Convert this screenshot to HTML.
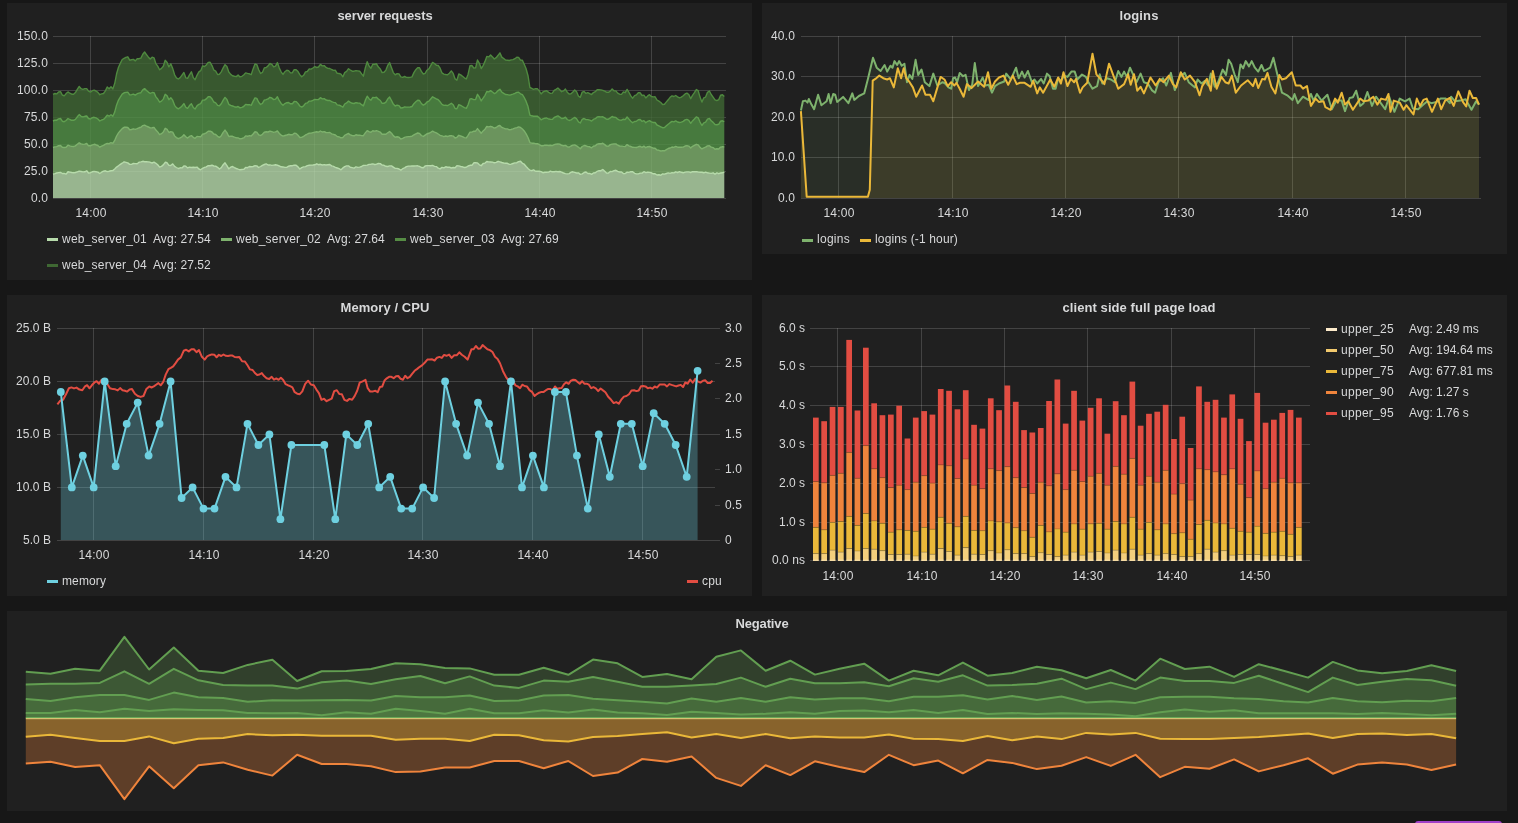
<!DOCTYPE html>
<html><head><meta charset="utf-8"><style>
html,body{margin:0;padding:0;background:#171717;width:1518px;height:823px;overflow:hidden}
body{position:relative;font-family:"Liberation Sans",sans-serif;font-size:12px;color:#d8d9da}
.p{position:absolute;background:#202020}
.t{position:absolute;line-height:16px;white-space:nowrap;will-change:transform}
.sw{position:absolute;height:3px}
svg{position:absolute;left:0;top:0}
.btn{position:absolute;left:1415px;top:821px;width:87px;height:20px;border-radius:3px;background:#a040c8}
</style></head><body>
<div class="p" style="left:7px;top:3px;width:745px;height:277px"></div><div class="p" style="left:762px;top:3px;width:745px;height:251px"></div><div class="p" style="left:7px;top:295px;width:745px;height:301px"></div><div class="p" style="left:762px;top:295px;width:745px;height:301px"></div><div class="p" style="left:7px;top:611px;width:1500px;height:200px"></div>
<svg width="1518" height="823" viewBox="0 0 1518 823">
<line x1="53" y1="198.5" x2="726" y2="198.5" stroke="rgba(255,255,255,0.16)" stroke-width="1"/><line x1="53" y1="171.5" x2="726" y2="171.5" stroke="rgba(255,255,255,0.16)" stroke-width="1"/><line x1="53" y1="144.5" x2="726" y2="144.5" stroke="rgba(255,255,255,0.16)" stroke-width="1"/><line x1="53" y1="117.5" x2="726" y2="117.5" stroke="rgba(255,255,255,0.16)" stroke-width="1"/><line x1="53" y1="90.5" x2="726" y2="90.5" stroke="rgba(255,255,255,0.16)" stroke-width="1"/><line x1="53" y1="63.5" x2="726" y2="63.5" stroke="rgba(255,255,255,0.16)" stroke-width="1"/><line x1="53" y1="36.5" x2="726" y2="36.5" stroke="rgba(255,255,255,0.16)" stroke-width="1"/><line x1="90.5" y1="36" x2="90.5" y2="198" stroke="rgba(255,255,255,0.16)" stroke-width="1"/><line x1="202.5" y1="36" x2="202.5" y2="198" stroke="rgba(255,255,255,0.16)" stroke-width="1"/><line x1="314.5" y1="36" x2="314.5" y2="198" stroke="rgba(255,255,255,0.16)" stroke-width="1"/><line x1="427.5" y1="36" x2="427.5" y2="198" stroke="rgba(255,255,255,0.16)" stroke-width="1"/><line x1="539.5" y1="36" x2="539.5" y2="198" stroke="rgba(255,255,255,0.16)" stroke-width="1"/><line x1="651.5" y1="36" x2="651.5" y2="198" stroke="rgba(255,255,255,0.16)" stroke-width="1"/><line x1="801" y1="198.5" x2="1481" y2="198.5" stroke="rgba(255,255,255,0.16)" stroke-width="1"/><line x1="801" y1="157.5" x2="1481" y2="157.5" stroke="rgba(255,255,255,0.16)" stroke-width="1"/><line x1="801" y1="117.5" x2="1481" y2="117.5" stroke="rgba(255,255,255,0.16)" stroke-width="1"/><line x1="801" y1="76.5" x2="1481" y2="76.5" stroke="rgba(255,255,255,0.16)" stroke-width="1"/><line x1="801" y1="36.5" x2="1481" y2="36.5" stroke="rgba(255,255,255,0.16)" stroke-width="1"/><line x1="838.5" y1="36" x2="838.5" y2="198" stroke="rgba(255,255,255,0.16)" stroke-width="1"/><line x1="952.5" y1="36" x2="952.5" y2="198" stroke="rgba(255,255,255,0.16)" stroke-width="1"/><line x1="1065.5" y1="36" x2="1065.5" y2="198" stroke="rgba(255,255,255,0.16)" stroke-width="1"/><line x1="1178.5" y1="36" x2="1178.5" y2="198" stroke="rgba(255,255,255,0.16)" stroke-width="1"/><line x1="1292.5" y1="36" x2="1292.5" y2="198" stroke="rgba(255,255,255,0.16)" stroke-width="1"/><line x1="1405.5" y1="36" x2="1405.5" y2="198" stroke="rgba(255,255,255,0.16)" stroke-width="1"/><line x1="57" y1="540.5" x2="715" y2="540.5" stroke="rgba(255,255,255,0.16)" stroke-width="1"/><line x1="57" y1="487.5" x2="715" y2="487.5" stroke="rgba(255,255,255,0.16)" stroke-width="1"/><line x1="57" y1="434.5" x2="715" y2="434.5" stroke="rgba(255,255,255,0.16)" stroke-width="1"/><line x1="57" y1="381.5" x2="715" y2="381.5" stroke="rgba(255,255,255,0.16)" stroke-width="1"/><line x1="57" y1="328.5" x2="715" y2="328.5" stroke="rgba(255,255,255,0.16)" stroke-width="1"/><line x1="715" y1="540.5" x2="720" y2="540.5" stroke="rgba(255,255,255,0.16)"/><line x1="715" y1="505.5" x2="720" y2="505.5" stroke="rgba(255,255,255,0.16)"/><line x1="715" y1="469.5" x2="720" y2="469.5" stroke="rgba(255,255,255,0.16)"/><line x1="715" y1="434.5" x2="720" y2="434.5" stroke="rgba(255,255,255,0.16)"/><line x1="715" y1="398.5" x2="720" y2="398.5" stroke="rgba(255,255,255,0.16)"/><line x1="715" y1="363.5" x2="720" y2="363.5" stroke="rgba(255,255,255,0.16)"/><line x1="715" y1="328.5" x2="720" y2="328.5" stroke="rgba(255,255,255,0.16)"/><line x1="93.5" y1="328" x2="93.5" y2="540" stroke="rgba(255,255,255,0.16)" stroke-width="1"/><line x1="203.5" y1="328" x2="203.5" y2="540" stroke="rgba(255,255,255,0.16)" stroke-width="1"/><line x1="313.5" y1="328" x2="313.5" y2="540" stroke="rgba(255,255,255,0.16)" stroke-width="1"/><line x1="422.5" y1="328" x2="422.5" y2="540" stroke="rgba(255,255,255,0.16)" stroke-width="1"/><line x1="532.5" y1="328" x2="532.5" y2="540" stroke="rgba(255,255,255,0.16)" stroke-width="1"/><line x1="642.5" y1="328" x2="642.5" y2="540" stroke="rgba(255,255,255,0.16)" stroke-width="1"/><line x1="810" y1="560.5" x2="1310" y2="560.5" stroke="rgba(255,255,255,0.16)" stroke-width="1"/><line x1="810" y1="522.5" x2="1310" y2="522.5" stroke="rgba(255,255,255,0.16)" stroke-width="1"/><line x1="810" y1="483.5" x2="1310" y2="483.5" stroke="rgba(255,255,255,0.16)" stroke-width="1"/><line x1="810" y1="444.5" x2="1310" y2="444.5" stroke="rgba(255,255,255,0.16)" stroke-width="1"/><line x1="810" y1="405.5" x2="1310" y2="405.5" stroke="rgba(255,255,255,0.16)" stroke-width="1"/><line x1="810" y1="366.5" x2="1310" y2="366.5" stroke="rgba(255,255,255,0.16)" stroke-width="1"/><line x1="810" y1="328.5" x2="1310" y2="328.5" stroke="rgba(255,255,255,0.16)" stroke-width="1"/><line x1="837.5" y1="328" x2="837.5" y2="560" stroke="rgba(255,255,255,0.16)" stroke-width="1"/><line x1="921.5" y1="328" x2="921.5" y2="560" stroke="rgba(255,255,255,0.16)" stroke-width="1"/><line x1="1004.5" y1="328" x2="1004.5" y2="560" stroke="rgba(255,255,255,0.16)" stroke-width="1"/><line x1="1087.5" y1="328" x2="1087.5" y2="560" stroke="rgba(255,255,255,0.16)" stroke-width="1"/><line x1="1171.5" y1="328" x2="1171.5" y2="560" stroke="rgba(255,255,255,0.16)" stroke-width="1"/><line x1="1254.5" y1="328" x2="1254.5" y2="560" stroke="rgba(255,255,255,0.16)" stroke-width="1"/>
<path d="M53.0,174.1 L54.9,173.6 L56.7,173.0 L58.6,172.6 L60.5,172.4 L62.3,173.5 L64.2,173.4 L66.1,174.1 L68.0,171.7 L69.8,172.1 L71.7,172.5 L73.6,172.7 L75.4,172.5 L77.3,171.8 L79.2,171.1 L81.1,171.5 L82.9,171.9 L84.8,171.8 L86.7,170.8 L88.5,173.0 L90.4,172.7 L92.3,171.8 L94.1,171.4 L96.0,171.7 L97.9,172.1 L99.8,173.5 L101.6,172.2 L103.5,171.2 L105.4,170.8 L107.2,171.6 L109.1,171.2 L111.0,170.7 L112.8,170.6 L114.7,169.0 L116.6,167.1 L118.5,165.7 L120.3,164.4 L122.2,163.2 L124.1,161.8 L125.9,162.3 L127.8,162.9 L129.7,164.4 L131.5,164.4 L133.4,163.5 L135.3,163.6 L137.2,163.7 L139.0,162.3 L140.9,161.9 L142.8,161.3 L144.6,161.7 L146.5,161.8 L148.4,161.9 L150.2,162.3 L152.1,163.0 L154.0,162.2 L155.9,163.3 L157.7,164.8 L159.6,167.1 L161.5,166.4 L163.3,164.9 L165.2,162.3 L167.1,162.8 L168.9,165.3 L170.8,165.5 L172.7,163.9 L174.6,166.4 L176.4,167.5 L178.3,168.5 L180.2,167.8 L182.0,167.9 L183.9,165.9 L185.8,166.3 L187.6,167.9 L189.5,167.2 L191.4,167.5 L193.3,167.2 L195.1,167.5 L197.0,167.1 L198.9,169.0 L200.7,169.8 L202.6,168.3 L204.5,167.3 L206.3,166.8 L208.2,165.7 L210.1,165.7 L212.0,165.2 L213.8,166.0 L215.7,166.2 L217.6,167.3 L219.4,169.0 L221.3,167.6 L223.2,164.7 L225.0,162.8 L226.9,165.6 L228.8,168.8 L230.7,167.2 L232.5,166.5 L234.4,167.7 L236.3,168.5 L238.1,169.2 L240.0,169.8 L241.9,169.5 L243.7,169.4 L245.6,167.4 L247.5,167.7 L249.4,166.5 L251.2,166.7 L253.1,166.5 L255.0,165.7 L256.8,165.9 L258.7,167.5 L260.6,166.5 L262.4,165.3 L264.3,164.5 L266.2,163.9 L268.1,165.0 L269.9,164.9 L271.8,165.4 L273.7,165.1 L275.5,164.8 L277.4,165.2 L279.3,166.0 L281.1,166.8 L283.0,167.0 L284.9,167.4 L286.8,167.4 L288.6,166.2 L290.5,165.7 L292.4,165.7 L294.2,165.1 L296.1,165.3 L298.0,166.9 L299.8,169.0 L301.7,167.7 L303.6,166.9 L305.5,166.6 L307.3,165.6 L309.2,165.3 L311.1,165.1 L312.9,165.0 L314.8,164.8 L316.7,163.8 L318.5,164.7 L320.4,164.3 L322.3,165.0 L324.2,164.6 L326.0,165.0 L327.9,164.7 L329.8,164.5 L331.6,165.9 L333.5,166.4 L335.4,167.3 L337.2,168.0 L339.1,168.7 L341.0,169.8 L342.9,167.9 L344.7,166.7 L346.6,165.9 L348.5,165.9 L350.3,167.3 L352.2,167.6 L354.1,168.1 L355.9,166.9 L357.8,167.4 L359.7,167.1 L361.6,166.5 L363.4,165.4 L365.3,165.4 L367.2,165.1 L369.0,164.4 L370.9,164.3 L372.8,163.9 L374.6,164.5 L376.5,164.2 L378.4,163.5 L380.3,163.6 L382.1,165.0 L384.0,165.3 L385.9,166.3 L387.7,166.5 L389.6,165.9 L391.5,165.9 L393.3,167.1 L395.2,168.4 L397.1,168.4 L399.0,169.0 L400.8,170.2 L402.7,168.7 L404.6,167.9 L406.4,166.6 L408.3,166.1 L410.2,166.1 L412.0,165.9 L413.9,166.0 L415.8,165.9 L417.7,165.8 L419.5,166.3 L421.4,167.5 L423.3,167.7 L425.1,166.0 L427.0,165.6 L428.9,165.6 L430.7,165.8 L432.6,165.4 L434.5,166.4 L436.4,166.6 L438.2,168.2 L440.1,168.9 L442.0,167.4 L443.8,167.9 L445.7,166.8 L447.6,167.3 L449.4,167.1 L451.3,168.0 L453.2,167.5 L455.1,167.7 L456.9,165.8 L458.8,165.9 L460.7,166.5 L462.5,166.8 L464.4,167.5 L466.3,167.3 L468.1,166.0 L470.0,165.3 L471.9,165.3 L473.8,162.8 L475.6,162.8 L477.5,162.9 L479.4,164.8 L481.2,165.7 L483.1,163.5 L485.0,163.1 L486.8,161.5 L488.7,161.9 L490.6,162.0 L492.5,162.1 L494.3,162.8 L496.2,162.4 L498.1,161.3 L499.9,161.8 L501.8,162.5 L503.7,163.0 L505.5,163.3 L507.4,163.3 L509.3,164.4 L511.2,164.2 L513.0,163.5 L514.9,162.9 L516.8,162.7 L518.6,161.6 L520.5,161.2 L522.4,163.3 L524.2,164.2 L526.1,166.5 L528.0,168.4 L529.9,170.2 L531.7,170.7 L533.6,169.9 L535.5,171.3 L537.3,171.2 L539.2,171.3 L541.1,171.6 L542.9,172.7 L544.8,172.2 L546.7,172.3 L548.6,172.1 L550.4,171.1 L552.3,171.8 L554.2,171.8 L556.0,171.4 L557.9,171.8 L559.8,171.5 L561.6,172.1 L563.5,173.0 L565.4,173.6 L567.3,173.9 L569.1,173.6 L571.0,172.2 L572.9,171.8 L574.7,172.3 L576.6,173.0 L578.5,172.9 L580.3,174.4 L582.2,173.8 L584.1,172.5 L586.0,172.0 L587.8,173.5 L589.7,173.4 L591.6,174.4 L593.4,173.0 L595.3,172.7 L597.2,171.3 L599.0,170.6 L600.9,170.7 L602.8,169.5 L604.7,171.3 L606.5,173.1 L608.4,173.1 L610.3,171.4 L612.1,171.6 L614.0,170.6 L615.9,170.3 L617.7,171.3 L619.6,172.0 L621.5,171.9 L623.4,173.6 L625.2,173.5 L627.1,172.2 L629.0,172.4 L630.8,171.7 L632.7,171.8 L634.6,173.3 L636.4,173.9 L638.3,173.9 L640.2,173.1 L642.1,173.1 L643.9,171.7 L645.8,172.6 L647.7,172.2 L649.5,172.4 L651.4,172.8 L653.3,173.8 L655.1,173.8 L657.0,175.0 L658.9,174.8 L660.8,175.3 L662.6,173.9 L664.5,174.1 L666.4,173.5 L668.2,172.9 L670.1,173.4 L672.0,172.6 L673.8,172.9 L675.7,171.8 L677.6,172.5 L679.5,171.6 L681.3,172.3 L683.2,172.8 L685.1,172.1 L686.9,171.9 L688.8,171.9 L690.7,172.5 L692.5,171.7 L694.4,171.7 L696.3,171.6 L698.2,172.0 L700.0,172.2 L701.9,172.3 L703.8,172.8 L705.6,172.2 L707.5,172.8 L709.4,173.1 L711.2,173.4 L713.1,172.8 L715.0,174.1 L716.9,172.9 L718.7,173.7 L720.6,173.0 L722.5,172.8 L724.3,172.2 L724.3,198.0 L722.5,198.0 L720.6,198.0 L718.7,198.0 L716.9,198.0 L715.0,198.0 L713.1,198.0 L711.2,198.0 L709.4,198.0 L707.5,198.0 L705.6,198.0 L703.8,198.0 L701.9,198.0 L700.0,198.0 L698.2,198.0 L696.3,198.0 L694.4,198.0 L692.5,198.0 L690.7,198.0 L688.8,198.0 L686.9,198.0 L685.1,198.0 L683.2,198.0 L681.3,198.0 L679.5,198.0 L677.6,198.0 L675.7,198.0 L673.8,198.0 L672.0,198.0 L670.1,198.0 L668.2,198.0 L666.4,198.0 L664.5,198.0 L662.6,198.0 L660.8,198.0 L658.9,198.0 L657.0,198.0 L655.1,198.0 L653.3,198.0 L651.4,198.0 L649.5,198.0 L647.7,198.0 L645.8,198.0 L643.9,198.0 L642.1,198.0 L640.2,198.0 L638.3,198.0 L636.4,198.0 L634.6,198.0 L632.7,198.0 L630.8,198.0 L629.0,198.0 L627.1,198.0 L625.2,198.0 L623.4,198.0 L621.5,198.0 L619.6,198.0 L617.7,198.0 L615.9,198.0 L614.0,198.0 L612.1,198.0 L610.3,198.0 L608.4,198.0 L606.5,198.0 L604.7,198.0 L602.8,198.0 L600.9,198.0 L599.0,198.0 L597.2,198.0 L595.3,198.0 L593.4,198.0 L591.6,198.0 L589.7,198.0 L587.8,198.0 L586.0,198.0 L584.1,198.0 L582.2,198.0 L580.3,198.0 L578.5,198.0 L576.6,198.0 L574.7,198.0 L572.9,198.0 L571.0,198.0 L569.1,198.0 L567.3,198.0 L565.4,198.0 L563.5,198.0 L561.6,198.0 L559.8,198.0 L557.9,198.0 L556.0,198.0 L554.2,198.0 L552.3,198.0 L550.4,198.0 L548.6,198.0 L546.7,198.0 L544.8,198.0 L542.9,198.0 L541.1,198.0 L539.2,198.0 L537.3,198.0 L535.5,198.0 L533.6,198.0 L531.7,198.0 L529.9,198.0 L528.0,198.0 L526.1,198.0 L524.2,198.0 L522.4,198.0 L520.5,198.0 L518.6,198.0 L516.8,198.0 L514.9,198.0 L513.0,198.0 L511.2,198.0 L509.3,198.0 L507.4,198.0 L505.5,198.0 L503.7,198.0 L501.8,198.0 L499.9,198.0 L498.1,198.0 L496.2,198.0 L494.3,198.0 L492.5,198.0 L490.6,198.0 L488.7,198.0 L486.8,198.0 L485.0,198.0 L483.1,198.0 L481.2,198.0 L479.4,198.0 L477.5,198.0 L475.6,198.0 L473.8,198.0 L471.9,198.0 L470.0,198.0 L468.1,198.0 L466.3,198.0 L464.4,198.0 L462.5,198.0 L460.7,198.0 L458.8,198.0 L456.9,198.0 L455.1,198.0 L453.2,198.0 L451.3,198.0 L449.4,198.0 L447.6,198.0 L445.7,198.0 L443.8,198.0 L442.0,198.0 L440.1,198.0 L438.2,198.0 L436.4,198.0 L434.5,198.0 L432.6,198.0 L430.7,198.0 L428.9,198.0 L427.0,198.0 L425.1,198.0 L423.3,198.0 L421.4,198.0 L419.5,198.0 L417.7,198.0 L415.8,198.0 L413.9,198.0 L412.0,198.0 L410.2,198.0 L408.3,198.0 L406.4,198.0 L404.6,198.0 L402.7,198.0 L400.8,198.0 L399.0,198.0 L397.1,198.0 L395.2,198.0 L393.3,198.0 L391.5,198.0 L389.6,198.0 L387.7,198.0 L385.9,198.0 L384.0,198.0 L382.1,198.0 L380.3,198.0 L378.4,198.0 L376.5,198.0 L374.6,198.0 L372.8,198.0 L370.9,198.0 L369.0,198.0 L367.2,198.0 L365.3,198.0 L363.4,198.0 L361.6,198.0 L359.7,198.0 L357.8,198.0 L355.9,198.0 L354.1,198.0 L352.2,198.0 L350.3,198.0 L348.5,198.0 L346.6,198.0 L344.7,198.0 L342.9,198.0 L341.0,198.0 L339.1,198.0 L337.2,198.0 L335.4,198.0 L333.5,198.0 L331.6,198.0 L329.8,198.0 L327.9,198.0 L326.0,198.0 L324.2,198.0 L322.3,198.0 L320.4,198.0 L318.5,198.0 L316.7,198.0 L314.8,198.0 L312.9,198.0 L311.1,198.0 L309.2,198.0 L307.3,198.0 L305.5,198.0 L303.6,198.0 L301.7,198.0 L299.8,198.0 L298.0,198.0 L296.1,198.0 L294.2,198.0 L292.4,198.0 L290.5,198.0 L288.6,198.0 L286.8,198.0 L284.9,198.0 L283.0,198.0 L281.1,198.0 L279.3,198.0 L277.4,198.0 L275.5,198.0 L273.7,198.0 L271.8,198.0 L269.9,198.0 L268.1,198.0 L266.2,198.0 L264.3,198.0 L262.4,198.0 L260.6,198.0 L258.7,198.0 L256.8,198.0 L255.0,198.0 L253.1,198.0 L251.2,198.0 L249.4,198.0 L247.5,198.0 L245.6,198.0 L243.7,198.0 L241.9,198.0 L240.0,198.0 L238.1,198.0 L236.3,198.0 L234.4,198.0 L232.5,198.0 L230.7,198.0 L228.8,198.0 L226.9,198.0 L225.0,198.0 L223.2,198.0 L221.3,198.0 L219.4,198.0 L217.6,198.0 L215.7,198.0 L213.8,198.0 L212.0,198.0 L210.1,198.0 L208.2,198.0 L206.3,198.0 L204.5,198.0 L202.6,198.0 L200.7,198.0 L198.9,198.0 L197.0,198.0 L195.1,198.0 L193.3,198.0 L191.4,198.0 L189.5,198.0 L187.6,198.0 L185.8,198.0 L183.9,198.0 L182.0,198.0 L180.2,198.0 L178.3,198.0 L176.4,198.0 L174.6,198.0 L172.7,198.0 L170.8,198.0 L168.9,198.0 L167.1,198.0 L165.2,198.0 L163.3,198.0 L161.5,198.0 L159.6,198.0 L157.7,198.0 L155.9,198.0 L154.0,198.0 L152.1,198.0 L150.2,198.0 L148.4,198.0 L146.5,198.0 L144.6,198.0 L142.8,198.0 L140.9,198.0 L139.0,198.0 L137.2,198.0 L135.3,198.0 L133.4,198.0 L131.5,198.0 L129.7,198.0 L127.8,198.0 L125.9,198.0 L124.1,198.0 L122.2,198.0 L120.3,198.0 L118.5,198.0 L116.6,198.0 L114.7,198.0 L112.8,198.0 L111.0,198.0 L109.1,198.0 L107.2,198.0 L105.4,198.0 L103.5,198.0 L101.6,198.0 L99.8,198.0 L97.9,198.0 L96.0,198.0 L94.1,198.0 L92.3,198.0 L90.4,198.0 L88.5,198.0 L86.7,198.0 L84.8,198.0 L82.9,198.0 L81.1,198.0 L79.2,198.0 L77.3,198.0 L75.4,198.0 L73.6,198.0 L71.7,198.0 L69.8,198.0 L68.0,198.0 L66.1,198.0 L64.2,198.0 L62.3,198.0 L60.5,198.0 L58.6,198.0 L56.7,198.0 L54.9,198.0 L53.0,198.0 Z" fill="#B7DBAB" fill-opacity="0.8"/>
<path d="M53.0,147.5 L54.9,146.9 L56.7,146.6 L58.6,145.7 L60.5,145.5 L62.3,147.3 L64.2,147.5 L66.1,147.3 L68.0,145.1 L69.8,145.8 L71.7,146.4 L73.6,146.5 L75.4,145.9 L77.3,144.3 L79.2,142.8 L81.1,143.9 L82.9,144.4 L84.8,144.1 L86.7,143.4 L88.5,145.8 L90.4,145.8 L92.3,144.8 L94.1,144.3 L96.0,144.8 L97.9,145.5 L99.8,147.2 L101.6,146.1 L103.5,145.3 L105.4,144.1 L107.2,143.4 L109.1,143.7 L111.0,142.7 L112.8,143.4 L114.7,140.5 L116.6,136.0 L118.5,132.9 L120.3,130.7 L122.2,128.6 L124.1,127.3 L125.9,127.3 L127.8,127.5 L129.7,129.7 L131.5,129.5 L133.4,128.8 L135.3,129.4 L137.2,128.7 L139.0,127.8 L140.9,127.3 L142.8,125.6 L144.6,125.1 L146.5,126.1 L148.4,127.0 L150.2,127.9 L152.1,127.8 L154.0,127.4 L155.9,130.1 L157.7,131.9 L159.6,134.6 L161.5,133.7 L163.3,132.0 L165.2,128.3 L167.1,129.4 L168.9,132.5 L170.8,131.6 L172.7,132.1 L174.6,135.9 L176.4,137.6 L178.3,138.7 L180.2,137.8 L182.0,136.9 L183.9,134.8 L185.8,136.8 L187.6,138.1 L189.5,136.4 L191.4,135.6 L193.3,137.3 L195.1,138.3 L197.0,136.5 L198.9,136.6 L200.7,136.8 L202.6,134.2 L204.5,133.7 L206.3,132.8 L208.2,131.3 L210.1,131.2 L212.0,132.0 L213.8,134.0 L215.7,134.5 L217.6,136.3 L219.4,137.4 L221.3,135.7 L223.2,132.4 L225.0,130.1 L226.9,132.6 L228.8,136.5 L230.7,136.3 L232.5,136.3 L234.4,137.2 L236.3,137.8 L238.1,137.9 L240.0,138.9 L241.9,138.5 L243.7,137.9 L245.6,135.9 L247.5,136.3 L249.4,135.6 L251.2,136.0 L253.1,134.0 L255.0,131.8 L256.8,132.1 L258.7,134.9 L260.6,135.5 L262.4,134.3 L264.3,132.3 L266.2,131.8 L268.1,132.0 L269.9,131.1 L271.8,131.7 L273.7,132.4 L275.5,131.9 L277.4,131.0 L279.3,133.4 L281.1,135.1 L283.0,136.2 L284.9,135.5 L286.8,135.0 L288.6,134.3 L290.5,134.8 L292.4,134.7 L294.2,133.3 L296.1,133.4 L298.0,135.2 L299.8,137.5 L301.7,137.4 L303.6,136.3 L305.5,135.0 L307.3,134.2 L309.2,133.2 L311.1,133.1 L312.9,132.6 L314.8,132.1 L316.7,131.7 L318.5,132.1 L320.4,131.0 L322.3,132.0 L324.2,131.6 L326.0,132.5 L327.9,132.6 L329.8,132.5 L331.6,133.8 L333.5,134.4 L335.4,135.0 L337.2,136.5 L339.1,136.9 L341.0,137.9 L342.9,137.5 L344.7,135.4 L346.6,134.4 L348.5,133.5 L350.3,134.9 L352.2,135.5 L354.1,135.8 L355.9,134.8 L357.8,135.2 L359.7,135.1 L361.6,135.6 L363.4,135.7 L365.3,132.9 L367.2,130.6 L369.0,131.6 L370.9,132.3 L372.8,130.7 L374.6,131.1 L376.5,130.7 L378.4,131.4 L380.3,132.1 L382.1,134.2 L384.0,134.3 L385.9,134.2 L387.7,132.8 L389.6,131.5 L391.5,133.2 L393.3,135.6 L395.2,137.2 L397.1,136.8 L399.0,137.3 L400.8,139.1 L402.7,138.3 L404.6,137.4 L406.4,136.9 L408.3,136.6 L410.2,136.5 L412.0,136.2 L413.9,134.9 L415.8,133.8 L417.7,133.0 L419.5,133.4 L421.4,135.5 L423.3,136.5 L425.1,135.1 L427.0,133.8 L428.9,133.3 L430.7,132.4 L432.6,131.1 L434.5,132.1 L436.4,132.8 L438.2,134.0 L440.1,135.3 L442.0,135.9 L443.8,136.6 L445.7,136.0 L447.6,136.5 L449.4,135.8 L451.3,135.6 L453.2,136.1 L455.1,138.1 L456.9,137.3 L458.8,135.3 L460.7,136.0 L462.5,136.6 L464.4,137.6 L466.3,137.9 L468.1,135.4 L470.0,132.1 L471.9,132.1 L473.8,131.2 L475.6,131.2 L477.5,128.6 L479.4,131.0 L481.2,133.3 L483.1,130.9 L485.0,129.2 L486.8,126.5 L488.7,126.9 L490.6,126.3 L492.5,127.0 L494.3,128.2 L496.2,127.5 L498.1,126.0 L499.9,125.5 L501.8,127.4 L503.7,128.2 L505.5,128.9 L507.4,128.9 L509.3,129.8 L511.2,129.5 L513.0,128.9 L514.9,128.2 L516.8,127.6 L518.6,126.9 L520.5,127.5 L522.4,129.0 L524.2,130.9 L526.1,133.9 L528.0,137.5 L529.9,142.6 L531.7,143.2 L533.6,143.1 L535.5,143.7 L537.3,143.6 L539.2,144.5 L541.1,145.7 L542.9,145.8 L544.8,145.2 L546.7,145.1 L548.6,145.5 L550.4,145.2 L552.3,145.6 L554.2,144.7 L556.0,144.1 L557.9,143.9 L559.8,144.2 L561.6,145.3 L563.5,145.7 L565.4,145.4 L567.3,146.7 L569.1,147.1 L571.0,146.0 L572.9,145.2 L574.7,144.9 L576.6,145.9 L578.5,147.3 L580.3,148.7 L582.2,146.5 L584.1,145.5 L586.0,145.8 L587.8,146.6 L589.7,146.8 L591.6,147.8 L593.4,146.2 L595.3,145.7 L597.2,144.1 L599.0,143.6 L600.9,143.8 L602.8,143.2 L604.7,144.6 L606.5,146.1 L608.4,146.2 L610.3,144.6 L612.1,144.1 L614.0,143.9 L615.9,143.9 L617.7,145.2 L619.6,146.0 L621.5,146.1 L623.4,146.4 L625.2,146.6 L627.1,144.6 L629.0,145.8 L630.8,146.5 L632.7,147.3 L634.6,147.4 L636.4,147.5 L638.3,146.8 L640.2,146.3 L642.1,147.3 L643.9,146.1 L645.8,147.7 L647.7,146.7 L649.5,146.5 L651.4,147.3 L653.3,148.2 L655.1,148.2 L657.0,150.0 L658.9,150.3 L660.8,151.0 L662.6,150.8 L664.5,150.8 L666.4,149.6 L668.2,148.5 L670.1,148.0 L672.0,147.0 L673.8,147.4 L675.7,146.4 L677.6,147.2 L679.5,147.1 L681.3,147.2 L683.2,147.1 L685.1,146.0 L686.9,145.6 L688.8,146.1 L690.7,147.9 L692.5,146.3 L694.4,145.3 L696.3,144.3 L698.2,144.9 L700.0,147.2 L701.9,148.9 L703.8,147.8 L705.6,147.2 L707.5,145.9 L709.4,145.7 L711.2,147.1 L713.1,147.6 L715.0,149.3 L716.9,148.8 L718.7,149.0 L720.6,147.1 L722.5,146.8 L724.3,146.9 L724.3,172.2 L722.5,172.8 L720.6,173.0 L718.7,173.7 L716.9,172.9 L715.0,174.1 L713.1,172.8 L711.2,173.4 L709.4,173.1 L707.5,172.8 L705.6,172.2 L703.8,172.8 L701.9,172.3 L700.0,172.2 L698.2,172.0 L696.3,171.6 L694.4,171.7 L692.5,171.7 L690.7,172.5 L688.8,171.9 L686.9,171.9 L685.1,172.1 L683.2,172.8 L681.3,172.3 L679.5,171.6 L677.6,172.5 L675.7,171.8 L673.8,172.9 L672.0,172.6 L670.1,173.4 L668.2,172.9 L666.4,173.5 L664.5,174.1 L662.6,173.9 L660.8,175.3 L658.9,174.8 L657.0,175.0 L655.1,173.8 L653.3,173.8 L651.4,172.8 L649.5,172.4 L647.7,172.2 L645.8,172.6 L643.9,171.7 L642.1,173.1 L640.2,173.1 L638.3,173.9 L636.4,173.9 L634.6,173.3 L632.7,171.8 L630.8,171.7 L629.0,172.4 L627.1,172.2 L625.2,173.5 L623.4,173.6 L621.5,171.9 L619.6,172.0 L617.7,171.3 L615.9,170.3 L614.0,170.6 L612.1,171.6 L610.3,171.4 L608.4,173.1 L606.5,173.1 L604.7,171.3 L602.8,169.5 L600.9,170.7 L599.0,170.6 L597.2,171.3 L595.3,172.7 L593.4,173.0 L591.6,174.4 L589.7,173.4 L587.8,173.5 L586.0,172.0 L584.1,172.5 L582.2,173.8 L580.3,174.4 L578.5,172.9 L576.6,173.0 L574.7,172.3 L572.9,171.8 L571.0,172.2 L569.1,173.6 L567.3,173.9 L565.4,173.6 L563.5,173.0 L561.6,172.1 L559.8,171.5 L557.9,171.8 L556.0,171.4 L554.2,171.8 L552.3,171.8 L550.4,171.1 L548.6,172.1 L546.7,172.3 L544.8,172.2 L542.9,172.7 L541.1,171.6 L539.2,171.3 L537.3,171.2 L535.5,171.3 L533.6,169.9 L531.7,170.7 L529.9,170.2 L528.0,168.4 L526.1,166.5 L524.2,164.2 L522.4,163.3 L520.5,161.2 L518.6,161.6 L516.8,162.7 L514.9,162.9 L513.0,163.5 L511.2,164.2 L509.3,164.4 L507.4,163.3 L505.5,163.3 L503.7,163.0 L501.8,162.5 L499.9,161.8 L498.1,161.3 L496.2,162.4 L494.3,162.8 L492.5,162.1 L490.6,162.0 L488.7,161.9 L486.8,161.5 L485.0,163.1 L483.1,163.5 L481.2,165.7 L479.4,164.8 L477.5,162.9 L475.6,162.8 L473.8,162.8 L471.9,165.3 L470.0,165.3 L468.1,166.0 L466.3,167.3 L464.4,167.5 L462.5,166.8 L460.7,166.5 L458.8,165.9 L456.9,165.8 L455.1,167.7 L453.2,167.5 L451.3,168.0 L449.4,167.1 L447.6,167.3 L445.7,166.8 L443.8,167.9 L442.0,167.4 L440.1,168.9 L438.2,168.2 L436.4,166.6 L434.5,166.4 L432.6,165.4 L430.7,165.8 L428.9,165.6 L427.0,165.6 L425.1,166.0 L423.3,167.7 L421.4,167.5 L419.5,166.3 L417.7,165.8 L415.8,165.9 L413.9,166.0 L412.0,165.9 L410.2,166.1 L408.3,166.1 L406.4,166.6 L404.6,167.9 L402.7,168.7 L400.8,170.2 L399.0,169.0 L397.1,168.4 L395.2,168.4 L393.3,167.1 L391.5,165.9 L389.6,165.9 L387.7,166.5 L385.9,166.3 L384.0,165.3 L382.1,165.0 L380.3,163.6 L378.4,163.5 L376.5,164.2 L374.6,164.5 L372.8,163.9 L370.9,164.3 L369.0,164.4 L367.2,165.1 L365.3,165.4 L363.4,165.4 L361.6,166.5 L359.7,167.1 L357.8,167.4 L355.9,166.9 L354.1,168.1 L352.2,167.6 L350.3,167.3 L348.5,165.9 L346.6,165.9 L344.7,166.7 L342.9,167.9 L341.0,169.8 L339.1,168.7 L337.2,168.0 L335.4,167.3 L333.5,166.4 L331.6,165.9 L329.8,164.5 L327.9,164.7 L326.0,165.0 L324.2,164.6 L322.3,165.0 L320.4,164.3 L318.5,164.7 L316.7,163.8 L314.8,164.8 L312.9,165.0 L311.1,165.1 L309.2,165.3 L307.3,165.6 L305.5,166.6 L303.6,166.9 L301.7,167.7 L299.8,169.0 L298.0,166.9 L296.1,165.3 L294.2,165.1 L292.4,165.7 L290.5,165.7 L288.6,166.2 L286.8,167.4 L284.9,167.4 L283.0,167.0 L281.1,166.8 L279.3,166.0 L277.4,165.2 L275.5,164.8 L273.7,165.1 L271.8,165.4 L269.9,164.9 L268.1,165.0 L266.2,163.9 L264.3,164.5 L262.4,165.3 L260.6,166.5 L258.7,167.5 L256.8,165.9 L255.0,165.7 L253.1,166.5 L251.2,166.7 L249.4,166.5 L247.5,167.7 L245.6,167.4 L243.7,169.4 L241.9,169.5 L240.0,169.8 L238.1,169.2 L236.3,168.5 L234.4,167.7 L232.5,166.5 L230.7,167.2 L228.8,168.8 L226.9,165.6 L225.0,162.8 L223.2,164.7 L221.3,167.6 L219.4,169.0 L217.6,167.3 L215.7,166.2 L213.8,166.0 L212.0,165.2 L210.1,165.7 L208.2,165.7 L206.3,166.8 L204.5,167.3 L202.6,168.3 L200.7,169.8 L198.9,169.0 L197.0,167.1 L195.1,167.5 L193.3,167.2 L191.4,167.5 L189.5,167.2 L187.6,167.9 L185.8,166.3 L183.9,165.9 L182.0,167.9 L180.2,167.8 L178.3,168.5 L176.4,167.5 L174.6,166.4 L172.7,163.9 L170.8,165.5 L168.9,165.3 L167.1,162.8 L165.2,162.3 L163.3,164.9 L161.5,166.4 L159.6,167.1 L157.7,164.8 L155.9,163.3 L154.0,162.2 L152.1,163.0 L150.2,162.3 L148.4,161.9 L146.5,161.8 L144.6,161.7 L142.8,161.3 L140.9,161.9 L139.0,162.3 L137.2,163.7 L135.3,163.6 L133.4,163.5 L131.5,164.4 L129.7,164.4 L127.8,162.9 L125.9,162.3 L124.1,161.8 L122.2,163.2 L120.3,164.4 L118.5,165.7 L116.6,167.1 L114.7,169.0 L112.8,170.6 L111.0,170.7 L109.1,171.2 L107.2,171.6 L105.4,170.8 L103.5,171.2 L101.6,172.2 L99.8,173.5 L97.9,172.1 L96.0,171.7 L94.1,171.4 L92.3,171.8 L90.4,172.7 L88.5,173.0 L86.7,170.8 L84.8,171.8 L82.9,171.9 L81.1,171.5 L79.2,171.1 L77.3,171.8 L75.4,172.5 L73.6,172.7 L71.7,172.5 L69.8,172.1 L68.0,171.7 L66.1,174.1 L64.2,173.4 L62.3,173.5 L60.5,172.4 L58.6,172.6 L56.7,173.0 L54.9,173.6 L53.0,174.1 Z" fill="#7EB26D" fill-opacity="0.8"/>
<path d="M53.0,121.0 L54.9,120.2 L56.7,120.2 L58.6,118.9 L60.5,118.5 L62.3,121.2 L64.2,121.7 L66.1,120.5 L68.0,118.5 L69.8,119.5 L71.7,120.3 L73.6,120.3 L75.4,119.3 L77.3,116.8 L79.2,114.6 L81.1,116.3 L82.9,116.9 L84.8,116.3 L86.7,116.0 L88.5,118.5 L90.4,119.0 L92.3,117.7 L94.1,117.3 L96.0,117.9 L97.9,119.0 L99.8,121.0 L101.6,120.0 L103.5,119.4 L105.4,117.5 L107.2,115.2 L109.1,116.2 L111.0,114.7 L112.8,116.2 L114.7,112.1 L116.6,104.9 L118.5,100.1 L120.3,97.1 L122.2,94.1 L124.1,92.8 L125.9,92.4 L127.8,92.1 L129.7,94.9 L131.5,94.7 L133.4,94.1 L135.3,95.1 L137.2,93.7 L139.0,93.2 L140.9,92.7 L142.8,89.9 L144.6,88.6 L146.5,90.4 L148.4,92.1 L150.2,93.5 L152.1,92.5 L154.0,92.6 L155.9,96.9 L157.7,99.0 L159.6,102.2 L161.5,101.1 L163.3,99.1 L165.2,94.3 L167.1,95.9 L168.9,99.7 L170.8,97.7 L172.7,100.2 L174.6,105.3 L176.4,107.7 L178.3,108.9 L180.2,107.7 L182.0,106.0 L183.9,103.6 L185.8,107.3 L187.6,108.3 L189.5,105.6 L191.4,103.7 L193.3,107.5 L195.1,109.0 L197.0,105.9 L198.9,104.3 L200.7,103.7 L202.6,100.1 L204.5,100.1 L206.3,98.9 L208.2,96.8 L210.1,96.7 L212.0,98.8 L213.8,102.0 L215.7,102.9 L217.6,105.4 L219.4,105.8 L221.3,103.8 L223.2,100.1 L225.0,97.4 L226.9,99.5 L228.8,104.3 L230.7,105.4 L232.5,106.0 L234.4,106.7 L236.3,107.2 L238.1,106.5 L240.0,107.9 L241.9,107.4 L243.7,106.5 L245.6,104.4 L247.5,104.8 L249.4,104.7 L251.2,105.4 L253.1,101.4 L255.0,97.9 L256.8,98.4 L258.7,102.3 L260.6,104.5 L262.4,103.4 L264.3,100.1 L266.2,99.6 L268.1,98.9 L269.9,97.3 L271.8,98.0 L273.7,99.6 L275.5,99.1 L277.4,96.8 L279.3,100.7 L281.1,103.4 L283.0,105.3 L284.9,103.6 L286.8,102.7 L288.6,102.5 L290.5,103.8 L292.4,103.7 L294.2,101.5 L296.1,101.6 L298.0,103.4 L299.8,106.0 L301.7,107.1 L303.6,105.8 L305.5,103.4 L307.3,102.9 L309.2,101.1 L311.1,101.1 L312.9,100.3 L314.8,99.4 L316.7,99.6 L318.5,99.6 L320.4,97.7 L322.3,98.9 L324.2,98.6 L326.0,100.0 L327.9,100.5 L329.8,100.5 L331.6,101.7 L333.5,102.4 L335.4,102.6 L337.2,104.9 L339.1,105.2 L341.0,106.0 L342.9,107.1 L344.7,104.0 L346.6,102.9 L348.5,101.1 L350.3,102.4 L352.2,103.3 L354.1,103.5 L355.9,102.7 L357.8,103.0 L359.7,103.1 L361.6,104.7 L363.4,105.9 L365.3,100.4 L367.2,96.2 L369.0,98.7 L370.9,100.2 L372.8,97.5 L374.6,97.6 L376.5,97.3 L378.4,99.2 L380.3,100.5 L382.1,103.4 L384.0,103.3 L385.9,102.1 L387.7,99.1 L389.6,97.1 L391.5,100.5 L393.3,104.1 L395.2,106.0 L397.1,105.2 L399.0,105.6 L400.8,108.0 L402.7,107.8 L404.6,106.9 L406.4,107.1 L408.3,107.1 L410.2,107.0 L412.0,106.5 L413.9,103.7 L415.8,101.8 L417.7,100.3 L419.5,100.5 L421.4,103.5 L423.3,105.2 L425.1,104.2 L427.0,102.0 L428.9,101.1 L430.7,99.0 L432.6,96.8 L434.5,97.8 L436.4,99.0 L438.2,99.7 L440.1,101.8 L442.0,104.4 L443.8,105.4 L445.7,105.3 L447.6,105.6 L449.4,104.5 L451.3,103.3 L453.2,104.8 L455.1,108.5 L456.9,108.7 L458.8,104.6 L460.7,105.4 L462.5,106.5 L464.4,107.7 L466.3,108.4 L468.1,104.8 L470.0,98.9 L471.9,98.8 L473.8,99.6 L475.6,99.6 L477.5,94.3 L479.4,97.2 L481.2,100.9 L483.1,98.2 L485.0,95.3 L486.8,91.5 L488.7,91.9 L490.6,90.6 L492.5,92.0 L494.3,93.6 L496.2,92.6 L498.1,90.6 L499.9,89.2 L501.8,92.2 L503.7,93.3 L505.5,94.5 L507.4,94.6 L509.3,95.1 L511.2,94.7 L513.0,94.2 L514.9,93.4 L516.8,92.4 L518.6,92.2 L520.5,93.8 L522.4,94.6 L524.2,97.5 L526.1,101.4 L528.0,106.6 L529.9,115.1 L531.7,115.8 L533.6,116.2 L535.5,116.2 L537.3,116.1 L539.2,117.7 L541.1,119.8 L542.9,118.9 L544.8,118.2 L546.7,118.0 L548.6,119.0 L550.4,119.3 L552.3,119.4 L554.2,117.5 L556.0,116.7 L557.9,115.9 L559.8,117.0 L561.6,118.5 L563.5,118.3 L565.4,117.2 L567.3,119.5 L569.1,120.5 L571.0,119.9 L572.9,118.5 L574.7,117.4 L576.6,118.9 L578.5,121.8 L580.3,123.0 L582.2,119.3 L584.1,118.5 L586.0,119.6 L587.8,119.6 L589.7,120.2 L591.6,121.1 L593.4,119.4 L595.3,118.7 L597.2,116.9 L599.0,116.7 L600.9,116.9 L602.8,116.8 L604.7,117.9 L606.5,119.2 L608.4,119.2 L610.3,117.9 L612.1,116.5 L614.0,117.3 L615.9,117.4 L617.7,119.2 L619.6,120.1 L621.5,120.2 L623.4,119.2 L625.2,119.6 L627.1,117.0 L629.0,119.1 L630.8,121.2 L632.7,122.7 L634.6,121.5 L636.4,121.2 L638.3,119.7 L640.2,119.5 L642.1,121.4 L643.9,120.6 L645.8,122.8 L647.7,121.3 L649.5,120.6 L651.4,121.9 L653.3,122.5 L655.1,122.5 L657.0,125.0 L658.9,125.8 L660.8,126.8 L662.6,127.7 L664.5,127.5 L666.4,125.8 L668.2,124.2 L670.1,122.7 L672.0,121.4 L673.8,121.9 L675.7,120.9 L677.6,122.0 L679.5,122.5 L681.3,122.1 L683.2,121.4 L685.1,119.9 L686.9,119.4 L688.8,120.3 L690.7,123.3 L692.5,120.9 L694.4,119.0 L696.3,116.9 L698.2,117.8 L700.0,122.1 L701.9,125.5 L703.8,122.8 L705.6,122.1 L707.5,119.1 L709.4,118.4 L711.2,120.8 L713.1,122.4 L715.0,124.5 L716.9,124.7 L718.7,124.3 L720.6,121.2 L722.5,120.8 L724.3,121.6 L724.3,146.9 L722.5,146.8 L720.6,147.1 L718.7,149.0 L716.9,148.8 L715.0,149.3 L713.1,147.6 L711.2,147.1 L709.4,145.7 L707.5,145.9 L705.6,147.2 L703.8,147.8 L701.9,148.9 L700.0,147.2 L698.2,144.9 L696.3,144.3 L694.4,145.3 L692.5,146.3 L690.7,147.9 L688.8,146.1 L686.9,145.6 L685.1,146.0 L683.2,147.1 L681.3,147.2 L679.5,147.1 L677.6,147.2 L675.7,146.4 L673.8,147.4 L672.0,147.0 L670.1,148.0 L668.2,148.5 L666.4,149.6 L664.5,150.8 L662.6,150.8 L660.8,151.0 L658.9,150.3 L657.0,150.0 L655.1,148.2 L653.3,148.2 L651.4,147.3 L649.5,146.5 L647.7,146.7 L645.8,147.7 L643.9,146.1 L642.1,147.3 L640.2,146.3 L638.3,146.8 L636.4,147.5 L634.6,147.4 L632.7,147.3 L630.8,146.5 L629.0,145.8 L627.1,144.6 L625.2,146.6 L623.4,146.4 L621.5,146.1 L619.6,146.0 L617.7,145.2 L615.9,143.9 L614.0,143.9 L612.1,144.1 L610.3,144.6 L608.4,146.2 L606.5,146.1 L604.7,144.6 L602.8,143.2 L600.9,143.8 L599.0,143.6 L597.2,144.1 L595.3,145.7 L593.4,146.2 L591.6,147.8 L589.7,146.8 L587.8,146.6 L586.0,145.8 L584.1,145.5 L582.2,146.5 L580.3,148.7 L578.5,147.3 L576.6,145.9 L574.7,144.9 L572.9,145.2 L571.0,146.0 L569.1,147.1 L567.3,146.7 L565.4,145.4 L563.5,145.7 L561.6,145.3 L559.8,144.2 L557.9,143.9 L556.0,144.1 L554.2,144.7 L552.3,145.6 L550.4,145.2 L548.6,145.5 L546.7,145.1 L544.8,145.2 L542.9,145.8 L541.1,145.7 L539.2,144.5 L537.3,143.6 L535.5,143.7 L533.6,143.1 L531.7,143.2 L529.9,142.6 L528.0,137.5 L526.1,133.9 L524.2,130.9 L522.4,129.0 L520.5,127.5 L518.6,126.9 L516.8,127.6 L514.9,128.2 L513.0,128.9 L511.2,129.5 L509.3,129.8 L507.4,128.9 L505.5,128.9 L503.7,128.2 L501.8,127.4 L499.9,125.5 L498.1,126.0 L496.2,127.5 L494.3,128.2 L492.5,127.0 L490.6,126.3 L488.7,126.9 L486.8,126.5 L485.0,129.2 L483.1,130.9 L481.2,133.3 L479.4,131.0 L477.5,128.6 L475.6,131.2 L473.8,131.2 L471.9,132.1 L470.0,132.1 L468.1,135.4 L466.3,137.9 L464.4,137.6 L462.5,136.6 L460.7,136.0 L458.8,135.3 L456.9,137.3 L455.1,138.1 L453.2,136.1 L451.3,135.6 L449.4,135.8 L447.6,136.5 L445.7,136.0 L443.8,136.6 L442.0,135.9 L440.1,135.3 L438.2,134.0 L436.4,132.8 L434.5,132.1 L432.6,131.1 L430.7,132.4 L428.9,133.3 L427.0,133.8 L425.1,135.1 L423.3,136.5 L421.4,135.5 L419.5,133.4 L417.7,133.0 L415.8,133.8 L413.9,134.9 L412.0,136.2 L410.2,136.5 L408.3,136.6 L406.4,136.9 L404.6,137.4 L402.7,138.3 L400.8,139.1 L399.0,137.3 L397.1,136.8 L395.2,137.2 L393.3,135.6 L391.5,133.2 L389.6,131.5 L387.7,132.8 L385.9,134.2 L384.0,134.3 L382.1,134.2 L380.3,132.1 L378.4,131.4 L376.5,130.7 L374.6,131.1 L372.8,130.7 L370.9,132.3 L369.0,131.6 L367.2,130.6 L365.3,132.9 L363.4,135.7 L361.6,135.6 L359.7,135.1 L357.8,135.2 L355.9,134.8 L354.1,135.8 L352.2,135.5 L350.3,134.9 L348.5,133.5 L346.6,134.4 L344.7,135.4 L342.9,137.5 L341.0,137.9 L339.1,136.9 L337.2,136.5 L335.4,135.0 L333.5,134.4 L331.6,133.8 L329.8,132.5 L327.9,132.6 L326.0,132.5 L324.2,131.6 L322.3,132.0 L320.4,131.0 L318.5,132.1 L316.7,131.7 L314.8,132.1 L312.9,132.6 L311.1,133.1 L309.2,133.2 L307.3,134.2 L305.5,135.0 L303.6,136.3 L301.7,137.4 L299.8,137.5 L298.0,135.2 L296.1,133.4 L294.2,133.3 L292.4,134.7 L290.5,134.8 L288.6,134.3 L286.8,135.0 L284.9,135.5 L283.0,136.2 L281.1,135.1 L279.3,133.4 L277.4,131.0 L275.5,131.9 L273.7,132.4 L271.8,131.7 L269.9,131.1 L268.1,132.0 L266.2,131.8 L264.3,132.3 L262.4,134.3 L260.6,135.5 L258.7,134.9 L256.8,132.1 L255.0,131.8 L253.1,134.0 L251.2,136.0 L249.4,135.6 L247.5,136.3 L245.6,135.9 L243.7,137.9 L241.9,138.5 L240.0,138.9 L238.1,137.9 L236.3,137.8 L234.4,137.2 L232.5,136.3 L230.7,136.3 L228.8,136.5 L226.9,132.6 L225.0,130.1 L223.2,132.4 L221.3,135.7 L219.4,137.4 L217.6,136.3 L215.7,134.5 L213.8,134.0 L212.0,132.0 L210.1,131.2 L208.2,131.3 L206.3,132.8 L204.5,133.7 L202.6,134.2 L200.7,136.8 L198.9,136.6 L197.0,136.5 L195.1,138.3 L193.3,137.3 L191.4,135.6 L189.5,136.4 L187.6,138.1 L185.8,136.8 L183.9,134.8 L182.0,136.9 L180.2,137.8 L178.3,138.7 L176.4,137.6 L174.6,135.9 L172.7,132.1 L170.8,131.6 L168.9,132.5 L167.1,129.4 L165.2,128.3 L163.3,132.0 L161.5,133.7 L159.6,134.6 L157.7,131.9 L155.9,130.1 L154.0,127.4 L152.1,127.8 L150.2,127.9 L148.4,127.0 L146.5,126.1 L144.6,125.1 L142.8,125.6 L140.9,127.3 L139.0,127.8 L137.2,128.7 L135.3,129.4 L133.4,128.8 L131.5,129.5 L129.7,129.7 L127.8,127.5 L125.9,127.3 L124.1,127.3 L122.2,128.6 L120.3,130.7 L118.5,132.9 L116.6,136.0 L114.7,140.5 L112.8,143.4 L111.0,142.7 L109.1,143.7 L107.2,143.4 L105.4,144.1 L103.5,145.3 L101.6,146.1 L99.8,147.2 L97.9,145.5 L96.0,144.8 L94.1,144.3 L92.3,144.8 L90.4,145.8 L88.5,145.8 L86.7,143.4 L84.8,144.1 L82.9,144.4 L81.1,143.9 L79.2,142.8 L77.3,144.3 L75.4,145.9 L73.6,146.5 L71.7,146.4 L69.8,145.8 L68.0,145.1 L66.1,147.3 L64.2,147.5 L62.3,147.3 L60.5,145.5 L58.6,145.7 L56.7,146.6 L54.9,146.9 L53.0,147.5 Z" fill="#519146" fill-opacity="0.8"/>
<path d="M53.0,94.4 L54.9,93.5 L56.7,93.9 L58.6,92.0 L60.5,91.6 L62.3,95.0 L64.2,95.9 L66.1,93.6 L68.0,91.9 L69.8,93.2 L71.7,94.2 L73.6,94.2 L75.4,92.6 L77.3,89.3 L79.2,86.4 L81.1,88.7 L82.9,89.3 L84.8,88.6 L86.7,88.6 L88.5,91.2 L90.4,92.1 L92.3,90.7 L94.1,90.2 L96.0,91.0 L97.9,92.4 L99.8,94.7 L101.6,93.9 L103.5,93.5 L105.4,90.9 L107.2,87.0 L109.1,88.7 L111.0,86.8 L112.8,88.9 L114.7,83.6 L116.6,73.8 L118.5,67.2 L120.3,63.4 L122.2,59.5 L124.1,58.4 L125.9,57.4 L127.8,56.8 L129.7,60.2 L131.5,59.8 L133.4,59.4 L135.3,60.9 L137.2,58.7 L139.0,58.7 L140.9,58.1 L142.8,54.2 L144.6,52.0 L146.5,54.6 L148.4,57.2 L150.2,59.1 L152.1,57.2 L154.0,57.8 L155.9,63.7 L157.7,66.1 L159.6,69.8 L161.5,68.4 L163.3,66.2 L165.2,60.3 L167.1,62.5 L168.9,66.9 L170.8,63.8 L172.7,68.4 L174.6,74.8 L176.4,77.8 L178.3,79.0 L180.2,77.6 L182.0,75.1 L183.9,72.5 L185.8,77.8 L187.6,78.4 L189.5,74.8 L191.4,71.8 L193.3,77.6 L195.1,79.8 L197.0,75.3 L198.9,71.9 L200.7,70.7 L202.6,66.0 L204.5,66.5 L206.3,64.9 L208.2,62.4 L210.1,62.3 L212.0,65.6 L213.8,70.0 L215.7,71.2 L217.6,74.5 L219.4,74.2 L221.3,71.9 L223.2,67.8 L225.0,64.7 L226.9,66.5 L228.8,72.0 L230.7,74.4 L232.5,75.8 L234.4,76.3 L236.3,76.6 L238.1,75.1 L240.0,76.9 L241.9,76.3 L243.7,75.0 L245.6,72.9 L247.5,73.4 L249.4,73.8 L251.2,74.7 L253.1,68.9 L255.0,63.9 L256.8,64.6 L258.7,69.7 L260.6,73.5 L262.4,72.4 L264.3,67.9 L266.2,67.5 L268.1,65.9 L269.9,63.5 L271.8,64.3 L273.7,66.8 L275.5,66.2 L277.4,62.6 L279.3,68.1 L281.1,71.8 L283.0,74.4 L284.9,71.7 L286.8,70.3 L288.6,70.6 L290.5,72.9 L292.4,72.7 L294.2,69.6 L296.1,69.7 L298.0,71.6 L299.8,74.6 L301.7,76.8 L303.6,75.3 L305.5,71.9 L307.3,71.5 L309.2,69.0 L311.1,69.1 L312.9,68.0 L314.8,66.7 L316.7,67.5 L318.5,67.0 L320.4,64.4 L322.3,65.9 L324.2,65.6 L326.0,67.4 L327.9,68.4 L329.8,68.5 L331.6,69.5 L333.5,70.4 L335.4,70.3 L337.2,73.4 L339.1,73.5 L341.0,74.1 L342.9,76.8 L344.7,72.6 L346.6,71.3 L348.5,68.7 L350.3,70.0 L352.2,71.2 L354.1,71.2 L355.9,70.6 L357.8,70.9 L359.7,71.2 L361.6,73.8 L363.4,76.2 L365.3,67.9 L367.2,61.7 L369.0,65.9 L370.9,68.2 L372.8,64.3 L374.6,64.2 L376.5,63.8 L378.4,67.1 L380.3,69.0 L382.1,72.6 L384.0,72.3 L385.9,70.1 L387.7,65.4 L389.6,62.6 L391.5,67.8 L393.3,72.6 L395.2,74.8 L397.1,73.6 L399.0,73.9 L400.8,76.9 L402.7,77.4 L404.6,76.5 L406.4,77.4 L408.3,77.5 L410.2,77.4 L412.0,76.9 L413.9,72.6 L415.8,69.7 L417.7,67.6 L419.5,67.7 L421.4,71.4 L423.3,74.0 L425.1,73.3 L427.0,70.2 L428.9,68.8 L430.7,65.7 L432.6,62.4 L434.5,63.5 L436.4,65.3 L438.2,65.5 L440.1,68.2 L442.0,72.9 L443.8,74.1 L445.7,74.5 L447.6,74.7 L449.4,73.2 L451.3,70.9 L453.2,73.4 L455.1,78.9 L456.9,80.2 L458.8,74.0 L460.7,74.9 L462.5,76.3 L464.4,77.8 L466.3,79.0 L468.1,74.2 L470.0,65.7 L471.9,65.5 L473.8,68.0 L475.6,67.9 L477.5,60.0 L479.4,63.3 L481.2,68.5 L483.1,65.6 L485.0,61.4 L486.8,56.4 L488.7,56.9 L490.6,55.0 L492.5,56.9 L494.3,59.0 L496.2,57.7 L498.1,55.3 L499.9,52.9 L501.8,57.1 L503.7,58.5 L505.5,60.1 L507.4,60.3 L509.3,60.5 L511.2,59.9 L513.0,59.6 L514.9,58.7 L516.8,57.2 L518.6,57.4 L520.5,60.1 L522.4,60.2 L524.2,64.2 L526.1,68.8 L528.0,75.7 L529.9,87.5 L531.7,88.4 L533.6,89.4 L535.5,88.7 L537.3,88.6 L539.2,90.9 L541.1,93.9 L542.9,92.0 L544.8,91.2 L546.7,90.8 L548.6,92.4 L550.4,93.4 L552.3,93.1 L554.2,90.4 L556.0,89.3 L557.9,88.0 L559.8,89.7 L561.6,91.7 L563.5,90.9 L565.4,89.0 L567.3,92.3 L569.1,94.0 L571.0,93.7 L572.9,91.9 L574.7,90.0 L576.6,91.8 L578.5,96.2 L580.3,97.3 L582.2,92.1 L584.1,91.5 L586.0,93.4 L587.8,92.7 L589.7,93.7 L591.6,94.5 L593.4,92.6 L595.3,91.7 L597.2,89.6 L599.0,89.7 L600.9,89.9 L602.8,90.4 L604.7,91.2 L606.5,92.2 L608.4,92.3 L610.3,91.1 L612.1,88.9 L614.0,90.7 L615.9,90.9 L617.7,93.1 L619.6,94.2 L621.5,94.4 L623.4,92.0 L625.2,92.7 L627.1,89.4 L629.0,92.5 L630.8,95.9 L632.7,98.2 L634.6,95.6 L636.4,94.9 L638.3,92.6 L640.2,92.8 L642.1,95.5 L643.9,95.1 L645.8,97.9 L647.7,95.9 L649.5,94.7 L651.4,96.5 L653.3,96.9 L655.1,96.8 L657.0,100.0 L658.9,101.2 L660.8,102.5 L662.6,104.5 L664.5,104.2 L666.4,101.9 L668.2,99.8 L670.1,97.3 L672.0,95.9 L673.8,96.5 L675.7,95.5 L677.6,96.8 L679.5,97.9 L681.3,97.1 L683.2,95.7 L685.1,93.9 L686.9,93.1 L688.8,94.5 L690.7,98.7 L692.5,95.4 L694.4,92.6 L696.3,89.6 L698.2,90.7 L700.0,97.1 L701.9,102.1 L703.8,97.8 L705.6,97.1 L707.5,92.3 L709.4,91.0 L711.2,94.5 L713.1,97.2 L715.0,99.8 L716.9,100.6 L718.7,99.7 L720.6,95.3 L722.5,94.8 L724.3,96.4 L724.3,121.6 L722.5,120.8 L720.6,121.2 L718.7,124.3 L716.9,124.7 L715.0,124.5 L713.1,122.4 L711.2,120.8 L709.4,118.4 L707.5,119.1 L705.6,122.1 L703.8,122.8 L701.9,125.5 L700.0,122.1 L698.2,117.8 L696.3,116.9 L694.4,119.0 L692.5,120.9 L690.7,123.3 L688.8,120.3 L686.9,119.4 L685.1,119.9 L683.2,121.4 L681.3,122.1 L679.5,122.5 L677.6,122.0 L675.7,120.9 L673.8,121.9 L672.0,121.4 L670.1,122.7 L668.2,124.2 L666.4,125.8 L664.5,127.5 L662.6,127.7 L660.8,126.8 L658.9,125.8 L657.0,125.0 L655.1,122.5 L653.3,122.5 L651.4,121.9 L649.5,120.6 L647.7,121.3 L645.8,122.8 L643.9,120.6 L642.1,121.4 L640.2,119.5 L638.3,119.7 L636.4,121.2 L634.6,121.5 L632.7,122.7 L630.8,121.2 L629.0,119.1 L627.1,117.0 L625.2,119.6 L623.4,119.2 L621.5,120.2 L619.6,120.1 L617.7,119.2 L615.9,117.4 L614.0,117.3 L612.1,116.5 L610.3,117.9 L608.4,119.2 L606.5,119.2 L604.7,117.9 L602.8,116.8 L600.9,116.9 L599.0,116.7 L597.2,116.9 L595.3,118.7 L593.4,119.4 L591.6,121.1 L589.7,120.2 L587.8,119.6 L586.0,119.6 L584.1,118.5 L582.2,119.3 L580.3,123.0 L578.5,121.8 L576.6,118.9 L574.7,117.4 L572.9,118.5 L571.0,119.9 L569.1,120.5 L567.3,119.5 L565.4,117.2 L563.5,118.3 L561.6,118.5 L559.8,117.0 L557.9,115.9 L556.0,116.7 L554.2,117.5 L552.3,119.4 L550.4,119.3 L548.6,119.0 L546.7,118.0 L544.8,118.2 L542.9,118.9 L541.1,119.8 L539.2,117.7 L537.3,116.1 L535.5,116.2 L533.6,116.2 L531.7,115.8 L529.9,115.1 L528.0,106.6 L526.1,101.4 L524.2,97.5 L522.4,94.6 L520.5,93.8 L518.6,92.2 L516.8,92.4 L514.9,93.4 L513.0,94.2 L511.2,94.7 L509.3,95.1 L507.4,94.6 L505.5,94.5 L503.7,93.3 L501.8,92.2 L499.9,89.2 L498.1,90.6 L496.2,92.6 L494.3,93.6 L492.5,92.0 L490.6,90.6 L488.7,91.9 L486.8,91.5 L485.0,95.3 L483.1,98.2 L481.2,100.9 L479.4,97.2 L477.5,94.3 L475.6,99.6 L473.8,99.6 L471.9,98.8 L470.0,98.9 L468.1,104.8 L466.3,108.4 L464.4,107.7 L462.5,106.5 L460.7,105.4 L458.8,104.6 L456.9,108.7 L455.1,108.5 L453.2,104.8 L451.3,103.3 L449.4,104.5 L447.6,105.6 L445.7,105.3 L443.8,105.4 L442.0,104.4 L440.1,101.8 L438.2,99.7 L436.4,99.0 L434.5,97.8 L432.6,96.8 L430.7,99.0 L428.9,101.1 L427.0,102.0 L425.1,104.2 L423.3,105.2 L421.4,103.5 L419.5,100.5 L417.7,100.3 L415.8,101.8 L413.9,103.7 L412.0,106.5 L410.2,107.0 L408.3,107.1 L406.4,107.1 L404.6,106.9 L402.7,107.8 L400.8,108.0 L399.0,105.6 L397.1,105.2 L395.2,106.0 L393.3,104.1 L391.5,100.5 L389.6,97.1 L387.7,99.1 L385.9,102.1 L384.0,103.3 L382.1,103.4 L380.3,100.5 L378.4,99.2 L376.5,97.3 L374.6,97.6 L372.8,97.5 L370.9,100.2 L369.0,98.7 L367.2,96.2 L365.3,100.4 L363.4,105.9 L361.6,104.7 L359.7,103.1 L357.8,103.0 L355.9,102.7 L354.1,103.5 L352.2,103.3 L350.3,102.4 L348.5,101.1 L346.6,102.9 L344.7,104.0 L342.9,107.1 L341.0,106.0 L339.1,105.2 L337.2,104.9 L335.4,102.6 L333.5,102.4 L331.6,101.7 L329.8,100.5 L327.9,100.5 L326.0,100.0 L324.2,98.6 L322.3,98.9 L320.4,97.7 L318.5,99.6 L316.7,99.6 L314.8,99.4 L312.9,100.3 L311.1,101.1 L309.2,101.1 L307.3,102.9 L305.5,103.4 L303.6,105.8 L301.7,107.1 L299.8,106.0 L298.0,103.4 L296.1,101.6 L294.2,101.5 L292.4,103.7 L290.5,103.8 L288.6,102.5 L286.8,102.7 L284.9,103.6 L283.0,105.3 L281.1,103.4 L279.3,100.7 L277.4,96.8 L275.5,99.1 L273.7,99.6 L271.8,98.0 L269.9,97.3 L268.1,98.9 L266.2,99.6 L264.3,100.1 L262.4,103.4 L260.6,104.5 L258.7,102.3 L256.8,98.4 L255.0,97.9 L253.1,101.4 L251.2,105.4 L249.4,104.7 L247.5,104.8 L245.6,104.4 L243.7,106.5 L241.9,107.4 L240.0,107.9 L238.1,106.5 L236.3,107.2 L234.4,106.7 L232.5,106.0 L230.7,105.4 L228.8,104.3 L226.9,99.5 L225.0,97.4 L223.2,100.1 L221.3,103.8 L219.4,105.8 L217.6,105.4 L215.7,102.9 L213.8,102.0 L212.0,98.8 L210.1,96.7 L208.2,96.8 L206.3,98.9 L204.5,100.1 L202.6,100.1 L200.7,103.7 L198.9,104.3 L197.0,105.9 L195.1,109.0 L193.3,107.5 L191.4,103.7 L189.5,105.6 L187.6,108.3 L185.8,107.3 L183.9,103.6 L182.0,106.0 L180.2,107.7 L178.3,108.9 L176.4,107.7 L174.6,105.3 L172.7,100.2 L170.8,97.7 L168.9,99.7 L167.1,95.9 L165.2,94.3 L163.3,99.1 L161.5,101.1 L159.6,102.2 L157.7,99.0 L155.9,96.9 L154.0,92.6 L152.1,92.5 L150.2,93.5 L148.4,92.1 L146.5,90.4 L144.6,88.6 L142.8,89.9 L140.9,92.7 L139.0,93.2 L137.2,93.7 L135.3,95.1 L133.4,94.1 L131.5,94.7 L129.7,94.9 L127.8,92.1 L125.9,92.4 L124.1,92.8 L122.2,94.1 L120.3,97.1 L118.5,100.1 L116.6,104.9 L114.7,112.1 L112.8,116.2 L111.0,114.7 L109.1,116.2 L107.2,115.2 L105.4,117.5 L103.5,119.4 L101.6,120.0 L99.8,121.0 L97.9,119.0 L96.0,117.9 L94.1,117.3 L92.3,117.7 L90.4,119.0 L88.5,118.5 L86.7,116.0 L84.8,116.3 L82.9,116.9 L81.1,116.3 L79.2,114.6 L77.3,116.8 L75.4,119.3 L73.6,120.3 L71.7,120.3 L69.8,119.5 L68.0,118.5 L66.1,120.5 L64.2,121.7 L62.3,121.2 L60.5,118.5 L58.6,118.9 L56.7,120.2 L54.9,120.2 L53.0,121.0 Z" fill="#3e6633" fill-opacity="0.8"/>
<path d="M53.0,174.1 L54.9,173.6 L56.7,173.0 L58.6,172.6 L60.5,172.4 L62.3,173.5 L64.2,173.4 L66.1,174.1 L68.0,171.7 L69.8,172.1 L71.7,172.5 L73.6,172.7 L75.4,172.5 L77.3,171.8 L79.2,171.1 L81.1,171.5 L82.9,171.9 L84.8,171.8 L86.7,170.8 L88.5,173.0 L90.4,172.7 L92.3,171.8 L94.1,171.4 L96.0,171.7 L97.9,172.1 L99.8,173.5 L101.6,172.2 L103.5,171.2 L105.4,170.8 L107.2,171.6 L109.1,171.2 L111.0,170.7 L112.8,170.6 L114.7,169.0 L116.6,167.1 L118.5,165.7 L120.3,164.4 L122.2,163.2 L124.1,161.8 L125.9,162.3 L127.8,162.9 L129.7,164.4 L131.5,164.4 L133.4,163.5 L135.3,163.6 L137.2,163.7 L139.0,162.3 L140.9,161.9 L142.8,161.3 L144.6,161.7 L146.5,161.8 L148.4,161.9 L150.2,162.3 L152.1,163.0 L154.0,162.2 L155.9,163.3 L157.7,164.8 L159.6,167.1 L161.5,166.4 L163.3,164.9 L165.2,162.3 L167.1,162.8 L168.9,165.3 L170.8,165.5 L172.7,163.9 L174.6,166.4 L176.4,167.5 L178.3,168.5 L180.2,167.8 L182.0,167.9 L183.9,165.9 L185.8,166.3 L187.6,167.9 L189.5,167.2 L191.4,167.5 L193.3,167.2 L195.1,167.5 L197.0,167.1 L198.9,169.0 L200.7,169.8 L202.6,168.3 L204.5,167.3 L206.3,166.8 L208.2,165.7 L210.1,165.7 L212.0,165.2 L213.8,166.0 L215.7,166.2 L217.6,167.3 L219.4,169.0 L221.3,167.6 L223.2,164.7 L225.0,162.8 L226.9,165.6 L228.8,168.8 L230.7,167.2 L232.5,166.5 L234.4,167.7 L236.3,168.5 L238.1,169.2 L240.0,169.8 L241.9,169.5 L243.7,169.4 L245.6,167.4 L247.5,167.7 L249.4,166.5 L251.2,166.7 L253.1,166.5 L255.0,165.7 L256.8,165.9 L258.7,167.5 L260.6,166.5 L262.4,165.3 L264.3,164.5 L266.2,163.9 L268.1,165.0 L269.9,164.9 L271.8,165.4 L273.7,165.1 L275.5,164.8 L277.4,165.2 L279.3,166.0 L281.1,166.8 L283.0,167.0 L284.9,167.4 L286.8,167.4 L288.6,166.2 L290.5,165.7 L292.4,165.7 L294.2,165.1 L296.1,165.3 L298.0,166.9 L299.8,169.0 L301.7,167.7 L303.6,166.9 L305.5,166.6 L307.3,165.6 L309.2,165.3 L311.1,165.1 L312.9,165.0 L314.8,164.8 L316.7,163.8 L318.5,164.7 L320.4,164.3 L322.3,165.0 L324.2,164.6 L326.0,165.0 L327.9,164.7 L329.8,164.5 L331.6,165.9 L333.5,166.4 L335.4,167.3 L337.2,168.0 L339.1,168.7 L341.0,169.8 L342.9,167.9 L344.7,166.7 L346.6,165.9 L348.5,165.9 L350.3,167.3 L352.2,167.6 L354.1,168.1 L355.9,166.9 L357.8,167.4 L359.7,167.1 L361.6,166.5 L363.4,165.4 L365.3,165.4 L367.2,165.1 L369.0,164.4 L370.9,164.3 L372.8,163.9 L374.6,164.5 L376.5,164.2 L378.4,163.5 L380.3,163.6 L382.1,165.0 L384.0,165.3 L385.9,166.3 L387.7,166.5 L389.6,165.9 L391.5,165.9 L393.3,167.1 L395.2,168.4 L397.1,168.4 L399.0,169.0 L400.8,170.2 L402.7,168.7 L404.6,167.9 L406.4,166.6 L408.3,166.1 L410.2,166.1 L412.0,165.9 L413.9,166.0 L415.8,165.9 L417.7,165.8 L419.5,166.3 L421.4,167.5 L423.3,167.7 L425.1,166.0 L427.0,165.6 L428.9,165.6 L430.7,165.8 L432.6,165.4 L434.5,166.4 L436.4,166.6 L438.2,168.2 L440.1,168.9 L442.0,167.4 L443.8,167.9 L445.7,166.8 L447.6,167.3 L449.4,167.1 L451.3,168.0 L453.2,167.5 L455.1,167.7 L456.9,165.8 L458.8,165.9 L460.7,166.5 L462.5,166.8 L464.4,167.5 L466.3,167.3 L468.1,166.0 L470.0,165.3 L471.9,165.3 L473.8,162.8 L475.6,162.8 L477.5,162.9 L479.4,164.8 L481.2,165.7 L483.1,163.5 L485.0,163.1 L486.8,161.5 L488.7,161.9 L490.6,162.0 L492.5,162.1 L494.3,162.8 L496.2,162.4 L498.1,161.3 L499.9,161.8 L501.8,162.5 L503.7,163.0 L505.5,163.3 L507.4,163.3 L509.3,164.4 L511.2,164.2 L513.0,163.5 L514.9,162.9 L516.8,162.7 L518.6,161.6 L520.5,161.2 L522.4,163.3 L524.2,164.2 L526.1,166.5 L528.0,168.4 L529.9,170.2 L531.7,170.7 L533.6,169.9 L535.5,171.3 L537.3,171.2 L539.2,171.3 L541.1,171.6 L542.9,172.7 L544.8,172.2 L546.7,172.3 L548.6,172.1 L550.4,171.1 L552.3,171.8 L554.2,171.8 L556.0,171.4 L557.9,171.8 L559.8,171.5 L561.6,172.1 L563.5,173.0 L565.4,173.6 L567.3,173.9 L569.1,173.6 L571.0,172.2 L572.9,171.8 L574.7,172.3 L576.6,173.0 L578.5,172.9 L580.3,174.4 L582.2,173.8 L584.1,172.5 L586.0,172.0 L587.8,173.5 L589.7,173.4 L591.6,174.4 L593.4,173.0 L595.3,172.7 L597.2,171.3 L599.0,170.6 L600.9,170.7 L602.8,169.5 L604.7,171.3 L606.5,173.1 L608.4,173.1 L610.3,171.4 L612.1,171.6 L614.0,170.6 L615.9,170.3 L617.7,171.3 L619.6,172.0 L621.5,171.9 L623.4,173.6 L625.2,173.5 L627.1,172.2 L629.0,172.4 L630.8,171.7 L632.7,171.8 L634.6,173.3 L636.4,173.9 L638.3,173.9 L640.2,173.1 L642.1,173.1 L643.9,171.7 L645.8,172.6 L647.7,172.2 L649.5,172.4 L651.4,172.8 L653.3,173.8 L655.1,173.8 L657.0,175.0 L658.9,174.8 L660.8,175.3 L662.6,173.9 L664.5,174.1 L666.4,173.5 L668.2,172.9 L670.1,173.4 L672.0,172.6 L673.8,172.9 L675.7,171.8 L677.6,172.5 L679.5,171.6 L681.3,172.3 L683.2,172.8 L685.1,172.1 L686.9,171.9 L688.8,171.9 L690.7,172.5 L692.5,171.7 L694.4,171.7 L696.3,171.6 L698.2,172.0 L700.0,172.2 L701.9,172.3 L703.8,172.8 L705.6,172.2 L707.5,172.8 L709.4,173.1 L711.2,173.4 L713.1,172.8 L715.0,174.1 L716.9,172.9 L718.7,173.7 L720.6,173.0 L722.5,172.8 L724.3,172.2" fill="none" stroke="#B7DBAB" stroke-width="1.4" stroke-linejoin="round"/>
<path d="M53.0,147.5 L54.9,146.9 L56.7,146.6 L58.6,145.7 L60.5,145.5 L62.3,147.3 L64.2,147.5 L66.1,147.3 L68.0,145.1 L69.8,145.8 L71.7,146.4 L73.6,146.5 L75.4,145.9 L77.3,144.3 L79.2,142.8 L81.1,143.9 L82.9,144.4 L84.8,144.1 L86.7,143.4 L88.5,145.8 L90.4,145.8 L92.3,144.8 L94.1,144.3 L96.0,144.8 L97.9,145.5 L99.8,147.2 L101.6,146.1 L103.5,145.3 L105.4,144.1 L107.2,143.4 L109.1,143.7 L111.0,142.7 L112.8,143.4 L114.7,140.5 L116.6,136.0 L118.5,132.9 L120.3,130.7 L122.2,128.6 L124.1,127.3 L125.9,127.3 L127.8,127.5 L129.7,129.7 L131.5,129.5 L133.4,128.8 L135.3,129.4 L137.2,128.7 L139.0,127.8 L140.9,127.3 L142.8,125.6 L144.6,125.1 L146.5,126.1 L148.4,127.0 L150.2,127.9 L152.1,127.8 L154.0,127.4 L155.9,130.1 L157.7,131.9 L159.6,134.6 L161.5,133.7 L163.3,132.0 L165.2,128.3 L167.1,129.4 L168.9,132.5 L170.8,131.6 L172.7,132.1 L174.6,135.9 L176.4,137.6 L178.3,138.7 L180.2,137.8 L182.0,136.9 L183.9,134.8 L185.8,136.8 L187.6,138.1 L189.5,136.4 L191.4,135.6 L193.3,137.3 L195.1,138.3 L197.0,136.5 L198.9,136.6 L200.7,136.8 L202.6,134.2 L204.5,133.7 L206.3,132.8 L208.2,131.3 L210.1,131.2 L212.0,132.0 L213.8,134.0 L215.7,134.5 L217.6,136.3 L219.4,137.4 L221.3,135.7 L223.2,132.4 L225.0,130.1 L226.9,132.6 L228.8,136.5 L230.7,136.3 L232.5,136.3 L234.4,137.2 L236.3,137.8 L238.1,137.9 L240.0,138.9 L241.9,138.5 L243.7,137.9 L245.6,135.9 L247.5,136.3 L249.4,135.6 L251.2,136.0 L253.1,134.0 L255.0,131.8 L256.8,132.1 L258.7,134.9 L260.6,135.5 L262.4,134.3 L264.3,132.3 L266.2,131.8 L268.1,132.0 L269.9,131.1 L271.8,131.7 L273.7,132.4 L275.5,131.9 L277.4,131.0 L279.3,133.4 L281.1,135.1 L283.0,136.2 L284.9,135.5 L286.8,135.0 L288.6,134.3 L290.5,134.8 L292.4,134.7 L294.2,133.3 L296.1,133.4 L298.0,135.2 L299.8,137.5 L301.7,137.4 L303.6,136.3 L305.5,135.0 L307.3,134.2 L309.2,133.2 L311.1,133.1 L312.9,132.6 L314.8,132.1 L316.7,131.7 L318.5,132.1 L320.4,131.0 L322.3,132.0 L324.2,131.6 L326.0,132.5 L327.9,132.6 L329.8,132.5 L331.6,133.8 L333.5,134.4 L335.4,135.0 L337.2,136.5 L339.1,136.9 L341.0,137.9 L342.9,137.5 L344.7,135.4 L346.6,134.4 L348.5,133.5 L350.3,134.9 L352.2,135.5 L354.1,135.8 L355.9,134.8 L357.8,135.2 L359.7,135.1 L361.6,135.6 L363.4,135.7 L365.3,132.9 L367.2,130.6 L369.0,131.6 L370.9,132.3 L372.8,130.7 L374.6,131.1 L376.5,130.7 L378.4,131.4 L380.3,132.1 L382.1,134.2 L384.0,134.3 L385.9,134.2 L387.7,132.8 L389.6,131.5 L391.5,133.2 L393.3,135.6 L395.2,137.2 L397.1,136.8 L399.0,137.3 L400.8,139.1 L402.7,138.3 L404.6,137.4 L406.4,136.9 L408.3,136.6 L410.2,136.5 L412.0,136.2 L413.9,134.9 L415.8,133.8 L417.7,133.0 L419.5,133.4 L421.4,135.5 L423.3,136.5 L425.1,135.1 L427.0,133.8 L428.9,133.3 L430.7,132.4 L432.6,131.1 L434.5,132.1 L436.4,132.8 L438.2,134.0 L440.1,135.3 L442.0,135.9 L443.8,136.6 L445.7,136.0 L447.6,136.5 L449.4,135.8 L451.3,135.6 L453.2,136.1 L455.1,138.1 L456.9,137.3 L458.8,135.3 L460.7,136.0 L462.5,136.6 L464.4,137.6 L466.3,137.9 L468.1,135.4 L470.0,132.1 L471.9,132.1 L473.8,131.2 L475.6,131.2 L477.5,128.6 L479.4,131.0 L481.2,133.3 L483.1,130.9 L485.0,129.2 L486.8,126.5 L488.7,126.9 L490.6,126.3 L492.5,127.0 L494.3,128.2 L496.2,127.5 L498.1,126.0 L499.9,125.5 L501.8,127.4 L503.7,128.2 L505.5,128.9 L507.4,128.9 L509.3,129.8 L511.2,129.5 L513.0,128.9 L514.9,128.2 L516.8,127.6 L518.6,126.9 L520.5,127.5 L522.4,129.0 L524.2,130.9 L526.1,133.9 L528.0,137.5 L529.9,142.6 L531.7,143.2 L533.6,143.1 L535.5,143.7 L537.3,143.6 L539.2,144.5 L541.1,145.7 L542.9,145.8 L544.8,145.2 L546.7,145.1 L548.6,145.5 L550.4,145.2 L552.3,145.6 L554.2,144.7 L556.0,144.1 L557.9,143.9 L559.8,144.2 L561.6,145.3 L563.5,145.7 L565.4,145.4 L567.3,146.7 L569.1,147.1 L571.0,146.0 L572.9,145.2 L574.7,144.9 L576.6,145.9 L578.5,147.3 L580.3,148.7 L582.2,146.5 L584.1,145.5 L586.0,145.8 L587.8,146.6 L589.7,146.8 L591.6,147.8 L593.4,146.2 L595.3,145.7 L597.2,144.1 L599.0,143.6 L600.9,143.8 L602.8,143.2 L604.7,144.6 L606.5,146.1 L608.4,146.2 L610.3,144.6 L612.1,144.1 L614.0,143.9 L615.9,143.9 L617.7,145.2 L619.6,146.0 L621.5,146.1 L623.4,146.4 L625.2,146.6 L627.1,144.6 L629.0,145.8 L630.8,146.5 L632.7,147.3 L634.6,147.4 L636.4,147.5 L638.3,146.8 L640.2,146.3 L642.1,147.3 L643.9,146.1 L645.8,147.7 L647.7,146.7 L649.5,146.5 L651.4,147.3 L653.3,148.2 L655.1,148.2 L657.0,150.0 L658.9,150.3 L660.8,151.0 L662.6,150.8 L664.5,150.8 L666.4,149.6 L668.2,148.5 L670.1,148.0 L672.0,147.0 L673.8,147.4 L675.7,146.4 L677.6,147.2 L679.5,147.1 L681.3,147.2 L683.2,147.1 L685.1,146.0 L686.9,145.6 L688.8,146.1 L690.7,147.9 L692.5,146.3 L694.4,145.3 L696.3,144.3 L698.2,144.9 L700.0,147.2 L701.9,148.9 L703.8,147.8 L705.6,147.2 L707.5,145.9 L709.4,145.7 L711.2,147.1 L713.1,147.6 L715.0,149.3 L716.9,148.8 L718.7,149.0 L720.6,147.1 L722.5,146.8 L724.3,146.9" fill="none" stroke="#7EB26D" stroke-width="1.4" stroke-linejoin="round"/>
<path d="M53.0,121.0 L54.9,120.2 L56.7,120.2 L58.6,118.9 L60.5,118.5 L62.3,121.2 L64.2,121.7 L66.1,120.5 L68.0,118.5 L69.8,119.5 L71.7,120.3 L73.6,120.3 L75.4,119.3 L77.3,116.8 L79.2,114.6 L81.1,116.3 L82.9,116.9 L84.8,116.3 L86.7,116.0 L88.5,118.5 L90.4,119.0 L92.3,117.7 L94.1,117.3 L96.0,117.9 L97.9,119.0 L99.8,121.0 L101.6,120.0 L103.5,119.4 L105.4,117.5 L107.2,115.2 L109.1,116.2 L111.0,114.7 L112.8,116.2 L114.7,112.1 L116.6,104.9 L118.5,100.1 L120.3,97.1 L122.2,94.1 L124.1,92.8 L125.9,92.4 L127.8,92.1 L129.7,94.9 L131.5,94.7 L133.4,94.1 L135.3,95.1 L137.2,93.7 L139.0,93.2 L140.9,92.7 L142.8,89.9 L144.6,88.6 L146.5,90.4 L148.4,92.1 L150.2,93.5 L152.1,92.5 L154.0,92.6 L155.9,96.9 L157.7,99.0 L159.6,102.2 L161.5,101.1 L163.3,99.1 L165.2,94.3 L167.1,95.9 L168.9,99.7 L170.8,97.7 L172.7,100.2 L174.6,105.3 L176.4,107.7 L178.3,108.9 L180.2,107.7 L182.0,106.0 L183.9,103.6 L185.8,107.3 L187.6,108.3 L189.5,105.6 L191.4,103.7 L193.3,107.5 L195.1,109.0 L197.0,105.9 L198.9,104.3 L200.7,103.7 L202.6,100.1 L204.5,100.1 L206.3,98.9 L208.2,96.8 L210.1,96.7 L212.0,98.8 L213.8,102.0 L215.7,102.9 L217.6,105.4 L219.4,105.8 L221.3,103.8 L223.2,100.1 L225.0,97.4 L226.9,99.5 L228.8,104.3 L230.7,105.4 L232.5,106.0 L234.4,106.7 L236.3,107.2 L238.1,106.5 L240.0,107.9 L241.9,107.4 L243.7,106.5 L245.6,104.4 L247.5,104.8 L249.4,104.7 L251.2,105.4 L253.1,101.4 L255.0,97.9 L256.8,98.4 L258.7,102.3 L260.6,104.5 L262.4,103.4 L264.3,100.1 L266.2,99.6 L268.1,98.9 L269.9,97.3 L271.8,98.0 L273.7,99.6 L275.5,99.1 L277.4,96.8 L279.3,100.7 L281.1,103.4 L283.0,105.3 L284.9,103.6 L286.8,102.7 L288.6,102.5 L290.5,103.8 L292.4,103.7 L294.2,101.5 L296.1,101.6 L298.0,103.4 L299.8,106.0 L301.7,107.1 L303.6,105.8 L305.5,103.4 L307.3,102.9 L309.2,101.1 L311.1,101.1 L312.9,100.3 L314.8,99.4 L316.7,99.6 L318.5,99.6 L320.4,97.7 L322.3,98.9 L324.2,98.6 L326.0,100.0 L327.9,100.5 L329.8,100.5 L331.6,101.7 L333.5,102.4 L335.4,102.6 L337.2,104.9 L339.1,105.2 L341.0,106.0 L342.9,107.1 L344.7,104.0 L346.6,102.9 L348.5,101.1 L350.3,102.4 L352.2,103.3 L354.1,103.5 L355.9,102.7 L357.8,103.0 L359.7,103.1 L361.6,104.7 L363.4,105.9 L365.3,100.4 L367.2,96.2 L369.0,98.7 L370.9,100.2 L372.8,97.5 L374.6,97.6 L376.5,97.3 L378.4,99.2 L380.3,100.5 L382.1,103.4 L384.0,103.3 L385.9,102.1 L387.7,99.1 L389.6,97.1 L391.5,100.5 L393.3,104.1 L395.2,106.0 L397.1,105.2 L399.0,105.6 L400.8,108.0 L402.7,107.8 L404.6,106.9 L406.4,107.1 L408.3,107.1 L410.2,107.0 L412.0,106.5 L413.9,103.7 L415.8,101.8 L417.7,100.3 L419.5,100.5 L421.4,103.5 L423.3,105.2 L425.1,104.2 L427.0,102.0 L428.9,101.1 L430.7,99.0 L432.6,96.8 L434.5,97.8 L436.4,99.0 L438.2,99.7 L440.1,101.8 L442.0,104.4 L443.8,105.4 L445.7,105.3 L447.6,105.6 L449.4,104.5 L451.3,103.3 L453.2,104.8 L455.1,108.5 L456.9,108.7 L458.8,104.6 L460.7,105.4 L462.5,106.5 L464.4,107.7 L466.3,108.4 L468.1,104.8 L470.0,98.9 L471.9,98.8 L473.8,99.6 L475.6,99.6 L477.5,94.3 L479.4,97.2 L481.2,100.9 L483.1,98.2 L485.0,95.3 L486.8,91.5 L488.7,91.9 L490.6,90.6 L492.5,92.0 L494.3,93.6 L496.2,92.6 L498.1,90.6 L499.9,89.2 L501.8,92.2 L503.7,93.3 L505.5,94.5 L507.4,94.6 L509.3,95.1 L511.2,94.7 L513.0,94.2 L514.9,93.4 L516.8,92.4 L518.6,92.2 L520.5,93.8 L522.4,94.6 L524.2,97.5 L526.1,101.4 L528.0,106.6 L529.9,115.1 L531.7,115.8 L533.6,116.2 L535.5,116.2 L537.3,116.1 L539.2,117.7 L541.1,119.8 L542.9,118.9 L544.8,118.2 L546.7,118.0 L548.6,119.0 L550.4,119.3 L552.3,119.4 L554.2,117.5 L556.0,116.7 L557.9,115.9 L559.8,117.0 L561.6,118.5 L563.5,118.3 L565.4,117.2 L567.3,119.5 L569.1,120.5 L571.0,119.9 L572.9,118.5 L574.7,117.4 L576.6,118.9 L578.5,121.8 L580.3,123.0 L582.2,119.3 L584.1,118.5 L586.0,119.6 L587.8,119.6 L589.7,120.2 L591.6,121.1 L593.4,119.4 L595.3,118.7 L597.2,116.9 L599.0,116.7 L600.9,116.9 L602.8,116.8 L604.7,117.9 L606.5,119.2 L608.4,119.2 L610.3,117.9 L612.1,116.5 L614.0,117.3 L615.9,117.4 L617.7,119.2 L619.6,120.1 L621.5,120.2 L623.4,119.2 L625.2,119.6 L627.1,117.0 L629.0,119.1 L630.8,121.2 L632.7,122.7 L634.6,121.5 L636.4,121.2 L638.3,119.7 L640.2,119.5 L642.1,121.4 L643.9,120.6 L645.8,122.8 L647.7,121.3 L649.5,120.6 L651.4,121.9 L653.3,122.5 L655.1,122.5 L657.0,125.0 L658.9,125.8 L660.8,126.8 L662.6,127.7 L664.5,127.5 L666.4,125.8 L668.2,124.2 L670.1,122.7 L672.0,121.4 L673.8,121.9 L675.7,120.9 L677.6,122.0 L679.5,122.5 L681.3,122.1 L683.2,121.4 L685.1,119.9 L686.9,119.4 L688.8,120.3 L690.7,123.3 L692.5,120.9 L694.4,119.0 L696.3,116.9 L698.2,117.8 L700.0,122.1 L701.9,125.5 L703.8,122.8 L705.6,122.1 L707.5,119.1 L709.4,118.4 L711.2,120.8 L713.1,122.4 L715.0,124.5 L716.9,124.7 L718.7,124.3 L720.6,121.2 L722.5,120.8 L724.3,121.6" fill="none" stroke="#60a050" stroke-width="1.4" stroke-linejoin="round"/>
<path d="M53.0,94.4 L54.9,93.5 L56.7,93.9 L58.6,92.0 L60.5,91.6 L62.3,95.0 L64.2,95.9 L66.1,93.6 L68.0,91.9 L69.8,93.2 L71.7,94.2 L73.6,94.2 L75.4,92.6 L77.3,89.3 L79.2,86.4 L81.1,88.7 L82.9,89.3 L84.8,88.6 L86.7,88.6 L88.5,91.2 L90.4,92.1 L92.3,90.7 L94.1,90.2 L96.0,91.0 L97.9,92.4 L99.8,94.7 L101.6,93.9 L103.5,93.5 L105.4,90.9 L107.2,87.0 L109.1,88.7 L111.0,86.8 L112.8,88.9 L114.7,83.6 L116.6,73.8 L118.5,67.2 L120.3,63.4 L122.2,59.5 L124.1,58.4 L125.9,57.4 L127.8,56.8 L129.7,60.2 L131.5,59.8 L133.4,59.4 L135.3,60.9 L137.2,58.7 L139.0,58.7 L140.9,58.1 L142.8,54.2 L144.6,52.0 L146.5,54.6 L148.4,57.2 L150.2,59.1 L152.1,57.2 L154.0,57.8 L155.9,63.7 L157.7,66.1 L159.6,69.8 L161.5,68.4 L163.3,66.2 L165.2,60.3 L167.1,62.5 L168.9,66.9 L170.8,63.8 L172.7,68.4 L174.6,74.8 L176.4,77.8 L178.3,79.0 L180.2,77.6 L182.0,75.1 L183.9,72.5 L185.8,77.8 L187.6,78.4 L189.5,74.8 L191.4,71.8 L193.3,77.6 L195.1,79.8 L197.0,75.3 L198.9,71.9 L200.7,70.7 L202.6,66.0 L204.5,66.5 L206.3,64.9 L208.2,62.4 L210.1,62.3 L212.0,65.6 L213.8,70.0 L215.7,71.2 L217.6,74.5 L219.4,74.2 L221.3,71.9 L223.2,67.8 L225.0,64.7 L226.9,66.5 L228.8,72.0 L230.7,74.4 L232.5,75.8 L234.4,76.3 L236.3,76.6 L238.1,75.1 L240.0,76.9 L241.9,76.3 L243.7,75.0 L245.6,72.9 L247.5,73.4 L249.4,73.8 L251.2,74.7 L253.1,68.9 L255.0,63.9 L256.8,64.6 L258.7,69.7 L260.6,73.5 L262.4,72.4 L264.3,67.9 L266.2,67.5 L268.1,65.9 L269.9,63.5 L271.8,64.3 L273.7,66.8 L275.5,66.2 L277.4,62.6 L279.3,68.1 L281.1,71.8 L283.0,74.4 L284.9,71.7 L286.8,70.3 L288.6,70.6 L290.5,72.9 L292.4,72.7 L294.2,69.6 L296.1,69.7 L298.0,71.6 L299.8,74.6 L301.7,76.8 L303.6,75.3 L305.5,71.9 L307.3,71.5 L309.2,69.0 L311.1,69.1 L312.9,68.0 L314.8,66.7 L316.7,67.5 L318.5,67.0 L320.4,64.4 L322.3,65.9 L324.2,65.6 L326.0,67.4 L327.9,68.4 L329.8,68.5 L331.6,69.5 L333.5,70.4 L335.4,70.3 L337.2,73.4 L339.1,73.5 L341.0,74.1 L342.9,76.8 L344.7,72.6 L346.6,71.3 L348.5,68.7 L350.3,70.0 L352.2,71.2 L354.1,71.2 L355.9,70.6 L357.8,70.9 L359.7,71.2 L361.6,73.8 L363.4,76.2 L365.3,67.9 L367.2,61.7 L369.0,65.9 L370.9,68.2 L372.8,64.3 L374.6,64.2 L376.5,63.8 L378.4,67.1 L380.3,69.0 L382.1,72.6 L384.0,72.3 L385.9,70.1 L387.7,65.4 L389.6,62.6 L391.5,67.8 L393.3,72.6 L395.2,74.8 L397.1,73.6 L399.0,73.9 L400.8,76.9 L402.7,77.4 L404.6,76.5 L406.4,77.4 L408.3,77.5 L410.2,77.4 L412.0,76.9 L413.9,72.6 L415.8,69.7 L417.7,67.6 L419.5,67.7 L421.4,71.4 L423.3,74.0 L425.1,73.3 L427.0,70.2 L428.9,68.8 L430.7,65.7 L432.6,62.4 L434.5,63.5 L436.4,65.3 L438.2,65.5 L440.1,68.2 L442.0,72.9 L443.8,74.1 L445.7,74.5 L447.6,74.7 L449.4,73.2 L451.3,70.9 L453.2,73.4 L455.1,78.9 L456.9,80.2 L458.8,74.0 L460.7,74.9 L462.5,76.3 L464.4,77.8 L466.3,79.0 L468.1,74.2 L470.0,65.7 L471.9,65.5 L473.8,68.0 L475.6,67.9 L477.5,60.0 L479.4,63.3 L481.2,68.5 L483.1,65.6 L485.0,61.4 L486.8,56.4 L488.7,56.9 L490.6,55.0 L492.5,56.9 L494.3,59.0 L496.2,57.7 L498.1,55.3 L499.9,52.9 L501.8,57.1 L503.7,58.5 L505.5,60.1 L507.4,60.3 L509.3,60.5 L511.2,59.9 L513.0,59.6 L514.9,58.7 L516.8,57.2 L518.6,57.4 L520.5,60.1 L522.4,60.2 L524.2,64.2 L526.1,68.8 L528.0,75.7 L529.9,87.5 L531.7,88.4 L533.6,89.4 L535.5,88.7 L537.3,88.6 L539.2,90.9 L541.1,93.9 L542.9,92.0 L544.8,91.2 L546.7,90.8 L548.6,92.4 L550.4,93.4 L552.3,93.1 L554.2,90.4 L556.0,89.3 L557.9,88.0 L559.8,89.7 L561.6,91.7 L563.5,90.9 L565.4,89.0 L567.3,92.3 L569.1,94.0 L571.0,93.7 L572.9,91.9 L574.7,90.0 L576.6,91.8 L578.5,96.2 L580.3,97.3 L582.2,92.1 L584.1,91.5 L586.0,93.4 L587.8,92.7 L589.7,93.7 L591.6,94.5 L593.4,92.6 L595.3,91.7 L597.2,89.6 L599.0,89.7 L600.9,89.9 L602.8,90.4 L604.7,91.2 L606.5,92.2 L608.4,92.3 L610.3,91.1 L612.1,88.9 L614.0,90.7 L615.9,90.9 L617.7,93.1 L619.6,94.2 L621.5,94.4 L623.4,92.0 L625.2,92.7 L627.1,89.4 L629.0,92.5 L630.8,95.9 L632.7,98.2 L634.6,95.6 L636.4,94.9 L638.3,92.6 L640.2,92.8 L642.1,95.5 L643.9,95.1 L645.8,97.9 L647.7,95.9 L649.5,94.7 L651.4,96.5 L653.3,96.9 L655.1,96.8 L657.0,100.0 L658.9,101.2 L660.8,102.5 L662.6,104.5 L664.5,104.2 L666.4,101.9 L668.2,99.8 L670.1,97.3 L672.0,95.9 L673.8,96.5 L675.7,95.5 L677.6,96.8 L679.5,97.9 L681.3,97.1 L683.2,95.7 L685.1,93.9 L686.9,93.1 L688.8,94.5 L690.7,98.7 L692.5,95.4 L694.4,92.6 L696.3,89.6 L698.2,90.7 L700.0,97.1 L701.9,102.1 L703.8,97.8 L705.6,97.1 L707.5,92.3 L709.4,91.0 L711.2,94.5 L713.1,97.2 L715.0,99.8 L716.9,100.6 L718.7,99.7 L720.6,95.3 L722.5,94.8 L724.3,96.4" fill="none" stroke="#4f893f" stroke-width="1.4" stroke-linejoin="round"/>
<path d="M800.9,110.5 L802.9,101.3 L805.5,100.6 L807.5,102.6 L808.8,99.0 L811.5,104.6 L814.1,109.2 L818.1,94.7 L821.4,105.2 L826.6,101.3 L828.6,94.0 L830.6,103.2 L833.2,94.0 L835.2,94.7 L837.2,101.9 L843.1,96.9 L848.4,103.2 L852.3,93.4 L854.3,99.9 L858.9,96.0 L864.2,93.4 L868.1,78.2 L873.0,57.8 L876.7,67.7 L880.6,71.0 L884.6,65.0 L887.2,71.6 L890.5,65.7 L892.5,67.7 L894.5,61.1 L897.1,65.0 L899.1,61.1 L901.7,65.7 L904.4,63.7 L907.0,82.2 L909.6,74.9 L912.3,78.9 L915.6,59.8 L918.2,74.9 L921.5,69.6 L924.8,82.2 L929.4,86.1 L933.3,73.6 L937.3,85.5 L942.6,82.2 L945.2,83.5 L948.5,87.4 L951.1,88.7 L953.1,78.2 L955.1,77.5 L957.1,82.2 L959.7,72.9 L963.0,76.2 L965.6,74.9 L968.9,90.1 L972.2,84.8 L974.8,63.1 L978.1,86.1 L982.7,77.5 L985.4,85.5 L988.7,84.8 L992.0,92.7 L995.0,86.1 L999.0,83.5 L1004.2,81.5 L1006.2,73.6 L1008.2,76.2 L1010.8,79.5 L1016.1,67.7 L1018.7,78.2 L1022.0,71.6 L1024.6,77.5 L1027.9,71.0 L1031.9,82.2 L1034.5,79.5 L1037.2,83.5 L1041.1,78.9 L1043.7,83.5 L1047.0,73.6 L1049.7,76.2 L1053.0,88.7 L1055.6,88.7 L1058.2,78.2 L1060.9,80.8 L1064.2,75.6 L1067.5,76.9 L1071.4,71.6 L1074.7,71.6 L1077.3,79.5 L1082.0,74.5 L1085.9,76.9 L1088.5,82.2 L1092.5,88.7 L1097.1,86.1 L1099.7,74.3 L1102.4,83.5 L1107.0,78.2 L1110.9,79.5 L1114.9,82.2 L1118.2,71.0 L1121.5,76.9 L1124.1,71.6 L1126.8,76.9 L1130.0,67.7 L1133.3,74.9 L1136.6,82.2 L1140.6,73.6 L1143.9,82.2 L1147.8,83.5 L1151.8,90.1 L1155.1,92.7 L1158.4,82.2 L1163.0,78.2 L1166.3,85.5 L1170.9,72.9 L1174.8,90.1 L1179.5,76.9 L1184.7,72.9 L1188.7,82.2 L1195.0,87.4 L1197.6,79.5 L1201.6,83.5 L1204.9,80.8 L1208.2,85.5 L1210.8,73.6 L1214.8,86.8 L1218.1,82.2 L1222.7,69.6 L1226.0,74.9 L1228.6,59.8 L1231.2,63.7 L1234.5,74.3 L1237.8,82.2 L1240.5,64.4 L1243.1,68.3 L1245.7,61.1 L1249.0,66.4 L1251.7,61.1 L1254.9,67.7 L1258.2,71.6 L1261.5,65.0 L1264.2,71.0 L1270.1,67.7 L1273.4,57.8 L1277.3,74.3 L1282.0,92.7 L1287.2,95.3 L1292.5,99.9 L1294.5,94.0 L1297.8,103.2 L1303.0,96.7 L1308.3,99.9 L1310.9,94.0 L1313.6,100.6 L1316.9,94.0 L1321.5,100.6 L1327.4,94.7 L1331.8,109.2 L1336.4,100.6 L1341.7,100.6 L1345.0,111.1 L1349.6,98.0 L1352.9,97.3 L1356.2,90.7 L1360.2,105.9 L1363.5,103.2 L1367.4,92.0 L1372.0,105.9 L1376.0,96.7 L1379.9,101.9 L1385.2,109.2 L1389.1,96.7 L1394.4,111.8 L1399.7,98.6 L1405.0,101.3 L1409.6,98.6 L1412.9,108.5 L1418.1,109.2 L1423.4,104.6 L1427.4,101.3 L1431.3,103.2 L1436.6,101.9 L1440.5,98.6 L1445.8,98.6 L1449.8,103.2 L1451.1,96.7 L1455.0,101.3 L1460.3,100.6 L1465.6,99.3 L1471.5,109.8 L1476.1,101.3 L1479.0,104.6 L1479.0,198.1 L800.9,198.1 Z" fill="#7EB26D" fill-opacity="0.1"/>
<path d="M800.9,111.1 L806.7,196.8 L867.9,196.8 L869.8,189.7 L872.7,80.7 L875.4,78.9 L879.3,75.6 L883.3,78.2 L887.2,79.5 L889.9,78.2 L893.8,87.4 L897.8,68.3 L901.1,78.2 L903.7,68.3 L906.3,78.2 L909.6,82.2 L912.9,87.4 L916.2,96.7 L922.1,85.5 L925.4,94.7 L930.0,94.7 L933.3,101.3 L936.6,90.1 L940.6,76.9 L944.5,79.5 L947.8,86.1 L951.1,82.2 L954.4,85.5 L956.4,82.8 L959.7,88.7 L963.6,96.7 L966.9,84.1 L971.5,88.1 L978.1,81.5 L984.1,86.8 L988.0,72.3 L991.3,88.7 L995.0,81.5 L999.0,77.5 L1003.6,75.6 L1008.2,84.8 L1012.8,75.6 L1016.7,84.1 L1020.0,82.8 L1024.6,82.8 L1030.6,86.8 L1033.2,80.8 L1037.2,93.4 L1039.8,87.4 L1043.1,92.7 L1050.3,79.5 L1054.3,86.8 L1058.2,77.5 L1060.9,83.5 L1063.5,72.3 L1067.5,86.1 L1070.8,78.9 L1074.1,82.2 L1076.0,78.9 L1080.0,92.7 L1082.6,87.4 L1087.2,82.8 L1092.5,53.8 L1096.4,74.3 L1100.4,78.9 L1104.4,84.1 L1109.0,63.7 L1113.6,76.2 L1118.2,88.7 L1124.1,84.1 L1128.1,74.3 L1130.7,84.8 L1134.0,74.3 L1137.3,90.7 L1140.6,86.8 L1143.9,93.4 L1150.5,77.5 L1155.7,85.5 L1159.7,78.9 L1163.6,82.2 L1168.9,75.6 L1172.9,84.1 L1176.2,87.4 L1180.8,72.3 L1184.7,79.5 L1190.0,75.6 L1195.0,82.2 L1199.6,95.3 L1202.2,86.1 L1206.9,78.9 L1210.8,90.7 L1212.8,71.0 L1216.7,88.7 L1221.4,76.9 L1225.3,82.2 L1228.6,83.5 L1231.9,75.6 L1235.8,92.7 L1241.1,85.5 L1247.7,80.2 L1253.0,86.1 L1255.6,78.9 L1258.2,88.1 L1262.2,78.9 L1264.8,79.5 L1267.5,72.9 L1271.4,86.8 L1275.4,93.4 L1279.3,74.9 L1282.0,79.5 L1285.9,78.2 L1291.8,72.3 L1295.8,85.5 L1300.4,85.5 L1303.0,88.7 L1307.0,86.1 L1310.9,105.9 L1315.6,98.6 L1318.8,101.9 L1323.5,101.3 L1325.4,107.2 L1330.5,109.8 L1335.1,98.6 L1337.8,102.6 L1341.7,92.7 L1345.0,104.6 L1348.3,101.3 L1352.9,109.8 L1360.2,98.6 L1363.5,101.3 L1368.1,100.6 L1373.3,96.7 L1377.3,104.6 L1381.2,98.6 L1385.9,99.9 L1388.5,94.0 L1390.5,111.8 L1393.8,100.6 L1399.7,102.6 L1403.6,109.8 L1406.3,105.2 L1413.5,114.4 L1416.8,98.6 L1420.1,105.9 L1423.4,99.9 L1426.7,98.6 L1432.0,111.8 L1437.9,98.6 L1441.2,109.2 L1445.1,100.6 L1449.8,98.0 L1453.7,105.9 L1458.3,91.4 L1462.9,101.9 L1466.2,106.5 L1469.5,90.7 L1472.8,98.0 L1476.1,98.0 L1479.0,104.6 L1479.0,198.1 L800.9,198.1 Z" fill="#EAB839" fill-opacity="0.1"/>
<path d="M800.9,110.5 L802.9,101.3 L805.5,100.6 L807.5,102.6 L808.8,99.0 L811.5,104.6 L814.1,109.2 L818.1,94.7 L821.4,105.2 L826.6,101.3 L828.6,94.0 L830.6,103.2 L833.2,94.0 L835.2,94.7 L837.2,101.9 L843.1,96.9 L848.4,103.2 L852.3,93.4 L854.3,99.9 L858.9,96.0 L864.2,93.4 L868.1,78.2 L873.0,57.8 L876.7,67.7 L880.6,71.0 L884.6,65.0 L887.2,71.6 L890.5,65.7 L892.5,67.7 L894.5,61.1 L897.1,65.0 L899.1,61.1 L901.7,65.7 L904.4,63.7 L907.0,82.2 L909.6,74.9 L912.3,78.9 L915.6,59.8 L918.2,74.9 L921.5,69.6 L924.8,82.2 L929.4,86.1 L933.3,73.6 L937.3,85.5 L942.6,82.2 L945.2,83.5 L948.5,87.4 L951.1,88.7 L953.1,78.2 L955.1,77.5 L957.1,82.2 L959.7,72.9 L963.0,76.2 L965.6,74.9 L968.9,90.1 L972.2,84.8 L974.8,63.1 L978.1,86.1 L982.7,77.5 L985.4,85.5 L988.7,84.8 L992.0,92.7 L995.0,86.1 L999.0,83.5 L1004.2,81.5 L1006.2,73.6 L1008.2,76.2 L1010.8,79.5 L1016.1,67.7 L1018.7,78.2 L1022.0,71.6 L1024.6,77.5 L1027.9,71.0 L1031.9,82.2 L1034.5,79.5 L1037.2,83.5 L1041.1,78.9 L1043.7,83.5 L1047.0,73.6 L1049.7,76.2 L1053.0,88.7 L1055.6,88.7 L1058.2,78.2 L1060.9,80.8 L1064.2,75.6 L1067.5,76.9 L1071.4,71.6 L1074.7,71.6 L1077.3,79.5 L1082.0,74.5 L1085.9,76.9 L1088.5,82.2 L1092.5,88.7 L1097.1,86.1 L1099.7,74.3 L1102.4,83.5 L1107.0,78.2 L1110.9,79.5 L1114.9,82.2 L1118.2,71.0 L1121.5,76.9 L1124.1,71.6 L1126.8,76.9 L1130.0,67.7 L1133.3,74.9 L1136.6,82.2 L1140.6,73.6 L1143.9,82.2 L1147.8,83.5 L1151.8,90.1 L1155.1,92.7 L1158.4,82.2 L1163.0,78.2 L1166.3,85.5 L1170.9,72.9 L1174.8,90.1 L1179.5,76.9 L1184.7,72.9 L1188.7,82.2 L1195.0,87.4 L1197.6,79.5 L1201.6,83.5 L1204.9,80.8 L1208.2,85.5 L1210.8,73.6 L1214.8,86.8 L1218.1,82.2 L1222.7,69.6 L1226.0,74.9 L1228.6,59.8 L1231.2,63.7 L1234.5,74.3 L1237.8,82.2 L1240.5,64.4 L1243.1,68.3 L1245.7,61.1 L1249.0,66.4 L1251.7,61.1 L1254.9,67.7 L1258.2,71.6 L1261.5,65.0 L1264.2,71.0 L1270.1,67.7 L1273.4,57.8 L1277.3,74.3 L1282.0,92.7 L1287.2,95.3 L1292.5,99.9 L1294.5,94.0 L1297.8,103.2 L1303.0,96.7 L1308.3,99.9 L1310.9,94.0 L1313.6,100.6 L1316.9,94.0 L1321.5,100.6 L1327.4,94.7 L1331.8,109.2 L1336.4,100.6 L1341.7,100.6 L1345.0,111.1 L1349.6,98.0 L1352.9,97.3 L1356.2,90.7 L1360.2,105.9 L1363.5,103.2 L1367.4,92.0 L1372.0,105.9 L1376.0,96.7 L1379.9,101.9 L1385.2,109.2 L1389.1,96.7 L1394.4,111.8 L1399.7,98.6 L1405.0,101.3 L1409.6,98.6 L1412.9,108.5 L1418.1,109.2 L1423.4,104.6 L1427.4,101.3 L1431.3,103.2 L1436.6,101.9 L1440.5,98.6 L1445.8,98.6 L1449.8,103.2 L1451.1,96.7 L1455.0,101.3 L1460.3,100.6 L1465.6,99.3 L1471.5,109.8 L1476.1,101.3 L1479.0,104.6" fill="none" stroke="#7EB26D" stroke-width="2" stroke-linejoin="round"/>
<path d="M800.9,111.1 L806.7,196.8 L867.9,196.8 L869.8,189.7 L872.7,80.7 L875.4,78.9 L879.3,75.6 L883.3,78.2 L887.2,79.5 L889.9,78.2 L893.8,87.4 L897.8,68.3 L901.1,78.2 L903.7,68.3 L906.3,78.2 L909.6,82.2 L912.9,87.4 L916.2,96.7 L922.1,85.5 L925.4,94.7 L930.0,94.7 L933.3,101.3 L936.6,90.1 L940.6,76.9 L944.5,79.5 L947.8,86.1 L951.1,82.2 L954.4,85.5 L956.4,82.8 L959.7,88.7 L963.6,96.7 L966.9,84.1 L971.5,88.1 L978.1,81.5 L984.1,86.8 L988.0,72.3 L991.3,88.7 L995.0,81.5 L999.0,77.5 L1003.6,75.6 L1008.2,84.8 L1012.8,75.6 L1016.7,84.1 L1020.0,82.8 L1024.6,82.8 L1030.6,86.8 L1033.2,80.8 L1037.2,93.4 L1039.8,87.4 L1043.1,92.7 L1050.3,79.5 L1054.3,86.8 L1058.2,77.5 L1060.9,83.5 L1063.5,72.3 L1067.5,86.1 L1070.8,78.9 L1074.1,82.2 L1076.0,78.9 L1080.0,92.7 L1082.6,87.4 L1087.2,82.8 L1092.5,53.8 L1096.4,74.3 L1100.4,78.9 L1104.4,84.1 L1109.0,63.7 L1113.6,76.2 L1118.2,88.7 L1124.1,84.1 L1128.1,74.3 L1130.7,84.8 L1134.0,74.3 L1137.3,90.7 L1140.6,86.8 L1143.9,93.4 L1150.5,77.5 L1155.7,85.5 L1159.7,78.9 L1163.6,82.2 L1168.9,75.6 L1172.9,84.1 L1176.2,87.4 L1180.8,72.3 L1184.7,79.5 L1190.0,75.6 L1195.0,82.2 L1199.6,95.3 L1202.2,86.1 L1206.9,78.9 L1210.8,90.7 L1212.8,71.0 L1216.7,88.7 L1221.4,76.9 L1225.3,82.2 L1228.6,83.5 L1231.9,75.6 L1235.8,92.7 L1241.1,85.5 L1247.7,80.2 L1253.0,86.1 L1255.6,78.9 L1258.2,88.1 L1262.2,78.9 L1264.8,79.5 L1267.5,72.9 L1271.4,86.8 L1275.4,93.4 L1279.3,74.9 L1282.0,79.5 L1285.9,78.2 L1291.8,72.3 L1295.8,85.5 L1300.4,85.5 L1303.0,88.7 L1307.0,86.1 L1310.9,105.9 L1315.6,98.6 L1318.8,101.9 L1323.5,101.3 L1325.4,107.2 L1330.5,109.8 L1335.1,98.6 L1337.8,102.6 L1341.7,92.7 L1345.0,104.6 L1348.3,101.3 L1352.9,109.8 L1360.2,98.6 L1363.5,101.3 L1368.1,100.6 L1373.3,96.7 L1377.3,104.6 L1381.2,98.6 L1385.9,99.9 L1388.5,94.0 L1390.5,111.8 L1393.8,100.6 L1399.7,102.6 L1403.6,109.8 L1406.3,105.2 L1413.5,114.4 L1416.8,98.6 L1420.1,105.9 L1423.4,99.9 L1426.7,98.6 L1432.0,111.8 L1437.9,98.6 L1441.2,109.2 L1445.1,100.6 L1449.8,98.0 L1453.7,105.9 L1458.3,91.4 L1462.9,101.9 L1466.2,106.5 L1469.5,90.7 L1472.8,98.0 L1476.1,98.0 L1479.0,104.6" fill="none" stroke="#EAB839" stroke-width="2" stroke-linejoin="round"/>
<path d="M60.8,392.0 L71.8,487.4 L82.8,455.6 L93.7,487.4 L104.7,381.4 L115.7,466.2 L126.7,423.8 L137.7,402.6 L148.6,455.6 L159.6,423.8 L170.6,381.4 L181.6,498.0 L192.6,487.4 L203.5,508.6 L214.5,508.6 L225.5,476.8 L236.5,487.4 L247.5,423.8 L258.4,445.0 L269.4,434.4 L280.4,519.2 L291.4,445.0 L324.3,445.0 L335.3,519.2 L346.3,434.4 L357.3,445.0 L368.2,423.8 L379.2,487.4 L390.2,476.8 L401.2,508.6 L412.2,508.6 L423.1,487.4 L434.1,498.0 L445.1,381.4 L456.1,423.8 L467.1,455.6 L478.0,402.6 L489.0,423.8 L500.0,466.2 L511.0,381.4 L522.0,487.4 L532.9,455.6 L543.9,487.4 L554.9,392.0 L565.9,392.0 L576.9,455.6 L587.8,508.6 L598.8,434.4 L609.8,476.8 L620.8,423.8 L631.8,423.8 L642.7,466.2 L653.7,413.2 L664.7,423.8 L675.7,445.0 L686.7,476.8 L697.6,370.8 L697.6,540.0 L60.8,540.0 Z" fill="#6ED0E0" fill-opacity="0.3"/>
<path d="M57.4,404.4 L60.3,400.7 L63.1,399.8 L66.0,394.3 L68.9,388.3 L71.4,387.4 L74.0,388.4 L76.5,387.6 L79.4,389.6 L82.3,390.2 L84.7,386.7 L87.1,385.2 L89.5,388.3 L91.8,385.3 L94.2,382.7 L96.6,381.2 L99.0,383.8 L101.4,379.9 L104.3,381.7 L107.2,383.7 L110.0,388.2 L112.9,389.1 L115.3,389.3 L117.7,390.4 L120.1,388.1 L122.5,390.2 L124.9,390.7 L127.2,391.6 L129.6,389.5 L132.0,389.1 L134.9,393.8 L137.8,396.0 L140.6,396.9 L143.5,396.0 L146.4,388.9 L149.3,386.4 L151.5,387.5 L153.8,386.4 L156.1,384.7 L158.4,383.1 L160.7,385.3 L163.3,381.8 L165.8,374.4 L168.4,369.2 L170.8,367.9 L173.2,366.4 L175.6,363.1 L178.0,359.6 L180.8,357.4 L183.7,350.8 L186.2,349.8 L188.8,351.4 L191.4,349.3 L193.9,349.3 L196.5,352.1 L199.0,350.1 L201.9,356.8 L204.7,359.6 L207.1,356.3 L209.5,355.2 L211.9,354.4 L214.3,354.7 L216.6,357.3 L218.9,354.8 L221.2,356.0 L223.5,354.5 L225.8,355.8 L228.0,356.0 L230.3,355.6 L232.5,355.6 L234.7,357.0 L237.0,357.2 L239.2,356.9 L242.1,361.3 L244.9,361.5 L247.5,365.3 L250.0,369.4 L252.6,370.0 L254.9,373.0 L257.2,375.0 L259.5,374.5 L261.8,373.1 L264.1,376.1 L266.6,378.2 L269.2,379.0 L271.7,376.8 L274.0,379.6 L276.3,378.4 L278.6,379.8 L280.9,377.8 L283.2,379.9 L285.5,384.1 L287.8,385.2 L290.1,386.1 L292.4,387.4 L294.7,392.2 L297.2,393.7 L299.8,394.2 L302.3,391.4 L305.2,383.9 L308.1,380.7 L310.9,384.5 L313.8,385.3 L316.4,389.6 L318.9,393.1 L321.5,399.8 L324.0,398.7 L326.6,401.2 L329.1,399.8 L331.7,398.6 L334.2,391.1 L336.8,390.2 L339.3,394.0 L341.9,394.3 L344.4,399.8 L347.0,400.9 L349.5,398.9 L352.1,399.8 L354.6,396.1 L357.2,390.8 L359.7,382.6 L362.6,381.3 L365.5,379.9 L367.7,388.2 L370.0,391.4 L373.1,391.4 L375.4,390.8 L377.7,392.2 L380.0,386.9 L382.2,386.6 L384.5,380.5 L386.8,378.3 L389.1,376.8 L391.4,376.8 L393.7,378.2 L396.0,376.2 L398.3,376.0 L400.6,378.8 L402.9,379.7 L405.2,375.8 L407.5,378.2 L409.8,376.8 L412.1,373.8 L414.6,370.8 L417.2,368.9 L419.8,366.8 L422.3,365.1 L424.9,362.5 L427.4,359.6 L429.8,359.5 L432.2,359.3 L434.6,360.5 L437.0,357.7 L439.4,356.9 L441.8,357.9 L444.1,354.9 L446.5,355.8 L449.1,354.6 L451.6,357.9 L454.2,355.3 L456.7,355.3 L459.3,352.3 L461.8,354.7 L464.7,356.7 L467.6,359.6 L471.4,349.3 L473.6,349.3 L475.9,346.0 L478.1,348.7 L480.3,348.5 L482.6,345.1 L484.8,347.0 L487.4,349.3 L489.9,350.1 L492.5,352.0 L495.0,356.7 L497.6,358.9 L500.1,363.5 L503.0,371.2 L505.9,376.8 L508.3,380.2 L510.6,378.6 L513.0,380.9 L515.4,385.3 L517.7,386.4 L520.0,388.1 L522.3,384.7 L524.6,386.0 L526.9,386.4 L529.5,390.1 L532.0,391.9 L534.6,396.0 L536.9,394.1 L539.2,392.7 L541.5,391.9 L543.7,391.9 L546.0,390.2 L548.3,388.9 L550.5,389.0 L552.7,390.7 L555.0,386.5 L557.2,389.0 L559.4,388.3 L561.7,388.0 L564.0,384.3 L566.3,382.3 L568.6,383.8 L570.9,380.7 L573.2,379.8 L575.4,380.1 L577.6,381.9 L579.8,383.7 L582.1,381.2 L584.3,383.7 L586.6,383.7 L588.9,384.7 L591.2,388.2 L593.5,387.1 L595.8,388.3 L598.2,391.1 L600.6,388.5 L603.0,390.4 L605.4,392.2 L608.2,396.8 L611.1,399.8 L613.7,403.1 L616.2,402.1 L618.8,403.6 L621.3,399.7 L623.9,396.6 L626.4,396.0 L629.0,394.2 L631.5,390.5 L634.1,390.2 L636.4,391.1 L638.7,390.5 L641.0,386.3 L643.2,386.0 L645.5,386.4 L647.8,388.2 L650.1,387.6 L652.4,388.7 L654.7,386.5 L657.0,387.6 L659.6,384.6 L662.1,384.4 L664.7,384.5 L667.0,386.4 L669.3,384.1 L671.6,384.9 L673.9,385.6 L676.2,386.4 L678.5,385.5 L680.8,384.9 L683.1,387.0 L685.3,382.5 L687.6,383.7 L690.2,379.5 L692.7,382.7 L695.3,378.8 L697.8,381.4 L700.4,382.6 L703.0,380.7 L705.3,380.3 L707.7,383.0 L710.1,382.9 L712.5,380.7" fill="none" stroke="#E24D42" stroke-width="2" stroke-linejoin="round"/>
<path d="M60.8,392.0 L71.8,487.4 L82.8,455.6 L93.7,487.4 L104.7,381.4 L115.7,466.2 L126.7,423.8 L137.7,402.6 L148.6,455.6 L159.6,423.8 L170.6,381.4 L181.6,498.0 L192.6,487.4 L203.5,508.6 L214.5,508.6 L225.5,476.8 L236.5,487.4 L247.5,423.8 L258.4,445.0 L269.4,434.4 L280.4,519.2 L291.4,445.0 L324.3,445.0 L335.3,519.2 L346.3,434.4 L357.3,445.0 L368.2,423.8 L379.2,487.4 L390.2,476.8 L401.2,508.6 L412.2,508.6 L423.1,487.4 L434.1,498.0 L445.1,381.4 L456.1,423.8 L467.1,455.6 L478.0,402.6 L489.0,423.8 L500.0,466.2 L511.0,381.4 L522.0,487.4 L532.9,455.6 L543.9,487.4 L554.9,392.0 L565.9,392.0 L576.9,455.6 L587.8,508.6 L598.8,434.4 L609.8,476.8 L620.8,423.8 L631.8,423.8 L642.7,466.2 L653.7,413.2 L664.7,423.8 L675.7,445.0 L686.7,476.8 L697.6,370.8" fill="none" stroke="#6ED0E0" stroke-width="2" stroke-linejoin="round"/>
<circle cx="60.8" cy="392.0" r="3.9" fill="#6ED0E0"/>
<circle cx="71.8" cy="487.4" r="3.9" fill="#6ED0E0"/>
<circle cx="82.8" cy="455.6" r="3.9" fill="#6ED0E0"/>
<circle cx="93.7" cy="487.4" r="3.9" fill="#6ED0E0"/>
<circle cx="104.7" cy="381.4" r="3.9" fill="#6ED0E0"/>
<circle cx="115.7" cy="466.2" r="3.9" fill="#6ED0E0"/>
<circle cx="126.7" cy="423.8" r="3.9" fill="#6ED0E0"/>
<circle cx="137.7" cy="402.6" r="3.9" fill="#6ED0E0"/>
<circle cx="148.6" cy="455.6" r="3.9" fill="#6ED0E0"/>
<circle cx="159.6" cy="423.8" r="3.9" fill="#6ED0E0"/>
<circle cx="170.6" cy="381.4" r="3.9" fill="#6ED0E0"/>
<circle cx="181.6" cy="498.0" r="3.9" fill="#6ED0E0"/>
<circle cx="192.6" cy="487.4" r="3.9" fill="#6ED0E0"/>
<circle cx="203.5" cy="508.6" r="3.9" fill="#6ED0E0"/>
<circle cx="214.5" cy="508.6" r="3.9" fill="#6ED0E0"/>
<circle cx="225.5" cy="476.8" r="3.9" fill="#6ED0E0"/>
<circle cx="236.5" cy="487.4" r="3.9" fill="#6ED0E0"/>
<circle cx="247.5" cy="423.8" r="3.9" fill="#6ED0E0"/>
<circle cx="258.4" cy="445.0" r="3.9" fill="#6ED0E0"/>
<circle cx="269.4" cy="434.4" r="3.9" fill="#6ED0E0"/>
<circle cx="280.4" cy="519.2" r="3.9" fill="#6ED0E0"/>
<circle cx="291.4" cy="445.0" r="3.9" fill="#6ED0E0"/>
<circle cx="324.3" cy="445.0" r="3.9" fill="#6ED0E0"/>
<circle cx="335.3" cy="519.2" r="3.9" fill="#6ED0E0"/>
<circle cx="346.3" cy="434.4" r="3.9" fill="#6ED0E0"/>
<circle cx="357.3" cy="445.0" r="3.9" fill="#6ED0E0"/>
<circle cx="368.2" cy="423.8" r="3.9" fill="#6ED0E0"/>
<circle cx="379.2" cy="487.4" r="3.9" fill="#6ED0E0"/>
<circle cx="390.2" cy="476.8" r="3.9" fill="#6ED0E0"/>
<circle cx="401.2" cy="508.6" r="3.9" fill="#6ED0E0"/>
<circle cx="412.2" cy="508.6" r="3.9" fill="#6ED0E0"/>
<circle cx="423.1" cy="487.4" r="3.9" fill="#6ED0E0"/>
<circle cx="434.1" cy="498.0" r="3.9" fill="#6ED0E0"/>
<circle cx="445.1" cy="381.4" r="3.9" fill="#6ED0E0"/>
<circle cx="456.1" cy="423.8" r="3.9" fill="#6ED0E0"/>
<circle cx="467.1" cy="455.6" r="3.9" fill="#6ED0E0"/>
<circle cx="478.0" cy="402.6" r="3.9" fill="#6ED0E0"/>
<circle cx="489.0" cy="423.8" r="3.9" fill="#6ED0E0"/>
<circle cx="500.0" cy="466.2" r="3.9" fill="#6ED0E0"/>
<circle cx="511.0" cy="381.4" r="3.9" fill="#6ED0E0"/>
<circle cx="522.0" cy="487.4" r="3.9" fill="#6ED0E0"/>
<circle cx="532.9" cy="455.6" r="3.9" fill="#6ED0E0"/>
<circle cx="543.9" cy="487.4" r="3.9" fill="#6ED0E0"/>
<circle cx="554.9" cy="392.0" r="3.9" fill="#6ED0E0"/>
<circle cx="565.9" cy="392.0" r="3.9" fill="#6ED0E0"/>
<circle cx="576.9" cy="455.6" r="3.9" fill="#6ED0E0"/>
<circle cx="587.8" cy="508.6" r="3.9" fill="#6ED0E0"/>
<circle cx="598.8" cy="434.4" r="3.9" fill="#6ED0E0"/>
<circle cx="609.8" cy="476.8" r="3.9" fill="#6ED0E0"/>
<circle cx="620.8" cy="423.8" r="3.9" fill="#6ED0E0"/>
<circle cx="631.8" cy="423.8" r="3.9" fill="#6ED0E0"/>
<circle cx="642.7" cy="466.2" r="3.9" fill="#6ED0E0"/>
<circle cx="653.7" cy="413.2" r="3.9" fill="#6ED0E0"/>
<circle cx="664.7" cy="423.8" r="3.9" fill="#6ED0E0"/>
<circle cx="675.7" cy="445.0" r="3.9" fill="#6ED0E0"/>
<circle cx="686.7" cy="476.8" r="3.9" fill="#6ED0E0"/>
<circle cx="697.6" cy="370.8" r="3.9" fill="#6ED0E0"/>
<rect x="813.0" y="417.6" width="5.7" height="64.0" fill="#E24D42"/>
<rect x="813.0" y="481.6" width="5.7" height="45.8" fill="#EF843C"/>
<rect x="813.0" y="527.4" width="5.7" height="26.2" fill="#EAB839"/>
<rect x="813.0" y="553.6" width="5.7" height="7.4" fill="#F3CF7C"/>
<rect x="813.0" y="481.1" width="5.7" height="1" fill="#000" fill-opacity="0.18"/>
<rect x="813.0" y="526.9" width="5.7" height="1" fill="#000" fill-opacity="0.18"/>
<rect x="813.0" y="553.1" width="5.7" height="1" fill="#000" fill-opacity="0.18"/>
<rect x="813.0" y="559.6" width="5.7" height="1.4" fill="#FCEACA" fill-opacity="0.5"/>
<rect x="821.3" y="421.2" width="5.7" height="61.6" fill="#E24D42"/>
<rect x="821.3" y="482.8" width="5.7" height="47.0" fill="#EF843C"/>
<rect x="821.3" y="529.8" width="5.7" height="23.8" fill="#EAB839"/>
<rect x="821.3" y="553.6" width="5.7" height="7.4" fill="#F3CF7C"/>
<rect x="821.3" y="482.3" width="5.7" height="1" fill="#000" fill-opacity="0.18"/>
<rect x="821.3" y="529.3" width="5.7" height="1" fill="#000" fill-opacity="0.18"/>
<rect x="821.3" y="553.1" width="5.7" height="1" fill="#000" fill-opacity="0.18"/>
<rect x="821.3" y="559.6" width="5.7" height="1.4" fill="#FCEACA" fill-opacity="0.5"/>
<rect x="829.7" y="406.9" width="5.7" height="68.5" fill="#E24D42"/>
<rect x="829.7" y="475.4" width="5.7" height="47.0" fill="#EF843C"/>
<rect x="829.7" y="522.4" width="5.7" height="27.7" fill="#EAB839"/>
<rect x="829.7" y="550.1" width="5.7" height="10.9" fill="#F3CF7C"/>
<rect x="829.7" y="474.9" width="5.7" height="1" fill="#000" fill-opacity="0.18"/>
<rect x="829.7" y="521.9" width="5.7" height="1" fill="#000" fill-opacity="0.18"/>
<rect x="829.7" y="549.6" width="5.7" height="1" fill="#000" fill-opacity="0.18"/>
<rect x="829.7" y="559.6" width="5.7" height="1.4" fill="#FCEACA" fill-opacity="0.5"/>
<rect x="838.0" y="406.9" width="5.7" height="66.4" fill="#E24D42"/>
<rect x="838.0" y="473.3" width="5.7" height="48.2" fill="#EF843C"/>
<rect x="838.0" y="521.5" width="5.7" height="30.7" fill="#EAB839"/>
<rect x="838.0" y="552.1" width="5.7" height="8.9" fill="#F3CF7C"/>
<rect x="838.0" y="472.8" width="5.7" height="1" fill="#000" fill-opacity="0.18"/>
<rect x="838.0" y="521.0" width="5.7" height="1" fill="#000" fill-opacity="0.18"/>
<rect x="838.0" y="551.6" width="5.7" height="1" fill="#000" fill-opacity="0.18"/>
<rect x="838.0" y="559.6" width="5.7" height="1.4" fill="#FCEACA" fill-opacity="0.5"/>
<rect x="846.3" y="339.9" width="5.7" height="112.5" fill="#E24D42"/>
<rect x="846.3" y="452.4" width="5.7" height="64.0" fill="#EF843C"/>
<rect x="846.3" y="516.4" width="5.7" height="32.1" fill="#EAB839"/>
<rect x="846.3" y="548.6" width="5.7" height="12.4" fill="#F3CF7C"/>
<rect x="846.3" y="451.9" width="5.7" height="1" fill="#000" fill-opacity="0.18"/>
<rect x="846.3" y="515.9" width="5.7" height="1" fill="#000" fill-opacity="0.18"/>
<rect x="846.3" y="548.1" width="5.7" height="1" fill="#000" fill-opacity="0.18"/>
<rect x="846.3" y="559.6" width="5.7" height="1.4" fill="#FCEACA" fill-opacity="0.5"/>
<rect x="854.6" y="410.5" width="5.7" height="67.9" fill="#E24D42"/>
<rect x="854.6" y="478.3" width="5.7" height="47.0" fill="#EF843C"/>
<rect x="854.6" y="525.4" width="5.7" height="25.6" fill="#EAB839"/>
<rect x="854.6" y="551.0" width="5.7" height="10.0" fill="#F3CF7C"/>
<rect x="854.6" y="477.8" width="5.7" height="1" fill="#000" fill-opacity="0.18"/>
<rect x="854.6" y="524.9" width="5.7" height="1" fill="#000" fill-opacity="0.18"/>
<rect x="854.6" y="550.5" width="5.7" height="1" fill="#000" fill-opacity="0.18"/>
<rect x="854.6" y="559.6" width="5.7" height="1.4" fill="#FCEACA" fill-opacity="0.5"/>
<rect x="863.0" y="347.7" width="5.7" height="97.9" fill="#E24D42"/>
<rect x="863.0" y="445.6" width="5.7" height="67.9" fill="#EF843C"/>
<rect x="863.0" y="513.5" width="5.7" height="35.1" fill="#EAB839"/>
<rect x="863.0" y="548.6" width="5.7" height="12.4" fill="#F3CF7C"/>
<rect x="863.0" y="445.1" width="5.7" height="1" fill="#000" fill-opacity="0.18"/>
<rect x="863.0" y="513.0" width="5.7" height="1" fill="#000" fill-opacity="0.18"/>
<rect x="863.0" y="548.1" width="5.7" height="1" fill="#000" fill-opacity="0.18"/>
<rect x="863.0" y="559.6" width="5.7" height="1.4" fill="#FCEACA" fill-opacity="0.5"/>
<rect x="871.3" y="403.3" width="5.7" height="65.5" fill="#E24D42"/>
<rect x="871.3" y="468.8" width="5.7" height="52.1" fill="#EF843C"/>
<rect x="871.3" y="520.9" width="5.7" height="28.3" fill="#EAB839"/>
<rect x="871.3" y="549.2" width="5.7" height="11.8" fill="#F3CF7C"/>
<rect x="871.3" y="468.3" width="5.7" height="1" fill="#000" fill-opacity="0.18"/>
<rect x="871.3" y="520.4" width="5.7" height="1" fill="#000" fill-opacity="0.18"/>
<rect x="871.3" y="548.7" width="5.7" height="1" fill="#000" fill-opacity="0.18"/>
<rect x="871.3" y="559.6" width="5.7" height="1.4" fill="#FCEACA" fill-opacity="0.5"/>
<rect x="879.6" y="415.2" width="5.7" height="62.5" fill="#E24D42"/>
<rect x="879.6" y="477.7" width="5.7" height="45.5" fill="#EF843C"/>
<rect x="879.6" y="523.3" width="5.7" height="27.4" fill="#EAB839"/>
<rect x="879.6" y="550.7" width="5.7" height="10.3" fill="#F3CF7C"/>
<rect x="879.6" y="477.2" width="5.7" height="1" fill="#000" fill-opacity="0.18"/>
<rect x="879.6" y="522.8" width="5.7" height="1" fill="#000" fill-opacity="0.18"/>
<rect x="879.6" y="550.2" width="5.7" height="1" fill="#000" fill-opacity="0.18"/>
<rect x="879.6" y="559.6" width="5.7" height="1.4" fill="#FCEACA" fill-opacity="0.5"/>
<rect x="888.0" y="414.6" width="5.7" height="72.9" fill="#E24D42"/>
<rect x="888.0" y="487.6" width="5.7" height="44.6" fill="#EF843C"/>
<rect x="888.0" y="532.2" width="5.7" height="22.3" fill="#EAB839"/>
<rect x="888.0" y="554.5" width="5.7" height="6.5" fill="#F3CF7C"/>
<rect x="888.0" y="487.1" width="5.7" height="1" fill="#000" fill-opacity="0.18"/>
<rect x="888.0" y="531.7" width="5.7" height="1" fill="#000" fill-opacity="0.18"/>
<rect x="888.0" y="554.0" width="5.7" height="1" fill="#000" fill-opacity="0.18"/>
<rect x="888.0" y="559.6" width="5.7" height="1.4" fill="#FCEACA" fill-opacity="0.5"/>
<rect x="896.3" y="405.7" width="5.7" height="79.5" fill="#E24D42"/>
<rect x="896.3" y="485.2" width="5.7" height="44.6" fill="#EF843C"/>
<rect x="896.3" y="529.8" width="5.7" height="24.7" fill="#EAB839"/>
<rect x="896.3" y="554.5" width="5.7" height="6.5" fill="#F3CF7C"/>
<rect x="896.3" y="484.7" width="5.7" height="1" fill="#000" fill-opacity="0.18"/>
<rect x="896.3" y="529.3" width="5.7" height="1" fill="#000" fill-opacity="0.18"/>
<rect x="896.3" y="554.0" width="5.7" height="1" fill="#000" fill-opacity="0.18"/>
<rect x="896.3" y="559.6" width="5.7" height="1.4" fill="#FCEACA" fill-opacity="0.5"/>
<rect x="904.6" y="438.5" width="5.7" height="51.2" fill="#E24D42"/>
<rect x="904.6" y="489.6" width="5.7" height="40.8" fill="#EF843C"/>
<rect x="904.6" y="530.4" width="5.7" height="23.8" fill="#EAB839"/>
<rect x="904.6" y="554.2" width="5.7" height="6.8" fill="#F3CF7C"/>
<rect x="904.6" y="489.1" width="5.7" height="1" fill="#000" fill-opacity="0.18"/>
<rect x="904.6" y="529.9" width="5.7" height="1" fill="#000" fill-opacity="0.18"/>
<rect x="904.6" y="553.7" width="5.7" height="1" fill="#000" fill-opacity="0.18"/>
<rect x="904.6" y="559.6" width="5.7" height="1.4" fill="#FCEACA" fill-opacity="0.5"/>
<rect x="912.9" y="417.6" width="5.7" height="64.6" fill="#E24D42"/>
<rect x="912.9" y="482.2" width="5.7" height="49.1" fill="#EF843C"/>
<rect x="912.9" y="531.3" width="5.7" height="24.7" fill="#EAB839"/>
<rect x="912.9" y="556.0" width="5.7" height="5.0" fill="#F3CF7C"/>
<rect x="912.9" y="481.7" width="5.7" height="1" fill="#000" fill-opacity="0.18"/>
<rect x="912.9" y="530.8" width="5.7" height="1" fill="#000" fill-opacity="0.18"/>
<rect x="912.9" y="555.5" width="5.7" height="1" fill="#000" fill-opacity="0.18"/>
<rect x="912.9" y="559.6" width="5.7" height="1.4" fill="#FCEACA" fill-opacity="0.5"/>
<rect x="921.3" y="411.1" width="5.7" height="64.6" fill="#E24D42"/>
<rect x="921.3" y="475.7" width="5.7" height="51.8" fill="#EF843C"/>
<rect x="921.3" y="527.4" width="5.7" height="24.7" fill="#EAB839"/>
<rect x="921.3" y="552.1" width="5.7" height="8.9" fill="#F3CF7C"/>
<rect x="921.3" y="475.2" width="5.7" height="1" fill="#000" fill-opacity="0.18"/>
<rect x="921.3" y="526.9" width="5.7" height="1" fill="#000" fill-opacity="0.18"/>
<rect x="921.3" y="551.6" width="5.7" height="1" fill="#000" fill-opacity="0.18"/>
<rect x="921.3" y="559.6" width="5.7" height="1.4" fill="#FCEACA" fill-opacity="0.5"/>
<rect x="929.6" y="414.6" width="5.7" height="68.5" fill="#E24D42"/>
<rect x="929.6" y="483.1" width="5.7" height="46.1" fill="#EF843C"/>
<rect x="929.6" y="529.2" width="5.7" height="25.0" fill="#EAB839"/>
<rect x="929.6" y="554.2" width="5.7" height="6.8" fill="#F3CF7C"/>
<rect x="929.6" y="482.6" width="5.7" height="1" fill="#000" fill-opacity="0.18"/>
<rect x="929.6" y="528.7" width="5.7" height="1" fill="#000" fill-opacity="0.18"/>
<rect x="929.6" y="553.7" width="5.7" height="1" fill="#000" fill-opacity="0.18"/>
<rect x="929.6" y="559.6" width="5.7" height="1.4" fill="#FCEACA" fill-opacity="0.5"/>
<rect x="937.9" y="389.0" width="5.7" height="75.9" fill="#E24D42"/>
<rect x="937.9" y="464.9" width="5.7" height="52.4" fill="#EF843C"/>
<rect x="937.9" y="517.3" width="5.7" height="31.2" fill="#EAB839"/>
<rect x="937.9" y="548.6" width="5.7" height="12.4" fill="#F3CF7C"/>
<rect x="937.9" y="464.4" width="5.7" height="1" fill="#000" fill-opacity="0.18"/>
<rect x="937.9" y="516.8" width="5.7" height="1" fill="#000" fill-opacity="0.18"/>
<rect x="937.9" y="548.1" width="5.7" height="1" fill="#000" fill-opacity="0.18"/>
<rect x="937.9" y="559.6" width="5.7" height="1.4" fill="#FCEACA" fill-opacity="0.5"/>
<rect x="946.2" y="390.8" width="5.7" height="75.0" fill="#E24D42"/>
<rect x="946.2" y="465.8" width="5.7" height="57.4" fill="#EF843C"/>
<rect x="946.2" y="523.3" width="5.7" height="28.3" fill="#EAB839"/>
<rect x="946.2" y="551.5" width="5.7" height="9.5" fill="#F3CF7C"/>
<rect x="946.2" y="465.3" width="5.7" height="1" fill="#000" fill-opacity="0.18"/>
<rect x="946.2" y="522.8" width="5.7" height="1" fill="#000" fill-opacity="0.18"/>
<rect x="946.2" y="551.0" width="5.7" height="1" fill="#000" fill-opacity="0.18"/>
<rect x="946.2" y="559.6" width="5.7" height="1.4" fill="#FCEACA" fill-opacity="0.5"/>
<rect x="954.6" y="409.3" width="5.7" height="69.3" fill="#E24D42"/>
<rect x="954.6" y="478.6" width="5.7" height="48.2" fill="#EF843C"/>
<rect x="954.6" y="526.8" width="5.7" height="28.3" fill="#EAB839"/>
<rect x="954.6" y="555.1" width="5.7" height="5.9" fill="#F3CF7C"/>
<rect x="954.6" y="478.1" width="5.7" height="1" fill="#000" fill-opacity="0.18"/>
<rect x="954.6" y="526.3" width="5.7" height="1" fill="#000" fill-opacity="0.18"/>
<rect x="954.6" y="554.6" width="5.7" height="1" fill="#000" fill-opacity="0.18"/>
<rect x="954.6" y="559.6" width="5.7" height="1.4" fill="#FCEACA" fill-opacity="0.5"/>
<rect x="962.9" y="390.2" width="5.7" height="68.8" fill="#E24D42"/>
<rect x="962.9" y="459.0" width="5.7" height="57.4" fill="#EF843C"/>
<rect x="962.9" y="516.4" width="5.7" height="31.2" fill="#EAB839"/>
<rect x="962.9" y="547.7" width="5.7" height="13.3" fill="#F3CF7C"/>
<rect x="962.9" y="458.5" width="5.7" height="1" fill="#000" fill-opacity="0.18"/>
<rect x="962.9" y="515.9" width="5.7" height="1" fill="#000" fill-opacity="0.18"/>
<rect x="962.9" y="547.2" width="5.7" height="1" fill="#000" fill-opacity="0.18"/>
<rect x="962.9" y="559.6" width="5.7" height="1.4" fill="#FCEACA" fill-opacity="0.5"/>
<rect x="971.2" y="424.8" width="5.7" height="60.4" fill="#E24D42"/>
<rect x="971.2" y="485.2" width="5.7" height="45.2" fill="#EF843C"/>
<rect x="971.2" y="530.4" width="5.7" height="23.8" fill="#EAB839"/>
<rect x="971.2" y="554.2" width="5.7" height="6.8" fill="#F3CF7C"/>
<rect x="971.2" y="484.7" width="5.7" height="1" fill="#000" fill-opacity="0.18"/>
<rect x="971.2" y="529.9" width="5.7" height="1" fill="#000" fill-opacity="0.18"/>
<rect x="971.2" y="553.7" width="5.7" height="1" fill="#000" fill-opacity="0.18"/>
<rect x="971.2" y="559.6" width="5.7" height="1.4" fill="#FCEACA" fill-opacity="0.5"/>
<rect x="979.6" y="428.6" width="5.7" height="60.1" fill="#E24D42"/>
<rect x="979.6" y="488.8" width="5.7" height="42.0" fill="#EF843C"/>
<rect x="979.6" y="530.7" width="5.7" height="23.8" fill="#EAB839"/>
<rect x="979.6" y="554.5" width="5.7" height="6.5" fill="#F3CF7C"/>
<rect x="979.6" y="488.2" width="5.7" height="1" fill="#000" fill-opacity="0.18"/>
<rect x="979.6" y="530.2" width="5.7" height="1" fill="#000" fill-opacity="0.18"/>
<rect x="979.6" y="554.0" width="5.7" height="1" fill="#000" fill-opacity="0.18"/>
<rect x="979.6" y="559.6" width="5.7" height="1.4" fill="#FCEACA" fill-opacity="0.5"/>
<rect x="987.9" y="398.3" width="5.7" height="70.5" fill="#E24D42"/>
<rect x="987.9" y="468.8" width="5.7" height="52.1" fill="#EF843C"/>
<rect x="987.9" y="520.9" width="5.7" height="29.8" fill="#EAB839"/>
<rect x="987.9" y="550.7" width="5.7" height="10.3" fill="#F3CF7C"/>
<rect x="987.9" y="468.3" width="5.7" height="1" fill="#000" fill-opacity="0.18"/>
<rect x="987.9" y="520.4" width="5.7" height="1" fill="#000" fill-opacity="0.18"/>
<rect x="987.9" y="550.2" width="5.7" height="1" fill="#000" fill-opacity="0.18"/>
<rect x="987.9" y="559.6" width="5.7" height="1.4" fill="#FCEACA" fill-opacity="0.5"/>
<rect x="996.2" y="410.2" width="5.7" height="60.4" fill="#E24D42"/>
<rect x="996.2" y="470.6" width="5.7" height="51.2" fill="#EF843C"/>
<rect x="996.2" y="521.8" width="5.7" height="31.2" fill="#EAB839"/>
<rect x="996.2" y="553.0" width="5.7" height="8.0" fill="#F3CF7C"/>
<rect x="996.2" y="470.1" width="5.7" height="1" fill="#000" fill-opacity="0.18"/>
<rect x="996.2" y="521.3" width="5.7" height="1" fill="#000" fill-opacity="0.18"/>
<rect x="996.2" y="552.5" width="5.7" height="1" fill="#000" fill-opacity="0.18"/>
<rect x="996.2" y="559.6" width="5.7" height="1.4" fill="#FCEACA" fill-opacity="0.5"/>
<rect x="1004.5" y="385.5" width="5.7" height="81.2" fill="#E24D42"/>
<rect x="1004.5" y="466.7" width="5.7" height="56.2" fill="#EF843C"/>
<rect x="1004.5" y="523.0" width="5.7" height="26.8" fill="#EAB839"/>
<rect x="1004.5" y="549.8" width="5.7" height="11.2" fill="#F3CF7C"/>
<rect x="1004.5" y="466.2" width="5.7" height="1" fill="#000" fill-opacity="0.18"/>
<rect x="1004.5" y="522.5" width="5.7" height="1" fill="#000" fill-opacity="0.18"/>
<rect x="1004.5" y="549.3" width="5.7" height="1" fill="#000" fill-opacity="0.18"/>
<rect x="1004.5" y="559.6" width="5.7" height="1.4" fill="#FCEACA" fill-opacity="0.5"/>
<rect x="1012.9" y="401.8" width="5.7" height="75.9" fill="#E24D42"/>
<rect x="1012.9" y="477.7" width="5.7" height="50.0" fill="#EF843C"/>
<rect x="1012.9" y="527.7" width="5.7" height="25.9" fill="#EAB839"/>
<rect x="1012.9" y="553.6" width="5.7" height="7.4" fill="#F3CF7C"/>
<rect x="1012.9" y="477.2" width="5.7" height="1" fill="#000" fill-opacity="0.18"/>
<rect x="1012.9" y="527.2" width="5.7" height="1" fill="#000" fill-opacity="0.18"/>
<rect x="1012.9" y="553.1" width="5.7" height="1" fill="#000" fill-opacity="0.18"/>
<rect x="1012.9" y="559.6" width="5.7" height="1.4" fill="#FCEACA" fill-opacity="0.5"/>
<rect x="1021.2" y="430.1" width="5.7" height="57.4" fill="#E24D42"/>
<rect x="1021.2" y="487.6" width="5.7" height="43.2" fill="#EF843C"/>
<rect x="1021.2" y="530.7" width="5.7" height="22.9" fill="#EAB839"/>
<rect x="1021.2" y="553.6" width="5.7" height="7.4" fill="#F3CF7C"/>
<rect x="1021.2" y="487.1" width="5.7" height="1" fill="#000" fill-opacity="0.18"/>
<rect x="1021.2" y="530.2" width="5.7" height="1" fill="#000" fill-opacity="0.18"/>
<rect x="1021.2" y="553.1" width="5.7" height="1" fill="#000" fill-opacity="0.18"/>
<rect x="1021.2" y="559.6" width="5.7" height="1.4" fill="#FCEACA" fill-opacity="0.5"/>
<rect x="1029.5" y="432.5" width="5.7" height="61.0" fill="#E24D42"/>
<rect x="1029.5" y="493.5" width="5.7" height="43.8" fill="#EF843C"/>
<rect x="1029.5" y="537.3" width="5.7" height="19.3" fill="#EAB839"/>
<rect x="1029.5" y="556.6" width="5.7" height="4.4" fill="#F3CF7C"/>
<rect x="1029.5" y="493.0" width="5.7" height="1" fill="#000" fill-opacity="0.18"/>
<rect x="1029.5" y="536.8" width="5.7" height="1" fill="#000" fill-opacity="0.18"/>
<rect x="1029.5" y="556.1" width="5.7" height="1" fill="#000" fill-opacity="0.18"/>
<rect x="1029.5" y="559.6" width="5.7" height="1.4" fill="#FCEACA" fill-opacity="0.5"/>
<rect x="1037.9" y="428.0" width="5.7" height="54.2" fill="#E24D42"/>
<rect x="1037.9" y="482.2" width="5.7" height="43.2" fill="#EF843C"/>
<rect x="1037.9" y="525.4" width="5.7" height="27.4" fill="#EAB839"/>
<rect x="1037.9" y="552.7" width="5.7" height="8.3" fill="#F3CF7C"/>
<rect x="1037.9" y="481.7" width="5.7" height="1" fill="#000" fill-opacity="0.18"/>
<rect x="1037.9" y="524.9" width="5.7" height="1" fill="#000" fill-opacity="0.18"/>
<rect x="1037.9" y="552.2" width="5.7" height="1" fill="#000" fill-opacity="0.18"/>
<rect x="1037.9" y="559.6" width="5.7" height="1.4" fill="#FCEACA" fill-opacity="0.5"/>
<rect x="1046.2" y="401.0" width="5.7" height="84.8" fill="#E24D42"/>
<rect x="1046.2" y="485.8" width="5.7" height="46.1" fill="#EF843C"/>
<rect x="1046.2" y="531.9" width="5.7" height="22.6" fill="#EAB839"/>
<rect x="1046.2" y="554.5" width="5.7" height="6.5" fill="#F3CF7C"/>
<rect x="1046.2" y="485.3" width="5.7" height="1" fill="#000" fill-opacity="0.18"/>
<rect x="1046.2" y="531.4" width="5.7" height="1" fill="#000" fill-opacity="0.18"/>
<rect x="1046.2" y="554.0" width="5.7" height="1" fill="#000" fill-opacity="0.18"/>
<rect x="1046.2" y="559.6" width="5.7" height="1.4" fill="#FCEACA" fill-opacity="0.5"/>
<rect x="1054.5" y="379.5" width="5.7" height="94.3" fill="#E24D42"/>
<rect x="1054.5" y="473.9" width="5.7" height="55.1" fill="#EF843C"/>
<rect x="1054.5" y="528.9" width="5.7" height="27.7" fill="#EAB839"/>
<rect x="1054.5" y="556.6" width="5.7" height="4.4" fill="#F3CF7C"/>
<rect x="1054.5" y="473.4" width="5.7" height="1" fill="#000" fill-opacity="0.18"/>
<rect x="1054.5" y="528.4" width="5.7" height="1" fill="#000" fill-opacity="0.18"/>
<rect x="1054.5" y="556.1" width="5.7" height="1" fill="#000" fill-opacity="0.18"/>
<rect x="1054.5" y="559.6" width="5.7" height="1.4" fill="#FCEACA" fill-opacity="0.5"/>
<rect x="1062.8" y="423.6" width="5.7" height="66.1" fill="#E24D42"/>
<rect x="1062.8" y="489.6" width="5.7" height="42.6" fill="#EF843C"/>
<rect x="1062.8" y="532.2" width="5.7" height="22.9" fill="#EAB839"/>
<rect x="1062.8" y="555.1" width="5.7" height="5.9" fill="#F3CF7C"/>
<rect x="1062.8" y="489.1" width="5.7" height="1" fill="#000" fill-opacity="0.18"/>
<rect x="1062.8" y="531.7" width="5.7" height="1" fill="#000" fill-opacity="0.18"/>
<rect x="1062.8" y="554.6" width="5.7" height="1" fill="#000" fill-opacity="0.18"/>
<rect x="1062.8" y="559.6" width="5.7" height="1.4" fill="#FCEACA" fill-opacity="0.5"/>
<rect x="1071.2" y="390.8" width="5.7" height="79.5" fill="#E24D42"/>
<rect x="1071.2" y="470.3" width="5.7" height="53.6" fill="#EF843C"/>
<rect x="1071.2" y="523.9" width="5.7" height="28.3" fill="#EAB839"/>
<rect x="1071.2" y="552.1" width="5.7" height="8.9" fill="#F3CF7C"/>
<rect x="1071.2" y="469.8" width="5.7" height="1" fill="#000" fill-opacity="0.18"/>
<rect x="1071.2" y="523.4" width="5.7" height="1" fill="#000" fill-opacity="0.18"/>
<rect x="1071.2" y="551.6" width="5.7" height="1" fill="#000" fill-opacity="0.18"/>
<rect x="1071.2" y="559.6" width="5.7" height="1.4" fill="#FCEACA" fill-opacity="0.5"/>
<rect x="1079.5" y="420.6" width="5.7" height="61.0" fill="#E24D42"/>
<rect x="1079.5" y="481.6" width="5.7" height="47.6" fill="#EF843C"/>
<rect x="1079.5" y="529.2" width="5.7" height="25.9" fill="#EAB839"/>
<rect x="1079.5" y="555.1" width="5.7" height="5.9" fill="#F3CF7C"/>
<rect x="1079.5" y="481.1" width="5.7" height="1" fill="#000" fill-opacity="0.18"/>
<rect x="1079.5" y="528.7" width="5.7" height="1" fill="#000" fill-opacity="0.18"/>
<rect x="1079.5" y="554.6" width="5.7" height="1" fill="#000" fill-opacity="0.18"/>
<rect x="1079.5" y="559.6" width="5.7" height="1.4" fill="#FCEACA" fill-opacity="0.5"/>
<rect x="1087.8" y="407.8" width="5.7" height="68.5" fill="#E24D42"/>
<rect x="1087.8" y="476.2" width="5.7" height="47.6" fill="#EF843C"/>
<rect x="1087.8" y="523.9" width="5.7" height="28.3" fill="#EAB839"/>
<rect x="1087.8" y="552.1" width="5.7" height="8.9" fill="#F3CF7C"/>
<rect x="1087.8" y="475.8" width="5.7" height="1" fill="#000" fill-opacity="0.18"/>
<rect x="1087.8" y="523.4" width="5.7" height="1" fill="#000" fill-opacity="0.18"/>
<rect x="1087.8" y="551.6" width="5.7" height="1" fill="#000" fill-opacity="0.18"/>
<rect x="1087.8" y="559.6" width="5.7" height="1.4" fill="#FCEACA" fill-opacity="0.5"/>
<rect x="1096.2" y="398.3" width="5.7" height="75.0" fill="#E24D42"/>
<rect x="1096.2" y="473.3" width="5.7" height="50.0" fill="#EF843C"/>
<rect x="1096.2" y="523.3" width="5.7" height="28.3" fill="#EAB839"/>
<rect x="1096.2" y="551.5" width="5.7" height="9.5" fill="#F3CF7C"/>
<rect x="1096.2" y="472.8" width="5.7" height="1" fill="#000" fill-opacity="0.18"/>
<rect x="1096.2" y="522.8" width="5.7" height="1" fill="#000" fill-opacity="0.18"/>
<rect x="1096.2" y="551.0" width="5.7" height="1" fill="#000" fill-opacity="0.18"/>
<rect x="1096.2" y="559.6" width="5.7" height="1.4" fill="#FCEACA" fill-opacity="0.5"/>
<rect x="1104.5" y="433.7" width="5.7" height="51.5" fill="#E24D42"/>
<rect x="1104.5" y="485.2" width="5.7" height="44.0" fill="#EF843C"/>
<rect x="1104.5" y="529.2" width="5.7" height="23.8" fill="#EAB839"/>
<rect x="1104.5" y="553.0" width="5.7" height="8.0" fill="#F3CF7C"/>
<rect x="1104.5" y="484.7" width="5.7" height="1" fill="#000" fill-opacity="0.18"/>
<rect x="1104.5" y="528.7" width="5.7" height="1" fill="#000" fill-opacity="0.18"/>
<rect x="1104.5" y="552.5" width="5.7" height="1" fill="#000" fill-opacity="0.18"/>
<rect x="1104.5" y="559.6" width="5.7" height="1.4" fill="#FCEACA" fill-opacity="0.5"/>
<rect x="1112.8" y="401.2" width="5.7" height="65.2" fill="#E24D42"/>
<rect x="1112.8" y="466.4" width="5.7" height="55.1" fill="#EF843C"/>
<rect x="1112.8" y="521.5" width="5.7" height="28.6" fill="#EAB839"/>
<rect x="1112.8" y="550.1" width="5.7" height="10.9" fill="#F3CF7C"/>
<rect x="1112.8" y="465.9" width="5.7" height="1" fill="#000" fill-opacity="0.18"/>
<rect x="1112.8" y="521.0" width="5.7" height="1" fill="#000" fill-opacity="0.18"/>
<rect x="1112.8" y="549.6" width="5.7" height="1" fill="#000" fill-opacity="0.18"/>
<rect x="1112.8" y="559.6" width="5.7" height="1.4" fill="#FCEACA" fill-opacity="0.5"/>
<rect x="1121.1" y="415.2" width="5.7" height="58.9" fill="#E24D42"/>
<rect x="1121.1" y="474.2" width="5.7" height="49.7" fill="#EF843C"/>
<rect x="1121.1" y="523.9" width="5.7" height="29.2" fill="#EAB839"/>
<rect x="1121.1" y="553.0" width="5.7" height="8.0" fill="#F3CF7C"/>
<rect x="1121.1" y="473.7" width="5.7" height="1" fill="#000" fill-opacity="0.18"/>
<rect x="1121.1" y="523.4" width="5.7" height="1" fill="#000" fill-opacity="0.18"/>
<rect x="1121.1" y="552.5" width="5.7" height="1" fill="#000" fill-opacity="0.18"/>
<rect x="1121.1" y="559.6" width="5.7" height="1.4" fill="#FCEACA" fill-opacity="0.5"/>
<rect x="1129.5" y="381.6" width="5.7" height="76.8" fill="#E24D42"/>
<rect x="1129.5" y="458.4" width="5.7" height="58.9" fill="#EF843C"/>
<rect x="1129.5" y="517.3" width="5.7" height="31.8" fill="#EAB839"/>
<rect x="1129.5" y="549.2" width="5.7" height="11.8" fill="#F3CF7C"/>
<rect x="1129.5" y="457.9" width="5.7" height="1" fill="#000" fill-opacity="0.18"/>
<rect x="1129.5" y="516.8" width="5.7" height="1" fill="#000" fill-opacity="0.18"/>
<rect x="1129.5" y="548.7" width="5.7" height="1" fill="#000" fill-opacity="0.18"/>
<rect x="1129.5" y="559.6" width="5.7" height="1.4" fill="#FCEACA" fill-opacity="0.5"/>
<rect x="1137.8" y="425.7" width="5.7" height="59.5" fill="#E24D42"/>
<rect x="1137.8" y="485.2" width="5.7" height="44.0" fill="#EF843C"/>
<rect x="1137.8" y="529.2" width="5.7" height="25.9" fill="#EAB839"/>
<rect x="1137.8" y="555.1" width="5.7" height="5.9" fill="#F3CF7C"/>
<rect x="1137.8" y="484.7" width="5.7" height="1" fill="#000" fill-opacity="0.18"/>
<rect x="1137.8" y="528.7" width="5.7" height="1" fill="#000" fill-opacity="0.18"/>
<rect x="1137.8" y="554.6" width="5.7" height="1" fill="#000" fill-opacity="0.18"/>
<rect x="1137.8" y="559.6" width="5.7" height="1.4" fill="#FCEACA" fill-opacity="0.5"/>
<rect x="1146.1" y="413.8" width="5.7" height="62.5" fill="#E24D42"/>
<rect x="1146.1" y="476.2" width="5.7" height="46.1" fill="#EF843C"/>
<rect x="1146.1" y="522.4" width="5.7" height="31.2" fill="#EAB839"/>
<rect x="1146.1" y="553.6" width="5.7" height="7.4" fill="#F3CF7C"/>
<rect x="1146.1" y="475.8" width="5.7" height="1" fill="#000" fill-opacity="0.18"/>
<rect x="1146.1" y="521.9" width="5.7" height="1" fill="#000" fill-opacity="0.18"/>
<rect x="1146.1" y="553.1" width="5.7" height="1" fill="#000" fill-opacity="0.18"/>
<rect x="1146.1" y="559.6" width="5.7" height="1.4" fill="#FCEACA" fill-opacity="0.5"/>
<rect x="1154.4" y="411.7" width="5.7" height="70.5" fill="#E24D42"/>
<rect x="1154.4" y="482.2" width="5.7" height="47.6" fill="#EF843C"/>
<rect x="1154.4" y="529.8" width="5.7" height="25.3" fill="#EAB839"/>
<rect x="1154.4" y="555.1" width="5.7" height="5.9" fill="#F3CF7C"/>
<rect x="1154.4" y="481.7" width="5.7" height="1" fill="#000" fill-opacity="0.18"/>
<rect x="1154.4" y="529.3" width="5.7" height="1" fill="#000" fill-opacity="0.18"/>
<rect x="1154.4" y="554.6" width="5.7" height="1" fill="#000" fill-opacity="0.18"/>
<rect x="1154.4" y="559.6" width="5.7" height="1.4" fill="#FCEACA" fill-opacity="0.5"/>
<rect x="1162.8" y="404.8" width="5.7" height="65.5" fill="#E24D42"/>
<rect x="1162.8" y="470.3" width="5.7" height="53.6" fill="#EF843C"/>
<rect x="1162.8" y="523.9" width="5.7" height="29.8" fill="#EAB839"/>
<rect x="1162.8" y="553.6" width="5.7" height="7.4" fill="#F3CF7C"/>
<rect x="1162.8" y="469.8" width="5.7" height="1" fill="#000" fill-opacity="0.18"/>
<rect x="1162.8" y="523.4" width="5.7" height="1" fill="#000" fill-opacity="0.18"/>
<rect x="1162.8" y="553.1" width="5.7" height="1" fill="#000" fill-opacity="0.18"/>
<rect x="1162.8" y="559.6" width="5.7" height="1.4" fill="#FCEACA" fill-opacity="0.5"/>
<rect x="1171.1" y="439.0" width="5.7" height="55.1" fill="#E24D42"/>
<rect x="1171.1" y="494.1" width="5.7" height="39.6" fill="#EF843C"/>
<rect x="1171.1" y="533.7" width="5.7" height="20.8" fill="#EAB839"/>
<rect x="1171.1" y="554.5" width="5.7" height="6.5" fill="#F3CF7C"/>
<rect x="1171.1" y="493.6" width="5.7" height="1" fill="#000" fill-opacity="0.18"/>
<rect x="1171.1" y="533.2" width="5.7" height="1" fill="#000" fill-opacity="0.18"/>
<rect x="1171.1" y="554.0" width="5.7" height="1" fill="#000" fill-opacity="0.18"/>
<rect x="1171.1" y="559.6" width="5.7" height="1.4" fill="#FCEACA" fill-opacity="0.5"/>
<rect x="1179.4" y="416.7" width="5.7" height="67.0" fill="#E24D42"/>
<rect x="1179.4" y="483.7" width="5.7" height="49.1" fill="#EF843C"/>
<rect x="1179.4" y="532.8" width="5.7" height="23.8" fill="#EAB839"/>
<rect x="1179.4" y="556.6" width="5.7" height="4.4" fill="#F3CF7C"/>
<rect x="1179.4" y="483.2" width="5.7" height="1" fill="#000" fill-opacity="0.18"/>
<rect x="1179.4" y="532.3" width="5.7" height="1" fill="#000" fill-opacity="0.18"/>
<rect x="1179.4" y="556.1" width="5.7" height="1" fill="#000" fill-opacity="0.18"/>
<rect x="1179.4" y="559.6" width="5.7" height="1.4" fill="#FCEACA" fill-opacity="0.5"/>
<rect x="1187.8" y="448.0" width="5.7" height="52.1" fill="#E24D42"/>
<rect x="1187.8" y="500.1" width="5.7" height="39.3" fill="#EF843C"/>
<rect x="1187.8" y="539.3" width="5.7" height="17.3" fill="#EAB839"/>
<rect x="1187.8" y="556.6" width="5.7" height="4.4" fill="#F3CF7C"/>
<rect x="1187.8" y="499.6" width="5.7" height="1" fill="#000" fill-opacity="0.18"/>
<rect x="1187.8" y="538.8" width="5.7" height="1" fill="#000" fill-opacity="0.18"/>
<rect x="1187.8" y="556.1" width="5.7" height="1" fill="#000" fill-opacity="0.18"/>
<rect x="1187.8" y="559.6" width="5.7" height="1.4" fill="#FCEACA" fill-opacity="0.5"/>
<rect x="1196.1" y="386.4" width="5.7" height="82.4" fill="#E24D42"/>
<rect x="1196.1" y="468.8" width="5.7" height="55.7" fill="#EF843C"/>
<rect x="1196.1" y="524.5" width="5.7" height="29.2" fill="#EAB839"/>
<rect x="1196.1" y="553.6" width="5.7" height="7.4" fill="#F3CF7C"/>
<rect x="1196.1" y="468.3" width="5.7" height="1" fill="#000" fill-opacity="0.18"/>
<rect x="1196.1" y="524.0" width="5.7" height="1" fill="#000" fill-opacity="0.18"/>
<rect x="1196.1" y="553.1" width="5.7" height="1" fill="#000" fill-opacity="0.18"/>
<rect x="1196.1" y="559.6" width="5.7" height="1.4" fill="#FCEACA" fill-opacity="0.5"/>
<rect x="1204.4" y="401.8" width="5.7" height="67.9" fill="#E24D42"/>
<rect x="1204.4" y="469.7" width="5.7" height="50.6" fill="#EF843C"/>
<rect x="1204.4" y="520.3" width="5.7" height="28.9" fill="#EAB839"/>
<rect x="1204.4" y="549.2" width="5.7" height="11.8" fill="#F3CF7C"/>
<rect x="1204.4" y="469.2" width="5.7" height="1" fill="#000" fill-opacity="0.18"/>
<rect x="1204.4" y="519.8" width="5.7" height="1" fill="#000" fill-opacity="0.18"/>
<rect x="1204.4" y="548.7" width="5.7" height="1" fill="#000" fill-opacity="0.18"/>
<rect x="1204.4" y="559.6" width="5.7" height="1.4" fill="#FCEACA" fill-opacity="0.5"/>
<rect x="1212.7" y="399.8" width="5.7" height="72.0" fill="#E24D42"/>
<rect x="1212.7" y="471.8" width="5.7" height="51.2" fill="#EF843C"/>
<rect x="1212.7" y="523.0" width="5.7" height="29.2" fill="#EAB839"/>
<rect x="1212.7" y="552.1" width="5.7" height="8.9" fill="#F3CF7C"/>
<rect x="1212.7" y="471.3" width="5.7" height="1" fill="#000" fill-opacity="0.18"/>
<rect x="1212.7" y="522.5" width="5.7" height="1" fill="#000" fill-opacity="0.18"/>
<rect x="1212.7" y="551.6" width="5.7" height="1" fill="#000" fill-opacity="0.18"/>
<rect x="1212.7" y="559.6" width="5.7" height="1.4" fill="#FCEACA" fill-opacity="0.5"/>
<rect x="1221.1" y="417.6" width="5.7" height="57.1" fill="#E24D42"/>
<rect x="1221.1" y="474.8" width="5.7" height="49.1" fill="#EF843C"/>
<rect x="1221.1" y="523.9" width="5.7" height="26.8" fill="#EAB839"/>
<rect x="1221.1" y="550.7" width="5.7" height="10.3" fill="#F3CF7C"/>
<rect x="1221.1" y="474.3" width="5.7" height="1" fill="#000" fill-opacity="0.18"/>
<rect x="1221.1" y="523.4" width="5.7" height="1" fill="#000" fill-opacity="0.18"/>
<rect x="1221.1" y="550.2" width="5.7" height="1" fill="#000" fill-opacity="0.18"/>
<rect x="1221.1" y="559.6" width="5.7" height="1.4" fill="#FCEACA" fill-opacity="0.5"/>
<rect x="1229.4" y="394.4" width="5.7" height="74.4" fill="#E24D42"/>
<rect x="1229.4" y="468.8" width="5.7" height="59.5" fill="#EF843C"/>
<rect x="1229.4" y="528.3" width="5.7" height="26.8" fill="#EAB839"/>
<rect x="1229.4" y="555.1" width="5.7" height="5.9" fill="#F3CF7C"/>
<rect x="1229.4" y="468.3" width="5.7" height="1" fill="#000" fill-opacity="0.18"/>
<rect x="1229.4" y="527.8" width="5.7" height="1" fill="#000" fill-opacity="0.18"/>
<rect x="1229.4" y="554.6" width="5.7" height="1" fill="#000" fill-opacity="0.18"/>
<rect x="1229.4" y="559.6" width="5.7" height="1.4" fill="#FCEACA" fill-opacity="0.5"/>
<rect x="1237.7" y="418.8" width="5.7" height="65.5" fill="#E24D42"/>
<rect x="1237.7" y="484.3" width="5.7" height="47.0" fill="#EF843C"/>
<rect x="1237.7" y="531.3" width="5.7" height="23.2" fill="#EAB839"/>
<rect x="1237.7" y="554.5" width="5.7" height="6.5" fill="#F3CF7C"/>
<rect x="1237.7" y="483.8" width="5.7" height="1" fill="#000" fill-opacity="0.18"/>
<rect x="1237.7" y="530.8" width="5.7" height="1" fill="#000" fill-opacity="0.18"/>
<rect x="1237.7" y="554.0" width="5.7" height="1" fill="#000" fill-opacity="0.18"/>
<rect x="1237.7" y="559.6" width="5.7" height="1.4" fill="#FCEACA" fill-opacity="0.5"/>
<rect x="1246.1" y="441.1" width="5.7" height="56.5" fill="#E24D42"/>
<rect x="1246.1" y="497.7" width="5.7" height="34.5" fill="#EF843C"/>
<rect x="1246.1" y="532.2" width="5.7" height="22.3" fill="#EAB839"/>
<rect x="1246.1" y="554.5" width="5.7" height="6.5" fill="#F3CF7C"/>
<rect x="1246.1" y="497.2" width="5.7" height="1" fill="#000" fill-opacity="0.18"/>
<rect x="1246.1" y="531.7" width="5.7" height="1" fill="#000" fill-opacity="0.18"/>
<rect x="1246.1" y="554.0" width="5.7" height="1" fill="#000" fill-opacity="0.18"/>
<rect x="1246.1" y="559.6" width="5.7" height="1.4" fill="#FCEACA" fill-opacity="0.5"/>
<rect x="1254.4" y="392.9" width="5.7" height="78.0" fill="#E24D42"/>
<rect x="1254.4" y="470.9" width="5.7" height="55.4" fill="#EF843C"/>
<rect x="1254.4" y="526.2" width="5.7" height="28.3" fill="#EAB839"/>
<rect x="1254.4" y="554.5" width="5.7" height="6.5" fill="#F3CF7C"/>
<rect x="1254.4" y="470.4" width="5.7" height="1" fill="#000" fill-opacity="0.18"/>
<rect x="1254.4" y="525.8" width="5.7" height="1" fill="#000" fill-opacity="0.18"/>
<rect x="1254.4" y="554.0" width="5.7" height="1" fill="#000" fill-opacity="0.18"/>
<rect x="1254.4" y="559.6" width="5.7" height="1.4" fill="#FCEACA" fill-opacity="0.5"/>
<rect x="1262.7" y="422.7" width="5.7" height="66.1" fill="#E24D42"/>
<rect x="1262.7" y="488.8" width="5.7" height="44.6" fill="#EF843C"/>
<rect x="1262.7" y="533.4" width="5.7" height="22.6" fill="#EAB839"/>
<rect x="1262.7" y="556.0" width="5.7" height="5.0" fill="#F3CF7C"/>
<rect x="1262.7" y="488.2" width="5.7" height="1" fill="#000" fill-opacity="0.18"/>
<rect x="1262.7" y="532.9" width="5.7" height="1" fill="#000" fill-opacity="0.18"/>
<rect x="1262.7" y="555.5" width="5.7" height="1" fill="#000" fill-opacity="0.18"/>
<rect x="1262.7" y="559.6" width="5.7" height="1.4" fill="#FCEACA" fill-opacity="0.5"/>
<rect x="1271.0" y="419.7" width="5.7" height="62.5" fill="#E24D42"/>
<rect x="1271.0" y="482.2" width="5.7" height="50.0" fill="#EF843C"/>
<rect x="1271.0" y="532.2" width="5.7" height="22.9" fill="#EAB839"/>
<rect x="1271.0" y="555.1" width="5.7" height="5.9" fill="#F3CF7C"/>
<rect x="1271.0" y="481.7" width="5.7" height="1" fill="#000" fill-opacity="0.18"/>
<rect x="1271.0" y="531.7" width="5.7" height="1" fill="#000" fill-opacity="0.18"/>
<rect x="1271.0" y="554.6" width="5.7" height="1" fill="#000" fill-opacity="0.18"/>
<rect x="1271.0" y="559.6" width="5.7" height="1.4" fill="#FCEACA" fill-opacity="0.5"/>
<rect x="1279.4" y="412.9" width="5.7" height="65.5" fill="#E24D42"/>
<rect x="1279.4" y="478.3" width="5.7" height="53.0" fill="#EF843C"/>
<rect x="1279.4" y="531.3" width="5.7" height="24.4" fill="#EAB839"/>
<rect x="1279.4" y="555.7" width="5.7" height="5.3" fill="#F3CF7C"/>
<rect x="1279.4" y="477.8" width="5.7" height="1" fill="#000" fill-opacity="0.18"/>
<rect x="1279.4" y="530.8" width="5.7" height="1" fill="#000" fill-opacity="0.18"/>
<rect x="1279.4" y="555.2" width="5.7" height="1" fill="#000" fill-opacity="0.18"/>
<rect x="1279.4" y="559.6" width="5.7" height="1.4" fill="#FCEACA" fill-opacity="0.5"/>
<rect x="1287.7" y="409.9" width="5.7" height="72.9" fill="#E24D42"/>
<rect x="1287.7" y="482.8" width="5.7" height="51.5" fill="#EF843C"/>
<rect x="1287.7" y="534.3" width="5.7" height="22.3" fill="#EAB839"/>
<rect x="1287.7" y="556.6" width="5.7" height="4.4" fill="#F3CF7C"/>
<rect x="1287.7" y="482.3" width="5.7" height="1" fill="#000" fill-opacity="0.18"/>
<rect x="1287.7" y="533.8" width="5.7" height="1" fill="#000" fill-opacity="0.18"/>
<rect x="1287.7" y="556.1" width="5.7" height="1" fill="#000" fill-opacity="0.18"/>
<rect x="1287.7" y="559.6" width="5.7" height="1.4" fill="#FCEACA" fill-opacity="0.5"/>
<rect x="1296.0" y="417.6" width="5.7" height="65.2" fill="#E24D42"/>
<rect x="1296.0" y="482.8" width="5.7" height="44.6" fill="#EF843C"/>
<rect x="1296.0" y="527.4" width="5.7" height="27.7" fill="#EAB839"/>
<rect x="1296.0" y="555.1" width="5.7" height="5.9" fill="#F3CF7C"/>
<rect x="1296.0" y="482.3" width="5.7" height="1" fill="#000" fill-opacity="0.18"/>
<rect x="1296.0" y="526.9" width="5.7" height="1" fill="#000" fill-opacity="0.18"/>
<rect x="1296.0" y="554.6" width="5.7" height="1" fill="#000" fill-opacity="0.18"/>
<rect x="1296.0" y="559.6" width="5.7" height="1.4" fill="#FCEACA" fill-opacity="0.5"/>
<path d="M25.8,671.8 L50.5,673.7 L75.1,668.8 L99.8,670.7 L124.4,636.8 L149.1,669.5 L173.8,647.6 L198.4,670.7 L223.1,673.0 L247.7,664.9 L272.4,659.8 L297.1,681.0 L321.7,671.3 L346.4,671.1 L371.0,669.0 L395.7,663.3 L420.4,664.2 L445.0,667.9 L469.7,668.4 L494.3,674.8 L519.0,674.8 L543.7,667.7 L568.3,674.8 L593.0,659.6 L617.6,663.3 L642.3,676.9 L667.0,674.1 L691.6,679.2 L716.3,656.8 L740.9,650.4 L765.6,670.7 L790.3,660.7 L814.9,674.6 L839.6,668.8 L864.2,663.7 L888.9,680.6 L913.6,670.7 L938.2,675.3 L962.9,662.6 L987.5,675.7 L1012.2,673.0 L1036.9,666.7 L1061.5,670.2 L1086.2,678.3 L1110.8,670.0 L1135.5,680.6 L1160.2,658.7 L1184.8,669.0 L1209.5,666.7 L1234.1,676.9 L1258.8,664.2 L1283.5,670.7 L1308.1,677.6 L1332.8,661.9 L1357.4,670.4 L1382.1,673.2 L1406.8,671.0 L1431.4,665.2 L1456.1,671.0 L1456.1,718.0 L25.8,718.0 Z" fill="#629E51" fill-opacity="0.25"/>
<path d="M25.8,684.5 L50.5,683.8 L75.1,683.8 L99.8,682.9 L124.4,671.3 L149.1,683.8 L173.8,668.8 L198.4,680.3 L223.1,685.0 L247.7,685.6 L272.4,685.6 L297.1,688.6 L321.7,682.2 L346.4,680.6 L371.0,684.0 L395.7,679.2 L420.4,676.0 L445.0,683.3 L469.7,676.4 L494.3,685.6 L519.0,687.9 L543.7,680.6 L568.3,681.7 L593.0,676.9 L617.6,681.7 L642.3,686.8 L667.0,686.8 L691.6,685.6 L716.3,684.0 L740.9,677.6 L765.6,686.8 L790.3,678.7 L814.9,683.3 L839.6,683.3 L864.2,682.2 L888.9,686.3 L913.6,678.3 L938.2,681.7 L962.9,675.3 L987.5,685.6 L1012.2,685.0 L1036.9,683.8 L1061.5,678.7 L1086.2,689.1 L1110.8,682.6 L1135.5,689.1 L1160.2,677.6 L1184.8,681.0 L1209.5,681.0 L1234.1,682.9 L1258.8,675.7 L1283.5,684.0 L1308.1,692.1 L1332.8,677.6 L1357.4,685.0 L1382.1,681.8 L1406.8,679.0 L1431.4,680.3 L1456.1,685.7 L1456.1,718.0 L25.8,718.0 Z" fill="#629E51" fill-opacity="0.25"/>
<path d="M25.8,699.0 L50.5,701.1 L75.1,697.2 L99.8,694.9 L124.4,694.9 L149.1,699.9 L173.8,692.6 L198.4,697.2 L223.1,697.9 L247.7,701.8 L272.4,700.2 L297.1,700.6 L321.7,700.2 L346.4,699.9 L371.0,700.6 L395.7,696.0 L420.4,697.2 L445.0,697.2 L469.7,695.6 L494.3,701.1 L519.0,700.6 L543.7,695.6 L568.3,694.9 L593.0,698.8 L617.6,700.2 L642.3,701.8 L667.0,703.4 L691.6,698.6 L716.3,701.8 L740.9,697.9 L765.6,701.8 L790.3,697.2 L814.9,699.5 L839.6,698.3 L864.2,698.3 L888.9,701.3 L913.6,696.7 L938.2,696.7 L962.9,695.3 L987.5,699.5 L1012.2,696.0 L1036.9,699.9 L1061.5,696.5 L1086.2,702.5 L1110.8,701.3 L1135.5,702.9 L1160.2,697.2 L1184.8,696.7 L1209.5,696.7 L1234.1,698.3 L1258.8,699.0 L1283.5,701.3 L1308.1,702.5 L1332.8,697.9 L1357.4,701.2 L1382.1,702.2 L1406.8,700.7 L1431.4,701.2 L1456.1,698.0 L1456.1,718.0 L25.8,718.0 Z" fill="#629E51" fill-opacity="0.25"/>
<path d="M25.8,712.9 L50.5,712.9 L75.1,709.9 L99.8,712.2 L124.4,708.7 L149.1,711.0 L173.8,709.2 L198.4,709.9 L223.1,710.3 L247.7,712.9 L272.4,713.3 L297.1,712.9 L321.7,715.2 L346.4,712.2 L371.0,713.8 L395.7,708.7 L420.4,711.0 L445.0,713.8 L469.7,708.7 L494.3,713.3 L519.0,713.3 L543.7,710.3 L568.3,712.6 L593.0,709.4 L617.6,712.4 L642.3,713.3 L667.0,714.9 L691.6,711.7 L716.3,712.9 L740.9,714.5 L765.6,713.8 L790.3,712.2 L814.9,713.8 L839.6,711.0 L864.2,710.5 L888.9,712.2 L913.6,709.9 L938.2,712.9 L962.9,709.9 L987.5,714.0 L1012.2,712.9 L1036.9,714.0 L1061.5,713.3 L1086.2,713.8 L1110.8,714.5 L1135.5,716.3 L1160.2,712.2 L1184.8,709.4 L1209.5,711.7 L1234.1,710.3 L1258.8,713.3 L1283.5,713.3 L1308.1,713.3 L1332.8,713.3 L1357.4,714.1 L1382.1,713.0 L1406.8,714.1 L1431.4,715.2 L1456.1,713.7 L1456.1,718.0 L25.8,718.0 Z" fill="#629E51" fill-opacity="0.25"/>
<path d="M25.8,763.6 L50.5,761.7 L75.1,767.0 L99.8,765.2 L124.4,799.1 L149.1,766.3 L173.8,788.2 L198.4,765.2 L223.1,762.4 L247.7,769.8 L272.4,775.6 L297.1,754.8 L321.7,764.0 L346.4,764.0 L371.0,766.3 L395.7,772.1 L420.4,771.6 L445.0,767.5 L469.7,767.5 L494.3,761.0 L519.0,761.0 L543.7,768.2 L568.3,761.0 L593.0,776.0 L617.6,772.6 L642.3,759.0 L667.0,761.7 L691.6,756.4 L716.3,777.9 L740.9,785.9 L765.6,765.2 L790.3,775.1 L814.9,761.3 L839.6,767.0 L864.2,772.1 L888.9,754.8 L913.6,765.2 L938.2,760.6 L962.9,773.3 L987.5,759.9 L1012.2,762.9 L1036.9,769.1 L1061.5,765.7 L1086.2,757.1 L1110.8,765.9 L1135.5,754.8 L1160.2,777.2 L1184.8,766.8 L1209.5,768.7 L1234.1,759.4 L1258.8,771.4 L1283.5,765.2 L1308.1,758.3 L1332.8,773.7 L1357.4,764.6 L1382.1,762.5 L1406.8,764.6 L1431.4,770.0 L1456.1,764.6 L1456.1,718.0 L25.8,718.0 Z" fill="#EF843C" fill-opacity="0.3"/>
<path d="M25.8,736.8 L50.5,734.8 L75.1,738.0 L99.8,741.0 L124.4,741.0 L149.1,736.4 L173.8,743.3 L198.4,738.7 L223.1,738.0 L247.7,734.1 L272.4,735.2 L297.1,734.8 L321.7,735.7 L346.4,735.7 L371.0,735.7 L395.7,739.8 L420.4,738.7 L445.0,738.7 L469.7,741.0 L494.3,734.8 L519.0,735.2 L543.7,740.3 L568.3,741.4 L593.0,737.1 L617.6,735.9 L642.3,734.1 L667.0,732.2 L691.6,737.5 L716.3,734.1 L740.9,738.0 L765.6,734.1 L790.3,738.2 L814.9,736.4 L839.6,737.5 L864.2,737.5 L888.9,734.5 L913.6,738.7 L938.2,739.1 L962.9,741.0 L987.5,735.9 L1012.2,740.3 L1036.9,736.4 L1061.5,739.1 L1086.2,732.9 L1110.8,734.5 L1135.5,732.9 L1160.2,738.7 L1184.8,739.1 L1209.5,739.1 L1234.1,738.0 L1258.8,737.1 L1283.5,735.2 L1308.1,733.4 L1332.8,738.0 L1357.4,734.1 L1382.1,733.4 L1406.8,735.0 L1431.4,734.1 L1456.1,738.2 L1456.1,718.0 L25.8,718.0 Z" fill="#EAB839" fill-opacity="0.3"/>
<path d="M25.8,671.8 L50.5,673.7 L75.1,668.8 L99.8,670.7 L124.4,636.8 L149.1,669.5 L173.8,647.6 L198.4,670.7 L223.1,673.0 L247.7,664.9 L272.4,659.8 L297.1,681.0 L321.7,671.3 L346.4,671.1 L371.0,669.0 L395.7,663.3 L420.4,664.2 L445.0,667.9 L469.7,668.4 L494.3,674.8 L519.0,674.8 L543.7,667.7 L568.3,674.8 L593.0,659.6 L617.6,663.3 L642.3,676.9 L667.0,674.1 L691.6,679.2 L716.3,656.8 L740.9,650.4 L765.6,670.7 L790.3,660.7 L814.9,674.6 L839.6,668.8 L864.2,663.7 L888.9,680.6 L913.6,670.7 L938.2,675.3 L962.9,662.6 L987.5,675.7 L1012.2,673.0 L1036.9,666.7 L1061.5,670.2 L1086.2,678.3 L1110.8,670.0 L1135.5,680.6 L1160.2,658.7 L1184.8,669.0 L1209.5,666.7 L1234.1,676.9 L1258.8,664.2 L1283.5,670.7 L1308.1,677.6 L1332.8,661.9 L1357.4,670.4 L1382.1,673.2 L1406.8,671.0 L1431.4,665.2 L1456.1,671.0" fill="none" stroke="#629E51" stroke-width="2" stroke-linejoin="round"/>
<path d="M25.8,684.5 L50.5,683.8 L75.1,683.8 L99.8,682.9 L124.4,671.3 L149.1,683.8 L173.8,668.8 L198.4,680.3 L223.1,685.0 L247.7,685.6 L272.4,685.6 L297.1,688.6 L321.7,682.2 L346.4,680.6 L371.0,684.0 L395.7,679.2 L420.4,676.0 L445.0,683.3 L469.7,676.4 L494.3,685.6 L519.0,687.9 L543.7,680.6 L568.3,681.7 L593.0,676.9 L617.6,681.7 L642.3,686.8 L667.0,686.8 L691.6,685.6 L716.3,684.0 L740.9,677.6 L765.6,686.8 L790.3,678.7 L814.9,683.3 L839.6,683.3 L864.2,682.2 L888.9,686.3 L913.6,678.3 L938.2,681.7 L962.9,675.3 L987.5,685.6 L1012.2,685.0 L1036.9,683.8 L1061.5,678.7 L1086.2,689.1 L1110.8,682.6 L1135.5,689.1 L1160.2,677.6 L1184.8,681.0 L1209.5,681.0 L1234.1,682.9 L1258.8,675.7 L1283.5,684.0 L1308.1,692.1 L1332.8,677.6 L1357.4,685.0 L1382.1,681.8 L1406.8,679.0 L1431.4,680.3 L1456.1,685.7" fill="none" stroke="#629E51" stroke-width="2" stroke-linejoin="round"/>
<path d="M25.8,699.0 L50.5,701.1 L75.1,697.2 L99.8,694.9 L124.4,694.9 L149.1,699.9 L173.8,692.6 L198.4,697.2 L223.1,697.9 L247.7,701.8 L272.4,700.2 L297.1,700.6 L321.7,700.2 L346.4,699.9 L371.0,700.6 L395.7,696.0 L420.4,697.2 L445.0,697.2 L469.7,695.6 L494.3,701.1 L519.0,700.6 L543.7,695.6 L568.3,694.9 L593.0,698.8 L617.6,700.2 L642.3,701.8 L667.0,703.4 L691.6,698.6 L716.3,701.8 L740.9,697.9 L765.6,701.8 L790.3,697.2 L814.9,699.5 L839.6,698.3 L864.2,698.3 L888.9,701.3 L913.6,696.7 L938.2,696.7 L962.9,695.3 L987.5,699.5 L1012.2,696.0 L1036.9,699.9 L1061.5,696.5 L1086.2,702.5 L1110.8,701.3 L1135.5,702.9 L1160.2,697.2 L1184.8,696.7 L1209.5,696.7 L1234.1,698.3 L1258.8,699.0 L1283.5,701.3 L1308.1,702.5 L1332.8,697.9 L1357.4,701.2 L1382.1,702.2 L1406.8,700.7 L1431.4,701.2 L1456.1,698.0" fill="none" stroke="#629E51" stroke-width="2" stroke-linejoin="round"/>
<path d="M25.8,712.9 L50.5,712.9 L75.1,709.9 L99.8,712.2 L124.4,708.7 L149.1,711.0 L173.8,709.2 L198.4,709.9 L223.1,710.3 L247.7,712.9 L272.4,713.3 L297.1,712.9 L321.7,715.2 L346.4,712.2 L371.0,713.8 L395.7,708.7 L420.4,711.0 L445.0,713.8 L469.7,708.7 L494.3,713.3 L519.0,713.3 L543.7,710.3 L568.3,712.6 L593.0,709.4 L617.6,712.4 L642.3,713.3 L667.0,714.9 L691.6,711.7 L716.3,712.9 L740.9,714.5 L765.6,713.8 L790.3,712.2 L814.9,713.8 L839.6,711.0 L864.2,710.5 L888.9,712.2 L913.6,709.9 L938.2,712.9 L962.9,709.9 L987.5,714.0 L1012.2,712.9 L1036.9,714.0 L1061.5,713.3 L1086.2,713.8 L1110.8,714.5 L1135.5,716.3 L1160.2,712.2 L1184.8,709.4 L1209.5,711.7 L1234.1,710.3 L1258.8,713.3 L1283.5,713.3 L1308.1,713.3 L1332.8,713.3 L1357.4,714.1 L1382.1,713.0 L1406.8,714.1 L1431.4,715.2 L1456.1,713.7" fill="none" stroke="#629E51" stroke-width="2" stroke-linejoin="round"/>
<path d="M25.8,763.6 L50.5,761.7 L75.1,767.0 L99.8,765.2 L124.4,799.1 L149.1,766.3 L173.8,788.2 L198.4,765.2 L223.1,762.4 L247.7,769.8 L272.4,775.6 L297.1,754.8 L321.7,764.0 L346.4,764.0 L371.0,766.3 L395.7,772.1 L420.4,771.6 L445.0,767.5 L469.7,767.5 L494.3,761.0 L519.0,761.0 L543.7,768.2 L568.3,761.0 L593.0,776.0 L617.6,772.6 L642.3,759.0 L667.0,761.7 L691.6,756.4 L716.3,777.9 L740.9,785.9 L765.6,765.2 L790.3,775.1 L814.9,761.3 L839.6,767.0 L864.2,772.1 L888.9,754.8 L913.6,765.2 L938.2,760.6 L962.9,773.3 L987.5,759.9 L1012.2,762.9 L1036.9,769.1 L1061.5,765.7 L1086.2,757.1 L1110.8,765.9 L1135.5,754.8 L1160.2,777.2 L1184.8,766.8 L1209.5,768.7 L1234.1,759.4 L1258.8,771.4 L1283.5,765.2 L1308.1,758.3 L1332.8,773.7 L1357.4,764.6 L1382.1,762.5 L1406.8,764.6 L1431.4,770.0 L1456.1,764.6" fill="none" stroke="#EF843C" stroke-width="2" stroke-linejoin="round"/>
<path d="M25.8,736.8 L50.5,734.8 L75.1,738.0 L99.8,741.0 L124.4,741.0 L149.1,736.4 L173.8,743.3 L198.4,738.7 L223.1,738.0 L247.7,734.1 L272.4,735.2 L297.1,734.8 L321.7,735.7 L346.4,735.7 L371.0,735.7 L395.7,739.8 L420.4,738.7 L445.0,738.7 L469.7,741.0 L494.3,734.8 L519.0,735.2 L543.7,740.3 L568.3,741.4 L593.0,737.1 L617.6,735.9 L642.3,734.1 L667.0,732.2 L691.6,737.5 L716.3,734.1 L740.9,738.0 L765.6,734.1 L790.3,738.2 L814.9,736.4 L839.6,737.5 L864.2,737.5 L888.9,734.5 L913.6,738.7 L938.2,739.1 L962.9,741.0 L987.5,735.9 L1012.2,740.3 L1036.9,736.4 L1061.5,739.1 L1086.2,732.9 L1110.8,734.5 L1135.5,732.9 L1160.2,738.7 L1184.8,739.1 L1209.5,739.1 L1234.1,738.0 L1258.8,737.1 L1283.5,735.2 L1308.1,733.4 L1332.8,738.0 L1357.4,734.1 L1382.1,733.4 L1406.8,735.0 L1431.4,734.1 L1456.1,738.2" fill="none" stroke="#EAB839" stroke-width="2" stroke-linejoin="round"/>
<rect x="25.8" y="717" width="1430.3" height="1" fill="#68a856"/>
<rect x="25.8" y="718" width="1430.3" height="1.2" fill="#d6c274"/>
</svg>
<div class="t" style="top:8px;left:184.5px;width:400px;text-align:center;font-weight:bold;font-size:13px;letter-spacing:-0.123px;">server requests</div><div class="t" style="top:8px;left:939px;width:400px;text-align:center;font-weight:bold;font-size:13px;letter-spacing:0.121px;">logins</div><div class="t" style="top:300px;left:184.5px;width:400px;text-align:center;font-weight:bold;font-size:13px;letter-spacing:0.072px;">Memory / CPU</div><div class="t" style="top:300px;left:939px;width:400px;text-align:center;font-weight:bold;font-size:13px;letter-spacing:0.078px;">client side full page load</div><div class="t" style="top:616px;left:562px;width:400px;text-align:center;font-weight:bold;font-size:13px;letter-spacing:-0.149px;">Negative</div><div class="t" style="top:190px;right:1470.5px;letter-spacing:0.106px;margin-right:-0.106px;">0.0</div><div class="t" style="top:163px;right:1470.5px;letter-spacing:0.161px;margin-right:-0.161px;">25.0</div><div class="t" style="top:136px;right:1470.5px;letter-spacing:0.161px;margin-right:-0.161px;">50.0</div><div class="t" style="top:109px;right:1470.5px;letter-spacing:0.161px;margin-right:-0.161px;">75.0</div><div class="t" style="top:82px;right:1470.5px;letter-spacing:0.194px;margin-right:-0.194px;">100.0</div><div class="t" style="top:55px;right:1470.5px;letter-spacing:0.194px;margin-right:-0.194px;">125.0</div><div class="t" style="top:28px;right:1470.5px;letter-spacing:0.194px;margin-right:-0.194px;">150.0</div><div class="t" style="top:205px;left:-109.5px;width:400px;text-align:center;letter-spacing:0.194px;">14:00</div><div class="t" style="top:205px;left:2.5px;width:400px;text-align:center;letter-spacing:0.194px;">14:10</div><div class="t" style="top:205px;left:114.5px;width:400px;text-align:center;letter-spacing:0.194px;">14:20</div><div class="t" style="top:205px;left:227.5px;width:400px;text-align:center;letter-spacing:0.194px;">14:30</div><div class="t" style="top:205px;left:339.5px;width:400px;text-align:center;letter-spacing:0.194px;">14:40</div><div class="t" style="top:205px;left:451.5px;width:400px;text-align:center;letter-spacing:0.194px;">14:50</div><div class="sw" style="left:47px;top:238px;width:11px;background:#B7DBAB"></div><div class="t" style="top:231px;left:62px;letter-spacing:0.227px;">web_server_01</div><div class="t" style="top:231px;left:153px;letter-spacing:0.062px;">Avg: 27.54</div><div class="sw" style="left:221px;top:238px;width:11px;background:#7EB26D"></div><div class="t" style="top:231px;left:236px;letter-spacing:0.227px;">web_server_02</div><div class="t" style="top:231px;left:327px;letter-spacing:0.062px;">Avg: 27.64</div><div class="sw" style="left:395px;top:238px;width:11px;background:#558C44"></div><div class="t" style="top:231px;left:410px;letter-spacing:0.227px;">web_server_03</div><div class="t" style="top:231px;left:501px;letter-spacing:0.062px;">Avg: 27.69</div><div class="sw" style="left:47px;top:264px;width:11px;background:#3F6833"></div><div class="t" style="top:257px;left:62px;letter-spacing:0.227px;">web_server_04</div><div class="t" style="top:257px;left:153px;letter-spacing:0.062px;">Avg: 27.52</div><div class="t" style="top:190px;right:723px;letter-spacing:0.106px;margin-right:-0.106px;">0.0</div><div class="t" style="top:149px;right:723px;letter-spacing:0.161px;margin-right:-0.161px;">10.0</div><div class="t" style="top:109px;right:723px;letter-spacing:0.161px;margin-right:-0.161px;">20.0</div><div class="t" style="top:68px;right:723px;letter-spacing:0.161px;margin-right:-0.161px;">30.0</div><div class="t" style="top:28px;right:723px;letter-spacing:0.161px;margin-right:-0.161px;">40.0</div><div class="t" style="top:205px;left:638.5px;width:400px;text-align:center;letter-spacing:0.194px;">14:00</div><div class="t" style="top:205px;left:752.5px;width:400px;text-align:center;letter-spacing:0.194px;">14:10</div><div class="t" style="top:205px;left:865.5px;width:400px;text-align:center;letter-spacing:0.194px;">14:20</div><div class="t" style="top:205px;left:978.5px;width:400px;text-align:center;letter-spacing:0.194px;">14:30</div><div class="t" style="top:205px;left:1092.5px;width:400px;text-align:center;letter-spacing:0.194px;">14:40</div><div class="t" style="top:205px;left:1205.5px;width:400px;text-align:center;letter-spacing:0.194px;">14:50</div><div class="sw" style="left:802px;top:239px;width:11px;background:#7EB26D"></div><div class="t" style="top:231px;left:817px;letter-spacing:0.274px;">logins</div><div class="sw" style="left:860px;top:239px;width:11px;background:#EAB839"></div><div class="t" style="top:231px;left:875px;letter-spacing:0.144px;">logins (-1 hour)</div><div class="t" style="top:532px;right:1466.7px;letter-spacing:-0.004px;margin-right:--0.004px;">5.0 B</div><div class="t" style="top:479px;right:1466.7px;letter-spacing:0.051px;margin-right:-0.051px;">10.0 B</div><div class="t" style="top:426px;right:1466.7px;letter-spacing:0.051px;margin-right:-0.051px;">15.0 B</div><div class="t" style="top:373px;right:1466.7px;letter-spacing:0.051px;margin-right:-0.051px;">20.0 B</div><div class="t" style="top:320px;right:1466.7px;letter-spacing:0.051px;margin-right:-0.051px;">25.0 B</div><div class="t" style="top:532px;left:725px;letter-spacing:0.326px;">0</div><div class="t" style="top:497px;left:725px;letter-spacing:0.106px;">0.5</div><div class="t" style="top:461px;left:725px;letter-spacing:0.106px;">1.0</div><div class="t" style="top:426px;left:725px;letter-spacing:0.106px;">1.5</div><div class="t" style="top:390px;left:725px;letter-spacing:0.106px;">2.0</div><div class="t" style="top:355px;left:725px;letter-spacing:0.106px;">2.5</div><div class="t" style="top:320px;left:725px;letter-spacing:0.106px;">3.0</div><div class="t" style="top:547px;left:-106.5px;width:400px;text-align:center;letter-spacing:0.194px;">14:00</div><div class="t" style="top:547px;left:3.5px;width:400px;text-align:center;letter-spacing:0.194px;">14:10</div><div class="t" style="top:547px;left:113.5px;width:400px;text-align:center;letter-spacing:0.194px;">14:20</div><div class="t" style="top:547px;left:222.5px;width:400px;text-align:center;letter-spacing:0.194px;">14:30</div><div class="t" style="top:547px;left:332.5px;width:400px;text-align:center;letter-spacing:0.194px;">14:40</div><div class="t" style="top:547px;left:442.5px;width:400px;text-align:center;letter-spacing:0.194px;">14:50</div><div class="sw" style="left:47px;top:580px;width:11px;background:#6ED0E0"></div><div class="t" style="top:573px;left:62px;letter-spacing:0.111px;">memory</div><div class="sw" style="left:687px;top:580px;width:11px;background:#E24D42"></div><div class="t" style="top:573px;left:702px;letter-spacing:0.217px;">cpu</div><div class="t" style="top:552px;right:713px;letter-spacing:0.052px;margin-right:-0.052px;">0.0 ns</div><div class="t" style="top:514px;right:713px;letter-spacing:-0.003px;margin-right:--0.003px;">1.0 s</div><div class="t" style="top:475px;right:713px;letter-spacing:-0.003px;margin-right:--0.003px;">2.0 s</div><div class="t" style="top:436px;right:713px;letter-spacing:-0.003px;margin-right:--0.003px;">3.0 s</div><div class="t" style="top:397px;right:713px;letter-spacing:-0.003px;margin-right:--0.003px;">4.0 s</div><div class="t" style="top:358px;right:713px;letter-spacing:-0.003px;margin-right:--0.003px;">5.0 s</div><div class="t" style="top:320px;right:713px;letter-spacing:-0.003px;margin-right:--0.003px;">6.0 s</div><div class="t" style="top:568px;left:637.5px;width:400px;text-align:center;letter-spacing:0.194px;">14:00</div><div class="t" style="top:568px;left:721.5px;width:400px;text-align:center;letter-spacing:0.194px;">14:10</div><div class="t" style="top:568px;left:804.5px;width:400px;text-align:center;letter-spacing:0.194px;">14:20</div><div class="t" style="top:568px;left:887.5px;width:400px;text-align:center;letter-spacing:0.194px;">14:30</div><div class="t" style="top:568px;left:971.5px;width:400px;text-align:center;letter-spacing:0.194px;">14:40</div><div class="t" style="top:568px;left:1054.5px;width:400px;text-align:center;letter-spacing:0.194px;">14:50</div><div class="sw" style="left:1326px;top:328px;width:11px;background:#FCEACA"></div><div class="t" style="top:321px;left:1341px;letter-spacing:0.286px;">upper_25</div><div class="t" style="top:321px;left:1409px;letter-spacing:-0.003px;">Avg: 2.49 ms</div><div class="sw" style="left:1326px;top:349px;width:11px;background:#F2C96D"></div><div class="t" style="top:342px;left:1341px;letter-spacing:0.286px;">upper_50</div><div class="t" style="top:342px;left:1409px;letter-spacing:0.044px;">Avg: 194.64 ms</div><div class="sw" style="left:1326px;top:370px;width:11px;background:#EAB839"></div><div class="t" style="top:363px;left:1341px;letter-spacing:0.286px;">upper_75</div><div class="t" style="top:363px;left:1409px;letter-spacing:0.044px;">Avg: 677.81 ms</div><div class="sw" style="left:1326px;top:391px;width:11px;background:#EF843C"></div><div class="t" style="top:384px;left:1341px;letter-spacing:0.286px;">upper_90</div><div class="t" style="top:384px;left:1409px;letter-spacing:-0.003px;">Avg: 1.27 s</div><div class="sw" style="left:1326px;top:412px;width:11px;background:#E24D42"></div><div class="t" style="top:405px;left:1341px;letter-spacing:0.286px;">upper_95</div><div class="t" style="top:405px;left:1409px;letter-spacing:-0.003px;">Avg: 1.76 s</div>
<div class="btn"></div>
</body></html>
